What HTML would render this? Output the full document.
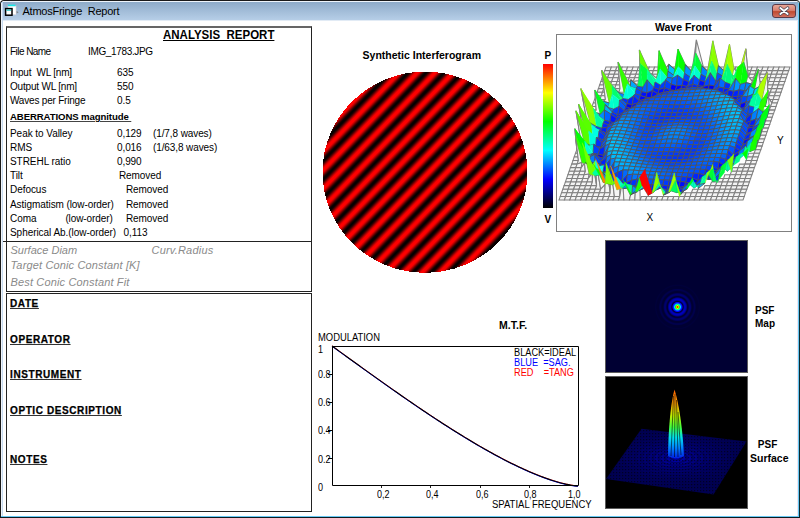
<!DOCTYPE html>
<html><head><meta charset="utf-8"><title>AtmosFringe Report</title><style>
*{margin:0;padding:0;box-sizing:border-box}
html,body{width:800px;height:518px;overflow:hidden;background:#fff}
body{position:relative;font-family:"Liberation Sans",sans-serif;color:#000}
.t{position:absolute;white-space:pre}
.abs{position:absolute}
</style></head>
<body>

<div class="abs" style="left:0;top:0;width:800px;height:518px;border:1px solid #1a1a1a;border-bottom-color:#0a1a20;border-right-color:#0a2a30;border-radius:4px 4px 0 0"></div>
<div class="abs" style="left:3px;top:1px;width:794px;height:1px;background:#eef4fb"></div>
<div class="abs" style="left:1px;top:2px;width:797px;height:18px;background:linear-gradient(#8eabc9,#b6cee7)"></div>
<div class="abs" style="left:1px;top:20px;width:797px;height:1px;background:#e2ebf5"></div>
<div class="abs" style="left:1px;top:3px;width:1px;height:513px;background:#eef4fb"></div>
<div class="abs" style="left:2px;top:2px;width:1px;height:514px;background:#c6daf0"></div>
<div class="abs" style="left:797px;top:20px;width:1px;height:497px;background:#ece6f4"></div>
<div class="abs" style="left:798px;top:3px;width:1px;height:514px;background:#68c8f2"></div>
<div class="abs" style="left:1px;top:516px;width:798px;height:1px;background:#68c8f2"></div>
<div class="abs" style="left:772px;top:4px;width:24px;height:14px;border:1px solid #5a3a48;border-radius:3px;background:linear-gradient(#e8a898 0%,#d98070 45%,#c04a30 55%,#d07060 100%)"></div>
<svg class="abs" style="left:772px;top:4px" width="24" height="14"><path d="M8.3 4 L15.7 10 M15.7 4 L8.3 10" stroke="#404050" stroke-width="3.3" stroke-linecap="round"/><path d="M8.3 4 L15.7 10 M15.7 4 L8.3 10" stroke="#fff" stroke-width="1.9" stroke-linecap="round"/></svg>
<svg class="abs" style="left:3px;top:3px" width="17" height="14"><rect x="5" y="3" width="8" height="8.5" fill="#fff" stroke="#e0d8d8" stroke-width="0.6"/><rect x="5" y="1.6" width="7.5" height="1.6" fill="#18e8e8"/><rect x="2.6" y="5.6" width="6.4" height="6.6" fill="#fff" stroke="#000" stroke-width="1.5"/><rect x="3.4" y="6.4" width="4.8" height="1.3" fill="#10b8b8"/><polygon points="13.6,8 15.6,9.3 13.6,10.6" fill="#808080"/></svg>
<div class="t" style="left:22.5px;top:4.5px;font-size:11px;line-height:13px;letter-spacing:-0.25px;color:#000">AtmosFringe&nbsp; Report</div>


<div class="abs" style="left:6px;top:26px;width:306px;height:266px;border:1px solid #222;border-top:2px solid #666"></div>
<div class="abs" style="left:3px;top:241px;width:308px;height:1px;background:#222"></div>
<div class="abs" style="left:6px;top:293px;width:306px;height:219px;border:1px solid #222"></div>
<div class="abs" style="left:556px;top:34px;width:236px;height:198px;border:1px solid #808080"></div>
<div class="abs" style="left:543px;top:64px;width:10px;height:144px;background:linear-gradient(#ff0000 0%,#ffff00 20%,#00ff00 40%,#00ffff 60%,#0000ff 80%,#000000 100%)"></div>
<div class="abs" style="left:605px;top:240px;width:143px;height:133px;background:#00002c"></div>
<svg class="abs" style="left:605px;top:240px" width="143" height="133"><defs><radialGradient id="psfm" gradientUnits="userSpaceOnUse" cx="72.5" cy="67" r="100"><stop offset="0.0000" stop-color="#ff0000"/><stop offset="0.0050" stop-color="#ff2600"/><stop offset="0.0100" stop-color="#ff9200"/><stop offset="0.0150" stop-color="#cfff00"/><stop offset="0.0200" stop-color="#1bff00"/><stop offset="0.0250" stop-color="#00ff92"/><stop offset="0.0300" stop-color="#00d9ff"/><stop offset="0.0350" stop-color="#006eff"/><stop offset="0.0400" stop-color="#002aff"/><stop offset="0.0450" stop-color="#0009ff"/><stop offset="0.0500" stop-color="#0000a1"/><stop offset="0.0550" stop-color="#000033"/><stop offset="0.0600" stop-color="#000057"/><stop offset="0.0650" stop-color="#000094"/><stop offset="0.0700" stop-color="#0000b4"/><stop offset="0.0750" stop-color="#0000bf"/><stop offset="0.0800" stop-color="#0000b9"/><stop offset="0.0850" stop-color="#0000a5"/><stop offset="0.0900" stop-color="#000085"/><stop offset="0.0950" stop-color="#00005d"/><stop offset="0.1000" stop-color="#000033"/><stop offset="0.1050" stop-color="#000033"/><stop offset="0.1100" stop-color="#000045"/><stop offset="0.1150" stop-color="#00005f"/><stop offset="0.1200" stop-color="#00006c"/><stop offset="0.1250" stop-color="#00006e"/><stop offset="0.1300" stop-color="#000068"/><stop offset="0.1350" stop-color="#000059"/><stop offset="0.1400" stop-color="#000043"/><stop offset="0.1450" stop-color="#000033"/><stop offset="0.1500" stop-color="#000033"/><stop offset="0.1550" stop-color="#000033"/><stop offset="0.1600" stop-color="#00003c"/><stop offset="0.1650" stop-color="#000048"/><stop offset="0.1700" stop-color="#00004d"/><stop offset="0.1750" stop-color="#00004b"/><stop offset="0.1800" stop-color="#000042"/><stop offset="0.1850" stop-color="#000035"/><stop offset="0.1900" stop-color="#000033"/><stop offset="0.1950" stop-color="#000033"/><stop offset="0.2000" stop-color="#000033"/><stop offset="0.2050" stop-color="#000033"/><stop offset="0.2100" stop-color="#000035"/><stop offset="0.2150" stop-color="#00003a"/><stop offset="0.2200" stop-color="#00003a"/><stop offset="0.2250" stop-color="#000035"/><stop offset="0.2300" stop-color="#000033"/><stop offset="0.2350" stop-color="#000033"/><stop offset="0.2400" stop-color="#000033"/><stop offset="0.2450" stop-color="#000033"/><stop offset="0.2500" stop-color="#000033"/><stop offset="0.2550" stop-color="#000033"/><stop offset="0.2600" stop-color="#000033"/><stop offset="0.2650" stop-color="#000033"/><stop offset="0.2700" stop-color="#000033"/><stop offset="0.2750" stop-color="#000033"/><stop offset="0.2800" stop-color="#000033"/><stop offset="0.2850" stop-color="#000033"/><stop offset="0.2900" stop-color="#000033"/><stop offset="0.2950" stop-color="#000033"/><stop offset="0.3000" stop-color="#000033"/><stop offset="0.3050" stop-color="#000033"/><stop offset="0.3100" stop-color="#000033"/><stop offset="0.3150" stop-color="#000033"/><stop offset="0.3200" stop-color="#000033"/><stop offset="0.3250" stop-color="#000033"/><stop offset="0.3300" stop-color="#000033"/><stop offset="0.3350" stop-color="#000033"/><stop offset="0.3400" stop-color="#000033"/><stop offset="0.3450" stop-color="#000033"/><stop offset="0.3500" stop-color="#000033"/><stop offset="0.3550" stop-color="#000033"/><stop offset="0.3600" stop-color="#000033"/><stop offset="0.3650" stop-color="#000033"/><stop offset="0.3700" stop-color="#000033"/><stop offset="0.3750" stop-color="#000033"/><stop offset="0.3800" stop-color="#000033"/><stop offset="0.3850" stop-color="#000033"/><stop offset="0.3900" stop-color="#000033"/><stop offset="0.3950" stop-color="#000033"/><stop offset="0.4000" stop-color="#000033"/><stop offset="0.4050" stop-color="#000033"/><stop offset="0.4100" stop-color="#000033"/><stop offset="0.4150" stop-color="#000033"/><stop offset="0.4200" stop-color="#000033"/><stop offset="0.4250" stop-color="#000033"/><stop offset="0.4300" stop-color="#000033"/><stop offset="0.4350" stop-color="#000033"/><stop offset="0.4400" stop-color="#000033"/><stop offset="0.4450" stop-color="#000033"/><stop offset="0.4500" stop-color="#000033"/><stop offset="0.4550" stop-color="#000033"/><stop offset="0.4600" stop-color="#000033"/><stop offset="0.4650" stop-color="#000033"/><stop offset="0.4700" stop-color="#000033"/><stop offset="0.4750" stop-color="#000033"/><stop offset="0.4800" stop-color="#000033"/><stop offset="0.4850" stop-color="#000033"/><stop offset="0.4900" stop-color="#000033"/><stop offset="0.4950" stop-color="#000033"/><stop offset="0.5000" stop-color="#000033"/><stop offset="0.5050" stop-color="#000033"/><stop offset="0.5100" stop-color="#000033"/><stop offset="0.5150" stop-color="#000033"/><stop offset="0.5200" stop-color="#000033"/><stop offset="0.5250" stop-color="#000033"/><stop offset="0.5300" stop-color="#000033"/><stop offset="0.5350" stop-color="#000033"/><stop offset="0.5400" stop-color="#000033"/><stop offset="0.5450" stop-color="#000033"/><stop offset="0.5500" stop-color="#000033"/><stop offset="0.5550" stop-color="#000033"/><stop offset="0.5600" stop-color="#000033"/><stop offset="0.5650" stop-color="#000033"/><stop offset="0.5700" stop-color="#000033"/><stop offset="0.5750" stop-color="#000033"/><stop offset="0.5800" stop-color="#000033"/><stop offset="0.5850" stop-color="#000033"/><stop offset="0.5900" stop-color="#000033"/><stop offset="0.5950" stop-color="#000033"/><stop offset="0.6000" stop-color="#000033"/><stop offset="0.6050" stop-color="#000033"/><stop offset="0.6100" stop-color="#000033"/><stop offset="0.6150" stop-color="#000033"/><stop offset="0.6200" stop-color="#000033"/><stop offset="0.6250" stop-color="#000033"/><stop offset="0.6300" stop-color="#000033"/><stop offset="0.6350" stop-color="#000033"/><stop offset="0.6400" stop-color="#000033"/><stop offset="0.6450" stop-color="#000033"/><stop offset="0.6500" stop-color="#000033"/><stop offset="0.6550" stop-color="#000033"/><stop offset="0.6600" stop-color="#000033"/><stop offset="0.6650" stop-color="#000033"/><stop offset="0.6700" stop-color="#000033"/><stop offset="0.6750" stop-color="#000033"/><stop offset="0.6800" stop-color="#000033"/><stop offset="0.6850" stop-color="#000033"/><stop offset="0.6900" stop-color="#000033"/><stop offset="0.6950" stop-color="#000033"/><stop offset="0.7000" stop-color="#000033"/><stop offset="0.7050" stop-color="#000033"/><stop offset="0.7100" stop-color="#000033"/><stop offset="0.7150" stop-color="#000033"/><stop offset="0.7200" stop-color="#000033"/><stop offset="0.7250" stop-color="#000033"/><stop offset="0.7300" stop-color="#000033"/><stop offset="0.7350" stop-color="#000033"/><stop offset="0.7400" stop-color="#000033"/><stop offset="0.7450" stop-color="#000033"/><stop offset="0.7500" stop-color="#000033"/><stop offset="0.7550" stop-color="#000033"/><stop offset="0.7600" stop-color="#000033"/><stop offset="0.7650" stop-color="#000033"/><stop offset="0.7700" stop-color="#000033"/><stop offset="0.7750" stop-color="#000033"/><stop offset="0.7800" stop-color="#000033"/><stop offset="0.7850" stop-color="#000033"/><stop offset="0.7900" stop-color="#000033"/><stop offset="0.7950" stop-color="#000033"/><stop offset="0.8000" stop-color="#000033"/><stop offset="0.8050" stop-color="#000033"/><stop offset="0.8100" stop-color="#000033"/><stop offset="0.8150" stop-color="#000033"/><stop offset="0.8200" stop-color="#000033"/><stop offset="0.8250" stop-color="#000033"/><stop offset="0.8300" stop-color="#000033"/><stop offset="0.8350" stop-color="#000033"/><stop offset="0.8400" stop-color="#000033"/><stop offset="0.8450" stop-color="#000033"/><stop offset="0.8500" stop-color="#000033"/><stop offset="0.8550" stop-color="#000033"/><stop offset="0.8600" stop-color="#000033"/><stop offset="0.8650" stop-color="#000033"/><stop offset="0.8700" stop-color="#000033"/><stop offset="0.8750" stop-color="#000033"/><stop offset="0.8800" stop-color="#000033"/><stop offset="0.8850" stop-color="#000033"/><stop offset="0.8900" stop-color="#000033"/><stop offset="0.8950" stop-color="#000033"/><stop offset="0.9000" stop-color="#000033"/><stop offset="0.9050" stop-color="#000033"/><stop offset="0.9100" stop-color="#000033"/><stop offset="0.9150" stop-color="#000033"/><stop offset="0.9200" stop-color="#000033"/><stop offset="0.9250" stop-color="#000033"/><stop offset="0.9300" stop-color="#000033"/><stop offset="0.9350" stop-color="#000033"/><stop offset="0.9400" stop-color="#000033"/><stop offset="0.9450" stop-color="#000033"/><stop offset="0.9500" stop-color="#000033"/><stop offset="0.9550" stop-color="#000033"/><stop offset="0.9600" stop-color="#000033"/><stop offset="0.9650" stop-color="#000033"/><stop offset="0.9700" stop-color="#000033"/><stop offset="0.9750" stop-color="#000033"/><stop offset="0.9800" stop-color="#000033"/><stop offset="0.9850" stop-color="#000033"/><stop offset="0.9900" stop-color="#000033"/><stop offset="0.9950" stop-color="#000033"/><stop offset="1.0000" stop-color="#000033"/></radialGradient></defs><rect width="143" height="133" fill="url(#psfm)"/><rect x="0.5" y="0.5" width="142" height="132" fill="none" stroke="#5c5c5c" stroke-width="1"/></svg>
<div class="abs" style="left:605px;top:376px;width:143px;height:133px;background:#000;border:1px solid #5c5c5c"></div>

<svg width="800" height="518" style="position:absolute;left:0;top:0">
<defs><linearGradient id="ifg" gradientUnits="userSpaceOnUse" x1="361.50" y1="121.00" x2="370.81" y2="129.99" spreadMethod="repeat"><stop offset="0.000" stop-color="#000000"/><stop offset="0.083" stop-color="#120000"/><stop offset="0.167" stop-color="#430000"/><stop offset="0.250" stop-color="#860000"/><stop offset="0.333" stop-color="#c90000"/><stop offset="0.417" stop-color="#fa0000"/><stop offset="0.500" stop-color="#ff0000"/><stop offset="0.583" stop-color="#fa0000"/><stop offset="0.667" stop-color="#c90000"/><stop offset="0.750" stop-color="#860000"/><stop offset="0.833" stop-color="#430000"/><stop offset="0.917" stop-color="#120000"/><stop offset="1.000" stop-color="#000000"/></linearGradient></defs>
<ellipse cx="425.0" cy="172.2" rx="102.5" ry="100.6" fill="url(#ifg)" shape-rendering="crispEdges"/>
</svg>
<svg width="800" height="518" style="position:absolute;left:0;top:0"><polygon points="606.0,67.0 611.4,67.0 610.1,70.6 604.7,70.6" fill="#f4f4f4" stroke="#808080" stroke-width="1.05"/><polygon points="611.4,67.0 616.8,67.0 615.6,70.6 610.1,70.6" fill="#f4f4f4" stroke="#808080" stroke-width="1.05"/><polygon points="616.8,67.0 622.2,67.0 621.0,70.6 615.6,70.6" fill="#f4f4f4" stroke="#808080" stroke-width="1.05"/><polygon points="622.2,67.0 627.6,67.0 626.4,70.6 621.0,70.6" fill="#f4f4f4" stroke="#808080" stroke-width="1.05"/><polygon points="627.6,67.0 633.1,67.0 631.8,70.6 626.4,70.6" fill="#f4f4f4" stroke="#808080" stroke-width="1.05"/><polygon points="633.1,67.0 638.5,67.0 637.2,70.6 631.8,70.6" fill="#f4f4f4" stroke="#808080" stroke-width="1.05"/><polygon points="638.5,67.0 643.9,67.0 642.6,70.6 637.2,70.6" fill="#f4f4f4" stroke="#808080" stroke-width="1.05"/><polygon points="643.9,67.0 649.3,67.0 648.0,70.6 642.6,70.6" fill="#f4f4f4" stroke="#808080" stroke-width="1.05"/><polygon points="649.3,67.0 654.7,67.0 653.4,70.6 648.0,70.6" fill="#f4f4f4" stroke="#808080" stroke-width="1.05"/><polygon points="654.7,67.0 660.1,67.0 658.8,70.6 653.4,70.6" fill="#f4f4f4" stroke="#808080" stroke-width="1.05"/><polygon points="660.1,67.0 665.5,67.0 664.3,70.6 658.8,70.6" fill="#f4f4f4" stroke="#808080" stroke-width="1.05"/><polygon points="665.5,67.0 670.9,67.0 668.8,64.4 664.3,70.6" fill="#f4f4f4" stroke="#808080" stroke-width="1.05"/><polygon points="670.9,67.0 676.4,67.0 674.9,69.4 668.8,64.4" fill="#f4f4f4" stroke="#808080" stroke-width="1.05"/><polygon points="676.4,67.0 681.8,67.0 678.0,49.1 674.9,69.4" fill="#f4f4f4" stroke="#808080" stroke-width="1.05"/><polygon points="681.8,67.0 687.2,67.0 685.3,64.7 678.0,49.1" fill="#f4f4f4" stroke="#808080" stroke-width="1.05"/><polygon points="687.2,67.0 692.6,67.0 691.3,70.6 685.3,64.7" fill="#f4f4f4" stroke="#808080" stroke-width="1.05"/><polygon points="692.6,67.0 696.4,39.9 695.7,53.0 691.3,70.6" fill="#f4f4f4" stroke="#808080" stroke-width="1.05"/><polygon points="696.4,39.9 703.4,67.0 701.9,65.9 695.7,53.0" fill="#f4f4f4" stroke="#808080" stroke-width="1.05"/><polygon points="703.4,67.0 708.8,67.0 707.6,70.6 701.9,65.9" fill="#f4f4f4" stroke="#808080" stroke-width="1.05"/><polygon points="708.8,67.0 714.2,67.0 712.8,40.9 707.6,70.6" fill="#f4f4f4" stroke="#808080" stroke-width="1.05"/><polygon points="714.2,67.0 719.6,67.0 718.4,65.7 712.8,40.9" fill="#f4f4f4" stroke="#808080" stroke-width="1.05"/><polygon points="719.6,67.0 725.1,67.0 723.8,70.6 718.4,65.7" fill="#f4f4f4" stroke="#808080" stroke-width="1.05"/><polygon points="725.1,67.0 730.5,67.0 729.2,70.6 723.8,70.6" fill="#f4f4f4" stroke="#808080" stroke-width="1.05"/><polygon points="730.5,67.0 735.9,67.0 734.6,70.6 729.2,70.6" fill="#f4f4f4" stroke="#808080" stroke-width="1.05"/><polygon points="735.9,67.0 741.3,67.0 740.0,70.6 734.6,70.6" fill="#f4f4f4" stroke="#808080" stroke-width="1.05"/><polygon points="741.3,67.0 746.7,67.0 745.4,70.6 740.0,70.6" fill="#f4f4f4" stroke="#808080" stroke-width="1.05"/><polygon points="746.7,67.0 752.1,67.0 750.8,70.6 745.4,70.6" fill="#f4f4f4" stroke="#808080" stroke-width="1.05"/><polygon points="752.1,67.0 757.5,67.0 756.3,70.6 750.8,70.6" fill="#f4f4f4" stroke="#808080" stroke-width="1.05"/><polygon points="757.5,67.0 762.9,67.0 761.7,70.6 756.3,70.6" fill="#f4f4f4" stroke="#808080" stroke-width="1.05"/><polygon points="762.9,67.0 768.4,67.0 767.1,70.6 761.7,70.6" fill="#f4f4f4" stroke="#808080" stroke-width="1.05"/><polygon points="768.4,67.0 773.8,67.0 772.5,70.6 767.1,70.6" fill="#f4f4f4" stroke="#808080" stroke-width="1.05"/><polygon points="773.8,67.0 779.2,67.0 777.9,70.6 772.5,70.6" fill="#f4f4f4" stroke="#808080" stroke-width="1.05"/><polygon points="779.2,67.0 784.6,67.0 783.3,70.6 777.9,70.6" fill="#f4f4f4" stroke="#808080" stroke-width="1.05"/><polygon points="784.6,67.0 790.0,67.0 788.7,70.6 783.3,70.6" fill="#f4f4f4" stroke="#808080" stroke-width="1.05"/><polygon points="604.7,70.6 610.1,70.6 608.9,74.2 603.5,74.2" fill="#f4f4f4" stroke="#808080" stroke-width="1.05"/><polygon points="610.1,70.6 615.6,70.6 614.3,74.2 608.9,74.2" fill="#f4f4f4" stroke="#808080" stroke-width="1.05"/><polygon points="615.6,70.6 621.0,70.6 619.7,74.2 614.3,74.2" fill="#f4f4f4" stroke="#808080" stroke-width="1.05"/><polygon points="621.0,70.6 626.4,70.6 625.1,74.2 619.7,74.2" fill="#f4f4f4" stroke="#808080" stroke-width="1.05"/><polygon points="626.4,70.6 631.8,70.6 630.5,74.2 625.1,74.2" fill="#f4f4f4" stroke="#808080" stroke-width="1.05"/><polygon points="631.8,70.6 637.2,70.6 635.9,74.2 630.5,74.2" fill="#f4f4f4" stroke="#808080" stroke-width="1.05"/><polygon points="637.2,70.6 642.6,70.6 641.3,74.2 635.9,74.2" fill="#f4f4f4" stroke="#808080" stroke-width="1.05"/><polygon points="642.6,70.6 648.0,70.6 646.8,74.2 641.3,74.2" fill="#f4f4f4" stroke="#808080" stroke-width="1.05"/><polygon points="648.0,70.6 653.4,70.6 652.2,74.2 646.8,74.2" fill="#f4f4f4" stroke="#808080" stroke-width="1.05"/><polygon points="653.4,70.6 658.8,70.6 657.6,74.2 652.2,74.2" fill="#f4f4f4" stroke="#808080" stroke-width="1.05"/><polygon points="658.8,70.6 664.3,70.6 659.0,50.7 657.6,74.2" fill="#f4f4f4" stroke="#808080" stroke-width="1.05"/><polygon points="664.3,70.6 668.8,64.4 667.9,71.2 659.0,50.7" fill="#f4f4f4" stroke="#808080" stroke-width="1.05"/><polygon points="723.8,70.6 729.2,70.6 729.5,44.0 722.5,74.2" fill="#f4f4f4" stroke="#808080" stroke-width="1.05"/><polygon points="729.2,70.6 734.6,70.6 733.7,68.1 729.5,44.0" fill="#f4f4f4" stroke="#808080" stroke-width="1.05"/><polygon points="734.6,70.6 740.0,70.6 738.8,74.2 733.7,68.1" fill="#f4f4f4" stroke="#808080" stroke-width="1.05"/><polygon points="740.0,70.6 745.4,70.6 744.2,74.2 738.8,74.2" fill="#f4f4f4" stroke="#808080" stroke-width="1.05"/><polygon points="745.4,70.6 750.8,70.6 749.6,74.2 744.2,74.2" fill="#f4f4f4" stroke="#808080" stroke-width="1.05"/><polygon points="750.8,70.6 756.3,70.6 755.0,74.2 749.6,74.2" fill="#f4f4f4" stroke="#808080" stroke-width="1.05"/><polygon points="756.3,70.6 761.7,70.6 760.4,74.2 755.0,74.2" fill="#f4f4f4" stroke="#808080" stroke-width="1.05"/><polygon points="761.7,70.6 767.1,70.6 765.8,74.2 760.4,74.2" fill="#f4f4f4" stroke="#808080" stroke-width="1.05"/><polygon points="767.1,70.6 772.5,70.6 771.2,74.2 765.8,74.2" fill="#f4f4f4" stroke="#808080" stroke-width="1.05"/><polygon points="772.5,70.6 777.9,70.6 776.6,74.2 771.2,74.2" fill="#f4f4f4" stroke="#808080" stroke-width="1.05"/><polygon points="777.9,70.6 783.3,70.6 782.0,74.2 776.6,74.2" fill="#f4f4f4" stroke="#808080" stroke-width="1.05"/><polygon points="783.3,70.6 788.7,70.6 787.5,74.2 782.0,74.2" fill="#f4f4f4" stroke="#808080" stroke-width="1.05"/><polygon points="603.5,74.2 608.9,74.2 607.6,77.8 602.2,77.8" fill="#f4f4f4" stroke="#808080" stroke-width="1.05"/><polygon points="608.9,74.2 614.3,74.2 613.0,77.8 607.6,77.8" fill="#f4f4f4" stroke="#808080" stroke-width="1.05"/><polygon points="614.3,74.2 619.7,74.2 618.4,77.8 613.0,77.8" fill="#f4f4f4" stroke="#808080" stroke-width="1.05"/><polygon points="619.7,74.2 625.1,74.2 623.8,77.8 618.4,77.8" fill="#f4f4f4" stroke="#808080" stroke-width="1.05"/><polygon points="625.1,74.2 630.5,74.2 629.2,77.8 623.8,77.8" fill="#f4f4f4" stroke="#808080" stroke-width="1.05"/><polygon points="630.5,74.2 635.9,74.2 634.7,77.8 629.2,77.8" fill="#f4f4f4" stroke="#808080" stroke-width="1.05"/><polygon points="635.9,74.2 641.3,74.2 640.1,77.8 634.7,77.8" fill="#f4f4f4" stroke="#808080" stroke-width="1.05"/><polygon points="641.3,74.2 646.8,74.2 639.4,50.0 640.1,77.8" fill="#f4f4f4" stroke="#808080" stroke-width="1.05"/><polygon points="646.8,74.2 652.2,74.2 650.0,73.3 639.4,50.0" fill="#f4f4f4" stroke="#808080" stroke-width="1.05"/><polygon points="652.2,74.2 657.6,74.2 656.3,77.8 650.0,73.3" fill="#f4f4f4" stroke="#808080" stroke-width="1.05"/><polygon points="733.7,68.1 738.8,74.2 737.5,77.8 732.3,75.1" fill="#f4f4f4" stroke="#808080" stroke-width="1.05"/><polygon points="738.8,74.2 744.2,74.2 745.8,48.8 737.5,77.8" fill="#f4f4f4" stroke="#808080" stroke-width="1.05"/><polygon points="744.2,74.2 749.6,74.2 748.3,77.8 745.8,48.8" fill="#f4f4f4" stroke="#808080" stroke-width="1.05"/><polygon points="749.6,74.2 755.0,74.2 753.7,77.8 748.3,77.8" fill="#f4f4f4" stroke="#808080" stroke-width="1.05"/><polygon points="755.0,74.2 760.4,74.2 759.1,77.8 753.7,77.8" fill="#f4f4f4" stroke="#808080" stroke-width="1.05"/><polygon points="760.4,74.2 765.8,74.2 764.5,77.8 759.1,77.8" fill="#f4f4f4" stroke="#808080" stroke-width="1.05"/><polygon points="765.8,74.2 771.2,74.2 770.0,77.8 764.5,77.8" fill="#f4f4f4" stroke="#808080" stroke-width="1.05"/><polygon points="771.2,74.2 776.6,74.2 775.4,77.8 770.0,77.8" fill="#f4f4f4" stroke="#808080" stroke-width="1.05"/><polygon points="776.6,74.2 782.0,74.2 780.8,77.8 775.4,77.8" fill="#f4f4f4" stroke="#808080" stroke-width="1.05"/><polygon points="782.0,74.2 787.5,74.2 786.2,77.8 780.8,77.8" fill="#f4f4f4" stroke="#808080" stroke-width="1.05"/><polygon points="602.2,77.8 607.6,77.8 606.3,81.4 600.9,81.4" fill="#f4f4f4" stroke="#808080" stroke-width="1.05"/><polygon points="607.6,77.8 613.0,77.8 611.7,81.4 606.3,81.4" fill="#f4f4f4" stroke="#808080" stroke-width="1.05"/><polygon points="613.0,77.8 618.4,77.8 617.2,81.4 611.7,81.4" fill="#f4f4f4" stroke="#808080" stroke-width="1.05"/><polygon points="618.4,77.8 623.8,77.8 622.6,81.4 617.2,81.4" fill="#f4f4f4" stroke="#808080" stroke-width="1.05"/><polygon points="623.8,77.8 629.2,77.8 628.0,81.4 622.6,81.4" fill="#f4f4f4" stroke="#808080" stroke-width="1.05"/><polygon points="629.2,77.8 634.7,77.8 633.4,81.4 628.0,81.4" fill="#f4f4f4" stroke="#808080" stroke-width="1.05"/><polygon points="634.7,77.8 640.1,77.8 638.7,80.8 633.4,81.4" fill="#f4f4f4" stroke="#808080" stroke-width="1.05"/><polygon points="640.1,77.8 639.4,50.0 640.2,63.6 638.7,80.8" fill="#f4f4f4" stroke="#808080" stroke-width="1.05"/><polygon points="745.8,48.8 748.3,77.8 747.7,75.9 743.7,62.0" fill="#f4f4f4" stroke="#808080" stroke-width="1.05"/><polygon points="748.3,77.8 753.7,77.8 752.4,81.4 747.7,75.9" fill="#f4f4f4" stroke="#808080" stroke-width="1.05"/><polygon points="753.7,77.8 759.1,77.8 757.9,81.4 752.4,81.4" fill="#f4f4f4" stroke="#808080" stroke-width="1.05"/><polygon points="759.1,77.8 764.5,77.8 763.3,81.4 757.9,81.4" fill="#f4f4f4" stroke="#808080" stroke-width="1.05"/><polygon points="764.5,77.8 770.0,77.8 768.7,81.4 763.3,81.4" fill="#f4f4f4" stroke="#808080" stroke-width="1.05"/><polygon points="770.0,77.8 775.4,77.8 774.1,81.4 768.7,81.4" fill="#f4f4f4" stroke="#808080" stroke-width="1.05"/><polygon points="775.4,77.8 780.8,77.8 779.5,81.4 774.1,81.4" fill="#f4f4f4" stroke="#808080" stroke-width="1.05"/><polygon points="780.8,77.8 786.2,77.8 784.9,81.4 779.5,81.4" fill="#f4f4f4" stroke="#808080" stroke-width="1.05"/><polygon points="600.9,81.4 606.3,81.4 605.1,85.0 599.6,85.0" fill="#f4f4f4" stroke="#808080" stroke-width="1.05"/><polygon points="606.3,81.4 611.7,81.4 610.5,85.0 605.1,85.0" fill="#f4f4f4" stroke="#808080" stroke-width="1.05"/><polygon points="611.7,81.4 617.2,81.4 615.9,85.0 610.5,85.0" fill="#f4f4f4" stroke="#808080" stroke-width="1.05"/><polygon points="617.2,81.4 622.6,81.4 621.3,85.0 615.9,85.0" fill="#f4f4f4" stroke="#808080" stroke-width="1.05"/><polygon points="622.6,81.4 628.0,81.4 626.7,85.0 621.3,85.0" fill="#f4f4f4" stroke="#808080" stroke-width="1.05"/><polygon points="628.0,81.4 633.4,81.4 630.8,80.0 626.7,85.0" fill="#f4f4f4" stroke="#808080" stroke-width="1.05"/><polygon points="633.4,81.4 638.7,80.8 637.5,85.0 630.8,80.0" fill="#f4f4f4" stroke="#808080" stroke-width="1.05"/><polygon points="747.7,75.9 752.4,81.4 751.3,84.0 746.1,82.6" fill="#f4f4f4" stroke="#808080" stroke-width="1.05"/><polygon points="752.4,81.4 757.9,81.4 756.6,85.0 751.3,84.0" fill="#f4f4f4" stroke="#808080" stroke-width="1.05"/><polygon points="757.9,81.4 763.3,81.4 762.0,85.0 756.6,85.0" fill="#f4f4f4" stroke="#808080" stroke-width="1.05"/><polygon points="763.3,81.4 768.7,81.4 767.4,85.0 762.0,85.0" fill="#f4f4f4" stroke="#808080" stroke-width="1.05"/><polygon points="768.7,81.4 774.1,81.4 772.8,85.0 767.4,85.0" fill="#f4f4f4" stroke="#808080" stroke-width="1.05"/><polygon points="774.1,81.4 779.5,81.4 778.2,85.0 772.8,85.0" fill="#f4f4f4" stroke="#808080" stroke-width="1.05"/><polygon points="779.5,81.4 784.9,81.4 783.6,85.0 778.2,85.0" fill="#f4f4f4" stroke="#808080" stroke-width="1.05"/><polygon points="599.6,85.0 605.1,85.0 603.8,88.6 598.4,88.6" fill="#f4f4f4" stroke="#808080" stroke-width="1.05"/><polygon points="605.1,85.0 610.5,85.0 609.2,88.6 603.8,88.6" fill="#f4f4f4" stroke="#808080" stroke-width="1.05"/><polygon points="610.5,85.0 615.9,85.0 614.6,88.6 609.2,88.6" fill="#f4f4f4" stroke="#808080" stroke-width="1.05"/><polygon points="615.9,85.0 621.3,85.0 620.0,88.6 614.6,88.6" fill="#f4f4f4" stroke="#808080" stroke-width="1.05"/><polygon points="621.3,85.0 626.7,85.0 618.1,62.1 620.0,88.6" fill="#f4f4f4" stroke="#808080" stroke-width="1.05"/><polygon points="626.7,85.0 630.8,80.0 630.3,86.6 618.1,62.1" fill="#f4f4f4" stroke="#808080" stroke-width="1.05"/><polygon points="751.3,84.0 756.6,85.0 758.4,69.2 749.9,88.6" fill="#f4f4f4" stroke="#808080" stroke-width="1.05"/><polygon points="756.6,85.0 762.0,85.0 760.7,88.6 758.4,69.2" fill="#f4f4f4" stroke="#808080" stroke-width="1.05"/><polygon points="762.0,85.0 767.4,85.0 766.1,88.6 760.7,88.6" fill="#f4f4f4" stroke="#808080" stroke-width="1.05"/><polygon points="767.4,85.0 772.8,85.0 771.6,88.6 766.1,88.6" fill="#f4f4f4" stroke="#808080" stroke-width="1.05"/><polygon points="772.8,85.0 778.2,85.0 777.0,88.6 771.6,88.6" fill="#f4f4f4" stroke="#808080" stroke-width="1.05"/><polygon points="778.2,85.0 783.6,85.0 782.4,88.6 777.0,88.6" fill="#f4f4f4" stroke="#808080" stroke-width="1.05"/><polygon points="598.4,88.6 603.8,88.6 602.5,92.2 597.1,92.2" fill="#f4f4f4" stroke="#808080" stroke-width="1.05"/><polygon points="603.8,88.6 609.2,88.6 607.9,92.2 602.5,92.2" fill="#f4f4f4" stroke="#808080" stroke-width="1.05"/><polygon points="609.2,88.6 614.6,88.6 613.3,92.2 607.9,92.2" fill="#f4f4f4" stroke="#808080" stroke-width="1.05"/><polygon points="614.6,88.6 620.0,88.6 618.8,92.2 613.3,92.2" fill="#f4f4f4" stroke="#808080" stroke-width="1.05"/><polygon points="620.0,88.6 618.1,62.1 624.2,92.2 618.8,92.2" fill="#f4f4f4" stroke="#808080" stroke-width="1.05"/><polygon points="758.4,69.2 760.7,88.6 760.5,86.0 754.6,89.1" fill="#f4f4f4" stroke="#808080" stroke-width="1.05"/><polygon points="760.7,88.6 766.1,88.6 764.9,92.2 760.5,86.0" fill="#f4f4f4" stroke="#808080" stroke-width="1.05"/><polygon points="766.1,88.6 771.6,88.6 770.3,92.2 764.9,92.2" fill="#f4f4f4" stroke="#808080" stroke-width="1.05"/><polygon points="771.6,88.6 777.0,88.6 775.7,92.2 770.3,92.2" fill="#f4f4f4" stroke="#808080" stroke-width="1.05"/><polygon points="777.0,88.6 782.4,88.6 781.1,92.2 775.7,92.2" fill="#f4f4f4" stroke="#808080" stroke-width="1.05"/><polygon points="597.1,92.2 602.5,92.2 601.2,95.8 595.8,95.8" fill="#f4f4f4" stroke="#808080" stroke-width="1.05"/><polygon points="602.5,92.2 607.9,92.2 606.7,95.8 601.2,95.8" fill="#f4f4f4" stroke="#808080" stroke-width="1.05"/><polygon points="607.9,92.2 613.3,92.2 612.1,95.8 606.7,95.8" fill="#f4f4f4" stroke="#808080" stroke-width="1.05"/><polygon points="613.3,92.2 618.8,92.2 615.6,89.6 612.1,95.8" fill="#f4f4f4" stroke="#808080" stroke-width="1.05"/><polygon points="760.5,86.0 764.9,92.2 763.6,95.8 758.4,94.8" fill="#f4f4f4" stroke="#808080" stroke-width="1.05"/><polygon points="764.9,92.2 770.3,92.2 769.0,95.8 763.6,95.8" fill="#f4f4f4" stroke="#808080" stroke-width="1.05"/><polygon points="770.3,92.2 775.7,92.2 774.4,95.8 769.0,95.8" fill="#f4f4f4" stroke="#808080" stroke-width="1.05"/><polygon points="775.7,92.2 781.1,92.2 779.8,95.8 774.4,95.8" fill="#f4f4f4" stroke="#808080" stroke-width="1.05"/><polygon points="595.8,95.8 601.2,95.8 600.0,99.4 594.6,99.4" fill="#f4f4f4" stroke="#808080" stroke-width="1.05"/><polygon points="601.2,95.8 606.7,95.8 605.4,99.4 600.0,99.4" fill="#f4f4f4" stroke="#808080" stroke-width="1.05"/><polygon points="606.7,95.8 612.1,95.8 601.7,70.4 605.4,99.4" fill="#f4f4f4" stroke="#808080" stroke-width="1.05"/><polygon points="612.1,95.8 615.6,89.6 611.9,85.3 601.7,70.4" fill="#f4f4f4" stroke="#808080" stroke-width="1.05"/><polygon points="758.4,94.8 763.6,95.8 767.5,72.7 759.6,84.9" fill="#f4f4f4" stroke="#808080" stroke-width="1.05"/><polygon points="763.6,95.8 769.0,95.8 767.7,99.4 767.5,72.7" fill="#f4f4f4" stroke="#808080" stroke-width="1.05"/><polygon points="769.0,95.8 774.4,95.8 773.2,99.4 767.7,99.4" fill="#f4f4f4" stroke="#808080" stroke-width="1.05"/><polygon points="774.4,95.8 779.8,95.8 778.6,99.4 773.2,99.4" fill="#f4f4f4" stroke="#808080" stroke-width="1.05"/><polygon points="594.6,99.4 600.0,99.4 598.7,102.9 593.3,102.9" fill="#f4f4f4" stroke="#808080" stroke-width="1.05"/><polygon points="600.0,99.4 605.4,99.4 603.6,101.3 598.7,102.9" fill="#f4f4f4" stroke="#808080" stroke-width="1.05"/><polygon points="605.4,99.4 601.7,70.4 609.5,102.9 603.6,101.3" fill="#f4f4f4" stroke="#808080" stroke-width="1.05"/><polygon points="767.5,72.7 767.7,99.4 767.7,96.8 761.7,99.8" fill="#f4f4f4" stroke="#808080" stroke-width="1.05"/><polygon points="767.7,99.4 773.2,99.4 771.9,102.9 767.7,96.8" fill="#f4f4f4" stroke="#808080" stroke-width="1.05"/><polygon points="773.2,99.4 778.6,99.4 777.3,102.9 771.9,102.9" fill="#f4f4f4" stroke="#808080" stroke-width="1.05"/><polygon points="593.3,102.9 598.7,102.9 597.4,106.5 592.0,106.5" fill="#f4f4f4" stroke="#808080" stroke-width="1.05"/><polygon points="598.7,102.9 603.6,101.3 601.1,101.2 597.4,106.5" fill="#f4f4f4" stroke="#808080" stroke-width="1.05"/><polygon points="767.7,96.8 771.9,102.9 770.6,106.5 765.2,106.5" fill="#f4f4f4" stroke="#808080" stroke-width="1.05"/><polygon points="771.9,102.9 777.3,102.9 776.0,106.5 770.6,106.5" fill="#f4f4f4" stroke="#808080" stroke-width="1.05"/><polygon points="592.0,106.5 597.4,106.5 596.2,110.1 590.8,110.1" fill="#f4f4f4" stroke="#808080" stroke-width="1.05"/><polygon points="597.4,106.5 601.1,101.2 594.8,90.0 596.2,110.1" fill="#f4f4f4" stroke="#808080" stroke-width="1.05"/><polygon points="765.2,106.5 770.6,106.5 769.3,110.1 768.2,90.4" fill="#f4f4f4" stroke="#808080" stroke-width="1.05"/><polygon points="770.6,106.5 776.0,106.5 774.8,110.1 769.3,110.1" fill="#f4f4f4" stroke="#808080" stroke-width="1.05"/><polygon points="590.8,110.1 596.2,110.1 594.3,112.1 589.5,113.7" fill="#f4f4f4" stroke="#808080" stroke-width="1.05"/><polygon points="596.2,110.1 594.8,90.0 600.3,113.7 594.3,112.1" fill="#f4f4f4" stroke="#808080" stroke-width="1.05"/><polygon points="763.9,110.1 769.3,110.1 768.1,113.7 762.7,113.7" fill="#f4f4f4" stroke="#808080" stroke-width="1.05"/><polygon points="769.3,110.1 774.8,110.1 773.5,113.7 768.1,113.7" fill="#f4f4f4" stroke="#808080" stroke-width="1.05"/><polygon points="589.5,113.7 594.3,112.1 591.6,111.5 588.2,117.3" fill="#f4f4f4" stroke="#808080" stroke-width="1.05"/><polygon points="768.1,113.7 773.5,113.7 772.2,117.3 766.8,117.3" fill="#f4f4f4" stroke="#808080" stroke-width="1.05"/><polygon points="588.2,117.3 591.6,111.5 580.9,88.6 586.9,120.9" fill="#f4f4f4" stroke="#808080" stroke-width="1.05"/><polygon points="766.8,117.3 772.2,117.3 770.9,120.9 765.5,120.9" fill="#f4f4f4" stroke="#808080" stroke-width="1.05"/><polygon points="586.9,120.9 580.9,88.6 590.6,123.3 585.7,124.5" fill="#f4f4f4" stroke="#808080" stroke-width="1.05"/><polygon points="765.5,120.9 770.9,120.9 769.7,124.5 764.3,124.5" fill="#f4f4f4" stroke="#808080" stroke-width="1.05"/><polygon points="585.7,124.5 590.6,123.3 587.7,122.3 584.4,128.1" fill="#f4f4f4" stroke="#808080" stroke-width="1.05"/><polygon points="764.3,124.5 769.7,124.5 768.4,128.1 763.0,128.1" fill="#f4f4f4" stroke="#808080" stroke-width="1.05"/><polygon points="584.4,128.1 587.7,122.3 578.6,104.2 583.1,131.7" fill="#f4f4f4" stroke="#808080" stroke-width="1.05"/><polygon points="763.0,128.1 768.4,128.1 767.1,131.7 761.7,131.7" fill="#f4f4f4" stroke="#808080" stroke-width="1.05"/><polygon points="583.1,131.7 578.6,104.2 585.0,129.0 581.9,135.3" fill="#f4f4f4" stroke="#808080" stroke-width="1.05"/><polygon points="761.7,131.7 767.1,131.7 765.9,135.3 760.5,135.3" fill="#f4f4f4" stroke="#808080" stroke-width="1.05"/><polygon points="581.9,135.3 585.0,129.0 575.9,110.8 580.6,138.9" fill="#f4f4f4" stroke="#808080" stroke-width="1.05"/><polygon points="760.5,135.3 765.9,135.3 764.6,138.9 759.2,138.9" fill="#f4f4f4" stroke="#808080" stroke-width="1.05"/><polygon points="580.6,138.9 575.9,110.8 584.7,142.5 579.3,142.5" fill="#f4f4f4" stroke="#808080" stroke-width="1.05"/><polygon points="759.2,138.9 764.6,138.9 763.3,142.5 757.9,142.5" fill="#f4f4f4" stroke="#808080" stroke-width="1.05"/><polygon points="579.3,142.5 584.7,142.5 581.8,141.4 578.1,146.1" fill="#f4f4f4" stroke="#808080" stroke-width="1.05"/><polygon points="757.9,142.5 763.3,142.5 762.1,146.1 756.6,146.1" fill="#f4f4f4" stroke="#808080" stroke-width="1.05"/><polygon points="578.1,146.1 581.8,141.4 574.8,128.7 576.8,149.7" fill="#f4f4f4" stroke="#808080" stroke-width="1.05"/><polygon points="756.6,146.1 762.1,146.1 760.8,149.7 755.4,149.7" fill="#f4f4f4" stroke="#808080" stroke-width="1.05"/><polygon points="576.8,149.7 574.8,128.7 580.9,153.3 575.5,153.3" fill="#f4f4f4" stroke="#808080" stroke-width="1.05"/><polygon points="755.4,149.7 760.8,149.7 759.5,153.3 754.1,153.3" fill="#f4f4f4" stroke="#808080" stroke-width="1.05"/><polygon points="575.5,153.3 580.9,153.3 579.7,156.9 574.2,156.9" fill="#f4f4f4" stroke="#808080" stroke-width="1.05"/><polygon points="580.9,153.3 586.3,153.3 583.4,151.8 579.7,156.9" fill="#f4f4f4" stroke="#808080" stroke-width="1.05"/><polygon points="748.7,153.3 754.1,153.3 752.8,156.9 747.4,156.9" fill="#f4f4f4" stroke="#808080" stroke-width="1.05"/><polygon points="754.1,153.3 759.5,153.3 758.2,156.9 752.8,156.9" fill="#f4f4f4" stroke="#808080" stroke-width="1.05"/><polygon points="574.2,156.9 579.7,156.9 578.4,160.5 573.0,160.5" fill="#f4f4f4" stroke="#808080" stroke-width="1.05"/><polygon points="579.7,156.9 583.4,151.8 575.5,135.5 578.4,160.5" fill="#f4f4f4" stroke="#808080" stroke-width="1.05"/><polygon points="747.4,156.9 752.8,156.9 751.6,160.5 746.1,160.5" fill="#f4f4f4" stroke="#808080" stroke-width="1.05"/><polygon points="752.8,156.9 758.2,156.9 757.0,160.5 751.6,160.5" fill="#f4f4f4" stroke="#808080" stroke-width="1.05"/><polygon points="573.0,160.5 578.4,160.5 577.1,164.1 571.7,164.1" fill="#f4f4f4" stroke="#808080" stroke-width="1.05"/><polygon points="578.4,160.5 575.5,135.5 582.0,162.5 577.1,164.1" fill="#f4f4f4" stroke="#808080" stroke-width="1.05"/><polygon points="746.1,160.5 751.6,160.5 750.3,164.1 744.9,164.1" fill="#f4f4f4" stroke="#808080" stroke-width="1.05"/><polygon points="751.6,160.5 757.0,160.5 755.7,164.1 750.3,164.1" fill="#f4f4f4" stroke="#808080" stroke-width="1.05"/><polygon points="571.7,164.1 577.1,164.1 575.8,167.6 570.4,167.6" fill="#f4f4f4" stroke="#808080" stroke-width="1.05"/><polygon points="577.1,164.1 582.0,162.5 581.3,167.6 575.8,167.6" fill="#f4f4f4" stroke="#808080" stroke-width="1.05"/><polygon points="582.0,162.5 587.9,164.1 585.1,162.5 581.3,167.6" fill="#f4f4f4" stroke="#808080" stroke-width="1.05"/><polygon points="739.5,164.1 744.9,164.1 743.6,167.6 738.2,167.6" fill="#f4f4f4" stroke="#808080" stroke-width="1.05"/><polygon points="744.9,164.1 750.3,164.1 749.0,167.6 743.6,167.6" fill="#f4f4f4" stroke="#808080" stroke-width="1.05"/><polygon points="750.3,164.1 755.7,164.1 754.4,167.6 749.0,167.6" fill="#f4f4f4" stroke="#808080" stroke-width="1.05"/><polygon points="570.4,167.6 575.8,167.6 574.6,171.2 569.2,171.2" fill="#f4f4f4" stroke="#808080" stroke-width="1.05"/><polygon points="575.8,167.6 581.3,167.6 580.0,171.2 574.6,171.2" fill="#f4f4f4" stroke="#808080" stroke-width="1.05"/><polygon points="581.3,167.6 585.1,162.5 585.4,171.2 580.0,171.2" fill="#f4f4f4" stroke="#808080" stroke-width="1.05"/><polygon points="585.1,162.5 591.7,166.3 582.2,142.7 585.4,171.2" fill="#f4f4f4" stroke="#808080" stroke-width="1.05"/><polygon points="732.8,167.6 738.2,167.6 736.9,171.2 731.5,171.2" fill="#f4f4f4" stroke="#808080" stroke-width="1.05"/><polygon points="738.2,167.6 743.6,167.6 742.3,171.2 736.9,171.2" fill="#f4f4f4" stroke="#808080" stroke-width="1.05"/><polygon points="743.6,167.6 749.0,167.6 747.8,171.2 742.3,171.2" fill="#f4f4f4" stroke="#808080" stroke-width="1.05"/><polygon points="749.0,167.6 754.4,167.6 753.2,171.2 747.8,171.2" fill="#f4f4f4" stroke="#808080" stroke-width="1.05"/><polygon points="569.2,171.2 574.6,171.2 573.3,174.8 567.9,174.8" fill="#f4f4f4" stroke="#808080" stroke-width="1.05"/><polygon points="574.6,171.2 580.0,171.2 578.7,174.8 573.3,174.8" fill="#f4f4f4" stroke="#808080" stroke-width="1.05"/><polygon points="580.0,171.2 585.4,171.2 584.1,174.8 578.7,174.8" fill="#f4f4f4" stroke="#808080" stroke-width="1.05"/><polygon points="585.4,171.2 582.2,142.7 589.3,174.1 584.1,174.8" fill="#f4f4f4" stroke="#808080" stroke-width="1.05"/><polygon points="731.5,171.2 736.9,171.2 735.7,174.8 730.2,174.8" fill="#f4f4f4" stroke="#808080" stroke-width="1.05"/><polygon points="736.9,171.2 742.3,171.2 741.1,174.8 735.7,174.8" fill="#f4f4f4" stroke="#808080" stroke-width="1.05"/><polygon points="742.3,171.2 747.8,171.2 746.5,174.8 741.1,174.8" fill="#f4f4f4" stroke="#808080" stroke-width="1.05"/><polygon points="747.8,171.2 753.2,171.2 751.9,174.8 746.5,174.8" fill="#f4f4f4" stroke="#808080" stroke-width="1.05"/><polygon points="567.9,174.8 573.3,174.8 572.0,178.4 566.6,178.4" fill="#f4f4f4" stroke="#808080" stroke-width="1.05"/><polygon points="573.3,174.8 578.7,174.8 577.4,178.4 572.0,178.4" fill="#f4f4f4" stroke="#808080" stroke-width="1.05"/><polygon points="578.7,174.8 584.1,174.8 582.9,178.4 577.4,178.4" fill="#f4f4f4" stroke="#808080" stroke-width="1.05"/><polygon points="584.1,174.8 589.3,174.1 588.3,178.4 582.9,178.4" fill="#f4f4f4" stroke="#808080" stroke-width="1.05"/><polygon points="589.3,174.1 595.0,174.8 592.3,173.3 588.3,178.4" fill="#f4f4f4" stroke="#808080" stroke-width="1.05"/><polygon points="724.8,174.8 730.2,174.8 729.0,178.4 723.6,178.4" fill="#f4f4f4" stroke="#808080" stroke-width="1.05"/><polygon points="730.2,174.8 735.7,174.8 734.4,178.4 729.0,178.4" fill="#f4f4f4" stroke="#808080" stroke-width="1.05"/><polygon points="735.7,174.8 741.1,174.8 739.8,178.4 734.4,178.4" fill="#f4f4f4" stroke="#808080" stroke-width="1.05"/><polygon points="741.1,174.8 746.5,174.8 745.2,178.4 739.8,178.4" fill="#f4f4f4" stroke="#808080" stroke-width="1.05"/><polygon points="746.5,174.8 751.9,174.8 750.6,178.4 745.2,178.4" fill="#f4f4f4" stroke="#808080" stroke-width="1.05"/><polygon points="566.6,178.4 572.0,178.4 570.8,182.0 565.4,182.0" fill="#f4f4f4" stroke="#808080" stroke-width="1.05"/><polygon points="572.0,178.4 577.4,178.4 576.2,182.0 570.8,182.0" fill="#f4f4f4" stroke="#808080" stroke-width="1.05"/><polygon points="577.4,178.4 582.9,178.4 581.6,182.0 576.2,182.0" fill="#f4f4f4" stroke="#808080" stroke-width="1.05"/><polygon points="582.9,178.4 588.3,178.4 587.0,182.0 581.6,182.0" fill="#f4f4f4" stroke="#808080" stroke-width="1.05"/><polygon points="588.3,178.4 592.3,173.3 592.4,182.0 587.0,182.0" fill="#f4f4f4" stroke="#808080" stroke-width="1.05"/><polygon points="592.3,173.3 596.4,168.2 593.1,163.8 592.4,182.0" fill="#f4f4f4" stroke="#808080" stroke-width="1.05"/><polygon points="718.2,178.4 723.6,178.4 722.3,182.0 716.9,182.0" fill="#f4f4f4" stroke="#808080" stroke-width="1.05"/><polygon points="723.6,178.4 729.0,178.4 727.7,182.0 722.3,182.0" fill="#f4f4f4" stroke="#808080" stroke-width="1.05"/><polygon points="729.0,178.4 734.4,178.4 733.1,182.0 727.7,182.0" fill="#f4f4f4" stroke="#808080" stroke-width="1.05"/><polygon points="734.4,178.4 739.8,178.4 738.5,182.0 733.1,182.0" fill="#f4f4f4" stroke="#808080" stroke-width="1.05"/><polygon points="739.8,178.4 745.2,178.4 743.9,182.0 738.5,182.0" fill="#f4f4f4" stroke="#808080" stroke-width="1.05"/><polygon points="745.2,178.4 750.6,178.4 749.4,182.0 743.9,182.0" fill="#f4f4f4" stroke="#808080" stroke-width="1.05"/><polygon points="565.4,182.0 570.8,182.0 569.5,185.6 564.1,185.6" fill="#f4f4f4" stroke="#808080" stroke-width="1.05"/><polygon points="570.8,182.0 576.2,182.0 574.9,185.6 569.5,185.6" fill="#f4f4f4" stroke="#808080" stroke-width="1.05"/><polygon points="576.2,182.0 581.6,182.0 580.3,185.6 574.9,185.6" fill="#f4f4f4" stroke="#808080" stroke-width="1.05"/><polygon points="581.6,182.0 587.0,182.0 585.7,185.6 580.3,185.6" fill="#f4f4f4" stroke="#808080" stroke-width="1.05"/><polygon points="587.0,182.0 592.4,182.0 591.1,185.6 585.7,185.6" fill="#f4f4f4" stroke="#808080" stroke-width="1.05"/><polygon points="592.4,182.0 593.1,163.8 596.6,185.6 591.1,185.6" fill="#f4f4f4" stroke="#808080" stroke-width="1.05"/><polygon points="593.1,163.8 603.2,182.0 595.5,158.6 596.6,185.6" fill="#f4f4f4" stroke="#808080" stroke-width="1.05"/><polygon points="711.5,182.0 716.9,182.0 715.6,185.6 710.2,185.6" fill="#f4f4f4" stroke="#808080" stroke-width="1.05"/><polygon points="716.9,182.0 722.3,182.0 721.0,185.6 715.6,185.6" fill="#f4f4f4" stroke="#808080" stroke-width="1.05"/><polygon points="722.3,182.0 727.7,182.0 726.4,185.6 721.0,185.6" fill="#f4f4f4" stroke="#808080" stroke-width="1.05"/><polygon points="727.7,182.0 733.1,182.0 731.8,185.6 726.4,185.6" fill="#f4f4f4" stroke="#808080" stroke-width="1.05"/><polygon points="733.1,182.0 738.5,182.0 737.3,185.6 731.8,185.6" fill="#f4f4f4" stroke="#808080" stroke-width="1.05"/><polygon points="738.5,182.0 743.9,182.0 742.7,185.6 737.3,185.6" fill="#f4f4f4" stroke="#808080" stroke-width="1.05"/><polygon points="743.9,182.0 749.4,182.0 748.1,185.6 742.7,185.6" fill="#f4f4f4" stroke="#808080" stroke-width="1.05"/><polygon points="564.1,185.6 569.5,185.6 568.2,189.2 562.8,189.2" fill="#f4f4f4" stroke="#808080" stroke-width="1.05"/><polygon points="569.5,185.6 574.9,185.6 573.6,189.2 568.2,189.2" fill="#f4f4f4" stroke="#808080" stroke-width="1.05"/><polygon points="574.9,185.6 580.3,185.6 579.0,189.2 573.6,189.2" fill="#f4f4f4" stroke="#808080" stroke-width="1.05"/><polygon points="580.3,185.6 585.7,185.6 584.5,189.2 579.0,189.2" fill="#f4f4f4" stroke="#808080" stroke-width="1.05"/><polygon points="585.7,185.6 591.1,185.6 589.9,189.2 584.5,189.2" fill="#f4f4f4" stroke="#808080" stroke-width="1.05"/><polygon points="591.1,185.6 596.6,185.6 595.3,189.2 589.9,189.2" fill="#f4f4f4" stroke="#808080" stroke-width="1.05"/><polygon points="596.6,185.6 595.5,158.6 600.7,189.2 595.3,189.2" fill="#f4f4f4" stroke="#808080" stroke-width="1.05"/><polygon points="595.5,158.6 606.9,183.5 605.1,184.7 600.7,189.2" fill="#f4f4f4" stroke="#808080" stroke-width="1.05"/><polygon points="704.8,185.6 710.2,185.6 708.9,189.2 703.5,189.2" fill="#f4f4f4" stroke="#808080" stroke-width="1.05"/><polygon points="710.2,185.6 715.6,185.6 714.3,189.2 708.9,189.2" fill="#f4f4f4" stroke="#808080" stroke-width="1.05"/><polygon points="715.6,185.6 721.0,185.6 719.8,189.2 714.3,189.2" fill="#f4f4f4" stroke="#808080" stroke-width="1.05"/><polygon points="721.0,185.6 726.4,185.6 725.2,189.2 719.8,189.2" fill="#f4f4f4" stroke="#808080" stroke-width="1.05"/><polygon points="726.4,185.6 731.8,185.6 730.6,189.2 725.2,189.2" fill="#f4f4f4" stroke="#808080" stroke-width="1.05"/><polygon points="731.8,185.6 737.3,185.6 736.0,189.2 730.6,189.2" fill="#f4f4f4" stroke="#808080" stroke-width="1.05"/><polygon points="737.3,185.6 742.7,185.6 741.4,189.2 736.0,189.2" fill="#f4f4f4" stroke="#808080" stroke-width="1.05"/><polygon points="742.7,185.6 748.1,185.6 746.8,189.2 741.4,189.2" fill="#f4f4f4" stroke="#808080" stroke-width="1.05"/><polygon points="562.8,189.2 568.2,189.2 567.0,192.8 561.5,192.8" fill="#f4f4f4" stroke="#808080" stroke-width="1.05"/><polygon points="568.2,189.2 573.6,189.2 572.4,192.8 567.0,192.8" fill="#f4f4f4" stroke="#808080" stroke-width="1.05"/><polygon points="573.6,189.2 579.0,189.2 577.8,192.8 572.4,192.8" fill="#f4f4f4" stroke="#808080" stroke-width="1.05"/><polygon points="579.0,189.2 584.5,189.2 583.2,192.8 577.8,192.8" fill="#f4f4f4" stroke="#808080" stroke-width="1.05"/><polygon points="584.5,189.2 589.9,189.2 588.6,192.8 583.2,192.8" fill="#f4f4f4" stroke="#808080" stroke-width="1.05"/><polygon points="589.9,189.2 595.3,189.2 594.0,192.8 588.6,192.8" fill="#f4f4f4" stroke="#808080" stroke-width="1.05"/><polygon points="595.3,189.2 600.7,189.2 599.4,192.8 594.0,192.8" fill="#f4f4f4" stroke="#808080" stroke-width="1.05"/><polygon points="600.7,189.2 605.1,184.7 604.8,192.8 599.4,192.8" fill="#f4f4f4" stroke="#808080" stroke-width="1.05"/><polygon points="605.1,184.7 606.2,163.5 610.2,192.8 604.8,192.8" fill="#f4f4f4" stroke="#808080" stroke-width="1.05"/><polygon points="606.2,163.5 616.9,189.2 610.6,165.8 610.2,192.8" fill="#f4f4f4" stroke="#808080" stroke-width="1.05"/><polygon points="692.7,189.2 698.1,189.2 696.8,192.8 691.4,192.8" fill="#f4f4f4" stroke="#808080" stroke-width="1.05"/><polygon points="698.1,189.2 703.5,189.2 702.2,192.8 696.8,192.8" fill="#f4f4f4" stroke="#808080" stroke-width="1.05"/><polygon points="703.5,189.2 708.9,189.2 707.7,192.8 702.2,192.8" fill="#f4f4f4" stroke="#808080" stroke-width="1.05"/><polygon points="708.9,189.2 714.3,189.2 713.1,192.8 707.7,192.8" fill="#f4f4f4" stroke="#808080" stroke-width="1.05"/><polygon points="714.3,189.2 719.8,189.2 718.5,192.8 713.1,192.8" fill="#f4f4f4" stroke="#808080" stroke-width="1.05"/><polygon points="719.8,189.2 725.2,189.2 723.9,192.8 718.5,192.8" fill="#f4f4f4" stroke="#808080" stroke-width="1.05"/><polygon points="725.2,189.2 730.6,189.2 729.3,192.8 723.9,192.8" fill="#f4f4f4" stroke="#808080" stroke-width="1.05"/><polygon points="730.6,189.2 736.0,189.2 734.7,192.8 729.3,192.8" fill="#f4f4f4" stroke="#808080" stroke-width="1.05"/><polygon points="736.0,189.2 741.4,189.2 740.1,192.8 734.7,192.8" fill="#f4f4f4" stroke="#808080" stroke-width="1.05"/><polygon points="741.4,189.2 746.8,189.2 745.5,192.8 740.1,192.8" fill="#f4f4f4" stroke="#808080" stroke-width="1.05"/><polygon points="561.5,192.8 567.0,192.8 565.7,196.4 560.3,196.4" fill="#f4f4f4" stroke="#808080" stroke-width="1.05"/><polygon points="567.0,192.8 572.4,192.8 571.1,196.4 565.7,196.4" fill="#f4f4f4" stroke="#808080" stroke-width="1.05"/><polygon points="572.4,192.8 577.8,192.8 576.5,196.4 571.1,196.4" fill="#f4f4f4" stroke="#808080" stroke-width="1.05"/><polygon points="577.8,192.8 583.2,192.8 581.9,196.4 576.5,196.4" fill="#f4f4f4" stroke="#808080" stroke-width="1.05"/><polygon points="583.2,192.8 588.6,192.8 587.3,196.4 581.9,196.4" fill="#f4f4f4" stroke="#808080" stroke-width="1.05"/><polygon points="588.6,192.8 594.0,192.8 592.7,196.4 587.3,196.4" fill="#f4f4f4" stroke="#808080" stroke-width="1.05"/><polygon points="594.0,192.8 599.4,192.8 598.2,196.4 592.7,196.4" fill="#f4f4f4" stroke="#808080" stroke-width="1.05"/><polygon points="599.4,192.8 604.8,192.8 603.6,196.4 598.2,196.4" fill="#f4f4f4" stroke="#808080" stroke-width="1.05"/><polygon points="604.8,192.8 610.2,192.8 609.0,196.4 603.6,196.4" fill="#f4f4f4" stroke="#808080" stroke-width="1.05"/><polygon points="610.2,192.8 610.6,165.8 614.4,196.4 609.0,196.4" fill="#f4f4f4" stroke="#808080" stroke-width="1.05"/><polygon points="610.6,165.8 620.1,187.0 619.8,196.4 614.4,196.4" fill="#f4f4f4" stroke="#808080" stroke-width="1.05"/><polygon points="620.1,187.0 624.9,182.4 622.6,179.2 619.8,196.4" fill="#f4f4f4" stroke="#808080" stroke-width="1.05"/><polygon points="680.6,192.8 686.0,192.8 684.7,196.4 679.3,196.4" fill="#f4f4f4" stroke="#808080" stroke-width="1.05"/><polygon points="686.0,192.8 691.4,192.8 690.2,196.4 684.7,196.4" fill="#f4f4f4" stroke="#808080" stroke-width="1.05"/><polygon points="691.4,192.8 696.8,192.8 695.6,196.4 690.2,196.4" fill="#f4f4f4" stroke="#808080" stroke-width="1.05"/><polygon points="696.8,192.8 702.2,192.8 701.0,196.4 695.6,196.4" fill="#f4f4f4" stroke="#808080" stroke-width="1.05"/><polygon points="702.2,192.8 707.7,192.8 706.4,196.4 701.0,196.4" fill="#f4f4f4" stroke="#808080" stroke-width="1.05"/><polygon points="707.7,192.8 713.1,192.8 711.8,196.4 706.4,196.4" fill="#f4f4f4" stroke="#808080" stroke-width="1.05"/><polygon points="713.1,192.8 718.5,192.8 717.2,196.4 711.8,196.4" fill="#f4f4f4" stroke="#808080" stroke-width="1.05"/><polygon points="718.5,192.8 723.9,192.8 722.6,196.4 717.2,196.4" fill="#f4f4f4" stroke="#808080" stroke-width="1.05"/><polygon points="723.9,192.8 729.3,192.8 728.0,196.4 722.6,196.4" fill="#f4f4f4" stroke="#808080" stroke-width="1.05"/><polygon points="729.3,192.8 734.7,192.8 733.4,196.4 728.0,196.4" fill="#f4f4f4" stroke="#808080" stroke-width="1.05"/><polygon points="734.7,192.8 740.1,192.8 738.9,196.4 733.4,196.4" fill="#f4f4f4" stroke="#808080" stroke-width="1.05"/><polygon points="740.1,192.8 745.5,192.8 744.3,196.4 738.9,196.4" fill="#f4f4f4" stroke="#808080" stroke-width="1.05"/><polygon points="560.3,196.4 565.7,196.4 564.4,200.0 559.0,200.0" fill="#f4f4f4" stroke="#808080" stroke-width="1.05"/><polygon points="565.7,196.4 571.1,196.4 569.8,200.0 564.4,200.0" fill="#f4f4f4" stroke="#808080" stroke-width="1.05"/><polygon points="571.1,196.4 576.5,196.4 575.2,200.0 569.8,200.0" fill="#f4f4f4" stroke="#808080" stroke-width="1.05"/><polygon points="576.5,196.4 581.9,196.4 580.6,200.0 575.2,200.0" fill="#f4f4f4" stroke="#808080" stroke-width="1.05"/><polygon points="581.9,196.4 587.3,196.4 586.1,200.0 580.6,200.0" fill="#f4f4f4" stroke="#808080" stroke-width="1.05"/><polygon points="587.3,196.4 592.7,196.4 591.5,200.0 586.1,200.0" fill="#f4f4f4" stroke="#808080" stroke-width="1.05"/><polygon points="592.7,196.4 598.2,196.4 596.9,200.0 591.5,200.0" fill="#f4f4f4" stroke="#808080" stroke-width="1.05"/><polygon points="598.2,196.4 603.6,196.4 602.3,200.0 596.9,200.0" fill="#f4f4f4" stroke="#808080" stroke-width="1.05"/><polygon points="603.6,196.4 609.0,196.4 607.7,200.0 602.3,200.0" fill="#f4f4f4" stroke="#808080" stroke-width="1.05"/><polygon points="609.0,196.4 614.4,196.4 613.1,200.0 607.7,200.0" fill="#f4f4f4" stroke="#808080" stroke-width="1.05"/><polygon points="614.4,196.4 619.8,196.4 618.5,200.0 613.1,200.0" fill="#f4f4f4" stroke="#808080" stroke-width="1.05"/><polygon points="619.8,196.4 622.6,179.2 623.9,200.0 618.5,200.0" fill="#f4f4f4" stroke="#808080" stroke-width="1.05"/><polygon points="622.6,179.2 630.5,195.2 629.4,200.0 623.9,200.0" fill="#f4f4f4" stroke="#808080" stroke-width="1.05"/><polygon points="630.5,195.2 635.4,191.0 634.8,200.0 629.4,200.0" fill="#f4f4f4" stroke="#808080" stroke-width="1.05"/><polygon points="635.4,191.0 639.6,177.3 640.2,200.0 634.8,200.0" fill="#f4f4f4" stroke="#808080" stroke-width="1.05"/><polygon points="641.4,196.4 646.9,196.4 645.6,200.0 640.2,200.0" fill="#f4f4f4" stroke="#808080" stroke-width="1.05"/><polygon points="646.9,196.4 652.3,196.4 651.0,200.0 645.6,200.0" fill="#f4f4f4" stroke="#808080" stroke-width="1.05"/><polygon points="652.3,196.4 657.7,196.4 656.4,200.0 651.0,200.0" fill="#f4f4f4" stroke="#808080" stroke-width="1.05"/><polygon points="657.7,196.4 663.1,196.4 661.8,200.0 656.4,200.0" fill="#f4f4f4" stroke="#808080" stroke-width="1.05"/><polygon points="663.1,196.4 668.5,196.4 667.2,200.0 661.8,200.0" fill="#f4f4f4" stroke="#808080" stroke-width="1.05"/><polygon points="668.5,196.4 673.9,196.4 672.6,200.0 667.2,200.0" fill="#f4f4f4" stroke="#808080" stroke-width="1.05"/><polygon points="673.9,196.4 679.3,196.4 678.1,200.0 672.6,200.0" fill="#f4f4f4" stroke="#808080" stroke-width="1.05"/><polygon points="679.3,196.4 684.7,196.4 683.5,200.0 678.1,200.0" fill="#f4f4f4" stroke="#808080" stroke-width="1.05"/><polygon points="684.7,196.4 690.2,196.4 688.9,200.0 683.5,200.0" fill="#f4f4f4" stroke="#808080" stroke-width="1.05"/><polygon points="690.2,196.4 695.6,196.4 694.3,200.0 688.9,200.0" fill="#f4f4f4" stroke="#808080" stroke-width="1.05"/><polygon points="695.6,196.4 701.0,196.4 699.7,200.0 694.3,200.0" fill="#f4f4f4" stroke="#808080" stroke-width="1.05"/><polygon points="701.0,196.4 706.4,196.4 705.1,200.0 699.7,200.0" fill="#f4f4f4" stroke="#808080" stroke-width="1.05"/><polygon points="706.4,196.4 711.8,196.4 710.5,200.0 705.1,200.0" fill="#f4f4f4" stroke="#808080" stroke-width="1.05"/><polygon points="711.8,196.4 717.2,196.4 715.9,200.0 710.5,200.0" fill="#f4f4f4" stroke="#808080" stroke-width="1.05"/><polygon points="717.2,196.4 722.6,196.4 721.4,200.0 715.9,200.0" fill="#f4f4f4" stroke="#808080" stroke-width="1.05"/><polygon points="722.6,196.4 728.0,196.4 726.8,200.0 721.4,200.0" fill="#f4f4f4" stroke="#808080" stroke-width="1.05"/><polygon points="728.0,196.4 733.4,196.4 732.2,200.0 726.8,200.0" fill="#f4f4f4" stroke="#808080" stroke-width="1.05"/><polygon points="733.4,196.4 738.9,196.4 737.6,200.0 732.2,200.0" fill="#f4f4f4" stroke="#808080" stroke-width="1.05"/><polygon points="738.9,196.4 744.3,196.4 743.0,200.0 737.6,200.0" fill="#f4f4f4" stroke="#808080" stroke-width="1.05"/><polygon points="668.8,64.4 674.9,69.4 673.8,75.4 667.9,71.2" fill="#00c0ff" stroke="#505050" stroke-width="0.8"/><polygon points="674.9,69.4 678.0,49.1 678.3,66.5 673.8,75.4" fill="#00ff08" stroke="#00ff08" stroke-width="0.3"/><polygon points="678.0,49.1 685.3,64.7 684.5,73.3 678.3,66.5" fill="#04ff00" stroke="#04ff00" stroke-width="0.3"/><polygon points="685.3,64.7 691.3,71.1 690.0,77.1 684.5,73.3" fill="#0097ff" stroke="#505050" stroke-width="0.8"/><polygon points="691.3,71.1 695.7,53.0 695.0,65.8 690.0,77.1" fill="#00ff41" stroke="#00ff41" stroke-width="0.3"/><polygon points="695.7,53.0 701.9,65.9 700.9,74.3 695.0,65.8" fill="#00ff33" stroke="#00ff33" stroke-width="0.3"/><polygon points="701.9,65.9 707.6,71.5 706.3,77.2 700.9,74.3" fill="#0085ff" stroke="#505050" stroke-width="0.8"/><polygon points="707.6,71.5 712.8,40.9 711.7,61.1 706.3,77.2" fill="#7cff00" stroke="#7cff00" stroke-width="0.3"/><polygon points="712.8,40.9 718.4,65.7 717.1,72.9 711.7,61.1" fill="#8eff00" stroke="#8eff00" stroke-width="0.3"/><polygon points="718.4,65.7 723.8,70.9 722.5,76.0 717.1,72.9" fill="#009cff" stroke="#505050" stroke-width="0.8"/><polygon points="657.6,74.5 659.0,50.7 660.2,69.1 656.3,79.7" fill="#0bff00" stroke="#0bff00" stroke-width="0.3"/><polygon points="659.0,50.7 667.9,71.2 667.1,77.4 660.2,69.1" fill="#15ff00" stroke="#15ff00" stroke-width="0.3"/><polygon points="667.9,71.2 673.8,75.4 672.5,78.2 667.1,77.4" fill="#008cff" stroke="#505050" stroke-width="0.8"/><polygon points="673.8,75.4 678.3,66.5 677.6,75.1 672.5,78.2" fill="#00ffd5" stroke="#00ffd5" stroke-width="0.3"/><polygon points="678.3,66.5 684.5,73.3 683.4,79.4 677.6,75.1" fill="#00ffd3" stroke="#00ffd3" stroke-width="0.3"/><polygon points="684.5,73.3 690.0,77.1 688.8,81.9 683.4,79.4" fill="#0048ff" stroke="#505050" stroke-width="0.8"/><polygon points="690.0,77.1 695.0,65.8 694.0,75.4 688.8,81.9" fill="#00ffd4" stroke="#00ffd4" stroke-width="0.3"/><polygon points="695.0,65.8 700.9,74.3 699.6,80.1 694.0,75.4" fill="#00ffcc" stroke="#00ffcc" stroke-width="0.3"/><polygon points="700.9,74.3 706.3,77.2 705.0,81.9 699.6,80.1" fill="#003cff" stroke="#505050" stroke-width="0.8"/><polygon points="706.3,77.2 711.7,61.1 710.4,72.8 705.0,81.9" fill="#00ff89" stroke="#00ff89" stroke-width="0.3"/><polygon points="711.7,61.1 717.1,72.9 715.8,81.1 710.4,72.8" fill="#00ff80" stroke="#00ff80" stroke-width="0.3"/><polygon points="717.1,72.9 722.5,76.0 721.2,80.7 715.8,81.1" fill="#004fff" stroke="#505050" stroke-width="0.8"/><polygon points="722.5,76.0 729.5,44.0 727.4,64.2 721.2,80.7" fill="#90ff00" stroke="#90ff00" stroke-width="0.3"/><polygon points="729.5,44.0 733.7,68.1 732.3,75.1 727.4,64.2" fill="#a8ff00" stroke="#a8ff00" stroke-width="0.3"/><polygon points="639.4,50.0 650.0,73.3 647.0,69.3 640.2,63.6" fill="#69ff00" stroke="#69ff00" stroke-width="0.3"/><polygon points="650.0,73.3 656.3,79.7 655.0,81.9 647.0,69.3" fill="#00ff98" stroke="#00ff98" stroke-width="0.3"/><polygon points="656.3,79.7 660.2,69.1 660.4,85.0 655.0,81.9" fill="#00ffd4" stroke="#00ffd4" stroke-width="0.3"/><polygon points="660.2,69.1 667.1,77.4 665.6,80.0 660.4,85.0" fill="#00ffcc" stroke="#00ffcc" stroke-width="0.3"/><polygon points="667.1,77.4 672.5,78.2 671.3,84.2 665.6,80.0" fill="#0075ff" stroke="#505050" stroke-width="0.8"/><polygon points="672.5,78.2 677.6,75.1 676.7,85.8 671.3,84.2" fill="#005cff" stroke="#505050" stroke-width="0.8"/><polygon points="677.6,75.1 683.4,79.4 682.1,85.4 676.7,85.8" fill="#004bff" stroke="#505050" stroke-width="0.8"/><polygon points="683.4,79.4 688.8,81.9 687.5,86.5 682.1,85.4" fill="#0016ff" stroke="#505050" stroke-width="0.8"/><polygon points="688.8,81.9 694.0,75.4 692.9,84.0 687.5,86.5" fill="#003dff" stroke="#505050" stroke-width="0.8"/><polygon points="694.0,75.4 699.6,80.1 698.3,85.8 692.9,84.0" fill="#004eff" stroke="#505050" stroke-width="0.8"/><polygon points="699.6,80.1 705.0,81.9 703.7,86.4 698.3,85.8" fill="#000fff" stroke="#505050" stroke-width="0.8"/><polygon points="705.0,81.9 710.4,72.8 709.2,85.1 703.7,86.4" fill="#0047ff" stroke="#505050" stroke-width="0.8"/><polygon points="710.4,72.8 715.8,81.1 714.6,85.8 709.2,85.1" fill="#0051ff" stroke="#505050" stroke-width="0.8"/><polygon points="715.8,81.1 721.2,80.7 720.1,78.1 714.6,85.8" fill="#004aff" stroke="#505050" stroke-width="0.8"/><polygon points="721.2,80.7 727.4,64.2 725.4,82.3 720.1,78.1" fill="#00ff7a" stroke="#00ff7a" stroke-width="0.3"/><polygon points="727.4,64.2 732.3,75.1 730.8,84.3 725.4,82.3" fill="#00ff7b" stroke="#00ff7b" stroke-width="0.3"/><polygon points="732.3,75.1 737.5,77.9 737.5,67.3 730.8,84.3" fill="#00ff6f" stroke="#00ff6f" stroke-width="0.3"/><polygon points="737.5,77.9 745.8,48.8 743.7,62.0 737.5,67.3" fill="#b1ff00" stroke="#b1ff00" stroke-width="0.3"/><polygon points="638.7,80.8 640.2,63.6 642.9,87.1 637.5,86.2" fill="#00ff54" stroke="#00ff54" stroke-width="0.3"/><polygon points="640.2,63.6 647.0,69.3 647.2,79.8 642.9,87.1" fill="#00ff38" stroke="#00ff38" stroke-width="0.3"/><polygon points="647.0,69.3 655.0,81.9 653.8,87.4 647.2,79.8" fill="#00ff98" stroke="#00ff98" stroke-width="0.3"/><polygon points="655.0,81.9 660.4,85.0 659.2,89.6 653.8,87.4" fill="#0030ff" stroke="#505050" stroke-width="0.8"/><polygon points="660.4,85.0 665.6,80.0 664.6,87.7 659.2,89.6" fill="#003cff" stroke="#505050" stroke-width="0.8"/><polygon points="665.6,80.0 671.3,84.2 670.0,89.9 664.6,87.7" fill="#003fff" stroke="#505050" stroke-width="0.8"/><polygon points="671.3,84.2 676.7,85.8 675.4,90.6 670.0,89.9" fill="#0000ff" stroke="#505050" stroke-width="0.8"/><polygon points="676.7,85.8 682.1,85.4 680.8,88.6 675.4,90.6" fill="#0002ff" stroke="#505050" stroke-width="0.8"/><polygon points="682.1,85.4 687.5,86.5 686.2,88.2 680.8,88.6" fill="#000fff" stroke="#505050" stroke-width="0.8"/><polygon points="687.5,86.5 692.9,84.0 691.6,87.8 686.2,88.2" fill="#001eff" stroke="#505050" stroke-width="0.8"/><polygon points="692.9,84.0 698.3,85.8 697.1,87.7 691.6,87.8" fill="#0027ff" stroke="#505050" stroke-width="0.8"/><polygon points="698.3,85.8 703.7,86.4 702.5,87.7 697.1,87.7" fill="#0016ff" stroke="#505050" stroke-width="0.8"/><polygon points="703.7,86.4 709.2,85.1 707.9,90.5 702.5,87.7" fill="#0006ff" stroke="#505050" stroke-width="0.8"/><polygon points="709.2,85.1 714.6,85.8 713.3,90.4 707.9,90.5" fill="#0000f6" stroke="#505050" stroke-width="0.8"/><polygon points="714.6,85.8 720.1,78.1 718.7,86.9 713.3,90.4" fill="#0043ff" stroke="#505050" stroke-width="0.8"/><polygon points="720.1,78.1 725.4,82.3 724.1,88.2 718.7,86.9" fill="#006bff" stroke="#505050" stroke-width="0.8"/><polygon points="725.4,82.3 730.8,84.3 729.5,89.0 724.1,88.2" fill="#0031ff" stroke="#505050" stroke-width="0.8"/><polygon points="730.8,84.3 737.5,67.3 735.6,78.4 729.5,89.0" fill="#00ff6e" stroke="#00ff6e" stroke-width="0.3"/><polygon points="737.5,67.3 743.7,62.0 740.4,84.3 735.6,78.4" fill="#0aff00" stroke="#0aff00" stroke-width="0.3"/><polygon points="743.7,62.0 747.7,75.9 746.1,82.6 740.4,84.3" fill="#00ff09" stroke="#00ff09" stroke-width="0.3"/><polygon points="630.8,80.0 637.5,86.2 636.2,88.4 630.3,86.6" fill="#00a9ff" stroke="#505050" stroke-width="0.8"/><polygon points="637.5,86.2 642.9,87.1 641.7,91.8 636.2,88.4" fill="#0052ff" stroke="#505050" stroke-width="0.8"/><polygon points="642.9,87.1 647.2,79.8 647.1,92.7 641.7,91.8" fill="#0061ff" stroke="#505050" stroke-width="0.8"/><polygon points="647.2,79.8 653.8,87.4 652.5,90.6 647.1,92.7" fill="#0067ff" stroke="#505050" stroke-width="0.8"/><polygon points="653.8,87.4 659.2,89.6 657.9,93.8 652.5,90.6" fill="#001aff" stroke="#505050" stroke-width="0.8"/><polygon points="659.2,89.6 664.6,87.7 663.3,92.4 657.9,93.8" fill="#000bff" stroke="#505050" stroke-width="0.8"/><polygon points="664.6,87.7 670.0,89.9 668.7,91.5 663.3,92.4" fill="#0019ff" stroke="#505050" stroke-width="0.8"/><polygon points="670.0,89.9 675.4,90.6 674.1,90.7 668.7,91.5" fill="#0010ff" stroke="#505050" stroke-width="0.8"/><polygon points="675.4,90.6 680.8,88.6 679.6,90.3 674.1,90.7" fill="#0022ff" stroke="#505050" stroke-width="0.8"/><polygon points="680.8,88.6 686.2,88.2 685.0,90.0 679.6,90.3" fill="#0038ff" stroke="#505050" stroke-width="0.8"/><polygon points="686.2,88.2 691.6,87.8 690.4,89.7 685.0,90.0" fill="#0043ff" stroke="#505050" stroke-width="0.8"/><polygon points="691.6,87.8 697.1,87.7 695.8,89.4 690.4,89.7" fill="#004aff" stroke="#505050" stroke-width="0.8"/><polygon points="697.1,87.7 702.5,87.7 701.2,89.1 695.8,89.4" fill="#004fff" stroke="#505050" stroke-width="0.8"/><polygon points="702.5,87.7 707.9,90.5 706.6,88.9 701.2,89.1" fill="#003fff" stroke="#505050" stroke-width="0.8"/><polygon points="707.9,90.5 713.3,90.4 712.0,89.4 706.6,88.9" fill="#002aff" stroke="#505050" stroke-width="0.8"/><polygon points="713.3,90.4 718.7,86.9 717.4,90.3 712.0,89.4" fill="#0039ff" stroke="#505050" stroke-width="0.8"/><polygon points="718.7,86.9 724.1,88.2 722.8,94.1 717.4,90.3" fill="#0028ff" stroke="#505050" stroke-width="0.8"/><polygon points="724.1,88.2 729.5,89.0 728.3,90.1 722.8,94.1" fill="#001bff" stroke="#505050" stroke-width="0.8"/><polygon points="729.5,89.0 735.6,78.4 733.7,91.4 728.3,90.1" fill="#0073ff" stroke="#505050" stroke-width="0.8"/><polygon points="735.6,78.4 740.4,84.3 739.1,89.8 733.7,91.4" fill="#0096ff" stroke="#505050" stroke-width="0.8"/><polygon points="740.4,84.3 746.1,82.6 744.5,90.7 739.1,89.8" fill="#007eff" stroke="#505050" stroke-width="0.8"/><polygon points="746.1,82.6 751.3,84.0 749.9,89.5 744.5,90.7" fill="#0081ff" stroke="#505050" stroke-width="0.8"/><polygon points="618.1,62.1 630.3,86.6 627.3,83.9 624.2,94.1" fill="#32ff00" stroke="#32ff00" stroke-width="0.3"/><polygon points="630.3,86.6 636.2,88.4 635.0,93.8 627.3,83.9" fill="#00ffce" stroke="#00ffce" stroke-width="0.3"/><polygon points="636.2,88.4 641.7,91.8 640.4,95.4 635.0,93.8" fill="#0047ff" stroke="#505050" stroke-width="0.8"/><polygon points="641.7,91.8 647.1,92.7 645.8,97.3 640.4,95.4" fill="#0010ff" stroke="#505050" stroke-width="0.8"/><polygon points="647.1,92.7 652.5,90.6 651.2,97.7 645.8,97.3" fill="#0009ff" stroke="#505050" stroke-width="0.8"/><polygon points="652.5,90.6 657.9,93.8 656.6,95.1 651.2,97.7" fill="#0010ff" stroke="#505050" stroke-width="0.8"/><polygon points="657.9,93.8 663.3,92.4 662.0,94.3 656.6,95.1" fill="#001bff" stroke="#505050" stroke-width="0.8"/><polygon points="663.3,92.4 668.7,91.5 667.5,94.0 662.0,94.3" fill="#0033ff" stroke="#505050" stroke-width="0.8"/><polygon points="668.7,91.5 674.1,90.7 672.9,93.7 667.5,94.0" fill="#0044ff" stroke="#505050" stroke-width="0.8"/><polygon points="674.1,90.7 679.6,90.3 678.3,93.4 672.9,93.7" fill="#0050ff" stroke="#505050" stroke-width="0.8"/><polygon points="679.6,90.3 685.0,90.0 683.7,93.2 678.3,93.4" fill="#0059ff" stroke="#505050" stroke-width="0.8"/><polygon points="685.0,90.0 690.4,89.7 689.1,92.9 683.7,93.2" fill="#0061ff" stroke="#505050" stroke-width="0.8"/><polygon points="690.4,89.7 695.8,89.4 694.5,92.6 689.1,92.9" fill="#0069ff" stroke="#505050" stroke-width="0.8"/><polygon points="695.8,89.4 701.2,89.1 699.9,92.3 694.5,92.6" fill="#0072ff" stroke="#505050" stroke-width="0.8"/><polygon points="701.2,89.1 706.6,88.9 705.3,92.0 699.9,92.3" fill="#007aff" stroke="#505050" stroke-width="0.8"/><polygon points="706.6,88.9 712.0,89.4 710.8,91.7 705.3,92.0" fill="#007cff" stroke="#505050" stroke-width="0.8"/><polygon points="712.0,89.4 717.4,90.3 716.2,91.5 710.8,91.7" fill="#0075ff" stroke="#505050" stroke-width="0.8"/><polygon points="717.4,90.3 722.8,94.1 721.6,92.2 716.2,91.5" fill="#0051ff" stroke="#505050" stroke-width="0.8"/><polygon points="722.8,94.1 728.3,90.1 727.0,97.7 721.6,92.2" fill="#0027ff" stroke="#505050" stroke-width="0.8"/><polygon points="728.3,90.1 733.7,91.4 732.4,96.7 727.0,97.7" fill="#001aff" stroke="#505050" stroke-width="0.8"/><polygon points="733.7,91.4 739.1,89.8 737.8,96.4 732.4,96.7" fill="#0025ff" stroke="#505050" stroke-width="0.8"/><polygon points="739.1,89.8 744.5,90.7 743.2,95.3 737.8,96.4" fill="#0034ff" stroke="#505050" stroke-width="0.8"/><polygon points="744.5,90.7 749.9,89.5 749.6,85.7 743.2,95.3" fill="#0081ff" stroke="#505050" stroke-width="0.8"/><polygon points="749.9,89.5 758.4,69.2 754.6,89.1 749.6,85.7" fill="#02ff00" stroke="#02ff00" stroke-width="0.3"/><polygon points="618.8,92.8 624.2,94.1 622.9,98.5 615.6,89.6" fill="#0086ff" stroke="#505050" stroke-width="0.8"/><polygon points="624.2,94.1 627.3,83.9 628.3,99.4 622.9,98.5" fill="#00ffdd" stroke="#00ffdd" stroke-width="0.3"/><polygon points="627.3,83.9 635.0,93.8 633.7,95.6 628.3,99.4" fill="#00ffd8" stroke="#00ffd8" stroke-width="0.3"/><polygon points="635.0,93.8 640.4,95.4 639.1,100.5 633.7,95.6" fill="#003dff" stroke="#505050" stroke-width="0.8"/><polygon points="640.4,95.4 645.8,97.3 644.5,99.4 639.1,100.5" fill="#0009ff" stroke="#505050" stroke-width="0.8"/><polygon points="645.8,97.3 651.2,97.7 650.0,98.0 644.5,99.4" fill="#000aff" stroke="#505050" stroke-width="0.8"/><polygon points="651.2,97.7 656.6,95.1 655.4,97.6 650.0,98.0" fill="#0026ff" stroke="#505050" stroke-width="0.8"/><polygon points="656.6,95.1 662.0,94.3 660.8,97.3 655.4,97.6" fill="#0043ff" stroke="#505050" stroke-width="0.8"/><polygon points="662.0,94.3 667.5,94.0 666.2,97.2 660.8,97.3" fill="#004eff" stroke="#505050" stroke-width="0.8"/><polygon points="667.5,94.0 672.9,93.7 671.6,97.0 666.2,97.2" fill="#0055ff" stroke="#505050" stroke-width="0.8"/><polygon points="672.9,93.7 678.3,93.4 677.0,96.9 671.6,97.0" fill="#005bff" stroke="#505050" stroke-width="0.8"/><polygon points="678.3,93.4 683.7,93.2 682.4,96.7 677.0,96.9" fill="#0060ff" stroke="#505050" stroke-width="0.8"/><polygon points="683.7,93.2 689.1,92.9 687.8,96.5 682.4,96.7" fill="#0067ff" stroke="#505050" stroke-width="0.8"/><polygon points="689.1,92.9 694.5,92.6 693.2,96.2 687.8,96.5" fill="#006eff" stroke="#505050" stroke-width="0.8"/><polygon points="694.5,92.6 699.9,92.3 698.7,95.9 693.2,96.2" fill="#0077ff" stroke="#505050" stroke-width="0.8"/><polygon points="699.9,92.3 705.3,92.0 704.1,95.5 698.7,95.9" fill="#0081ff" stroke="#505050" stroke-width="0.8"/><polygon points="705.3,92.0 710.8,91.7 709.5,95.1 704.1,95.5" fill="#008bff" stroke="#505050" stroke-width="0.8"/><polygon points="710.8,91.7 716.2,91.5 715.0,94.8 709.5,95.1" fill="#0093ff" stroke="#505050" stroke-width="0.8"/><polygon points="716.2,91.5 721.6,92.2 720.4,94.5 715.0,94.8" fill="#0094ff" stroke="#505050" stroke-width="0.8"/><polygon points="721.6,92.2 727.0,97.7 725.9,94.4 720.4,94.5" fill="#006bff" stroke="#505050" stroke-width="0.8"/><polygon points="727.0,97.7 732.4,96.7 731.1,96.6 725.9,94.4" fill="#003cff" stroke="#505050" stroke-width="0.8"/><polygon points="732.4,96.7 737.8,96.4 736.5,100.9 731.1,96.6" fill="#0017ff" stroke="#505050" stroke-width="0.8"/><polygon points="737.8,96.4 743.2,95.3 742.0,96.2 736.5,100.9" fill="#0024ff" stroke="#505050" stroke-width="0.8"/><polygon points="743.2,95.3 749.6,85.7 747.4,96.6 742.0,96.2" fill="#008eff" stroke="#505050" stroke-width="0.8"/><polygon points="749.6,85.7 754.6,89.1 753.0,94.4 747.4,96.6" fill="#00c6ff" stroke="#505050" stroke-width="0.8"/><polygon points="754.6,89.1 760.5,86.0 758.4,94.8 753.0,94.4" fill="#00d1ff" stroke="#505050" stroke-width="0.8"/><polygon points="615.6,89.6 622.9,98.5 621.6,99.7 611.9,85.3" fill="#00ff7c" stroke="#00ff7c" stroke-width="0.3"/><polygon points="622.9,98.5 628.3,99.4 627.0,103.7 621.6,99.7" fill="#0031ff" stroke="#505050" stroke-width="0.8"/><polygon points="628.3,99.4 633.7,95.6 632.4,104.6 627.0,103.7" fill="#0022ff" stroke="#505050" stroke-width="0.8"/><polygon points="633.7,95.6 639.1,100.5 637.9,102.8 632.4,104.6" fill="#0021ff" stroke="#505050" stroke-width="0.8"/><polygon points="639.1,100.5 644.5,99.4 643.3,101.2 637.9,102.8" fill="#001eff" stroke="#505050" stroke-width="0.8"/><polygon points="644.5,99.4 650.0,98.0 648.7,100.9 643.3,101.2" fill="#003dff" stroke="#505050" stroke-width="0.8"/><polygon points="650.0,98.0 655.4,97.6 654.1,100.7 648.7,100.9" fill="#004eff" stroke="#505050" stroke-width="0.8"/><polygon points="655.4,97.6 660.8,97.3 659.5,100.7 654.1,100.7" fill="#0054ff" stroke="#505050" stroke-width="0.8"/><polygon points="660.8,97.3 666.2,97.2 664.9,100.7 659.5,100.7" fill="#0057ff" stroke="#505050" stroke-width="0.8"/><polygon points="666.2,97.2 671.6,97.0 670.3,100.8 664.9,100.7" fill="#0059ff" stroke="#505050" stroke-width="0.8"/><polygon points="671.6,97.0 677.0,96.9 675.7,100.7 670.3,100.8" fill="#005aff" stroke="#505050" stroke-width="0.8"/><polygon points="677.0,96.9 682.4,96.7 681.2,100.7 675.7,100.7" fill="#005dff" stroke="#505050" stroke-width="0.8"/><polygon points="682.4,96.7 687.8,96.5 686.6,100.5 681.2,100.7" fill="#0062ff" stroke="#505050" stroke-width="0.8"/><polygon points="687.8,96.5 693.2,96.2 692.0,100.2 686.6,100.5" fill="#0069ff" stroke="#505050" stroke-width="0.8"/><polygon points="693.2,96.2 698.7,95.9 697.4,99.8 692.0,100.2" fill="#0072ff" stroke="#505050" stroke-width="0.8"/><polygon points="698.7,95.9 704.1,95.5 702.8,99.3 697.4,99.8" fill="#007dff" stroke="#505050" stroke-width="0.8"/><polygon points="704.1,95.5 709.5,95.1 708.2,98.8 702.8,99.3" fill="#008aff" stroke="#505050" stroke-width="0.8"/><polygon points="709.5,95.1 715.0,94.8 713.7,98.4 708.2,98.8" fill="#0096ff" stroke="#505050" stroke-width="0.8"/><polygon points="715.0,94.8 720.4,94.5 719.2,97.9 713.7,98.4" fill="#00a1ff" stroke="#505050" stroke-width="0.8"/><polygon points="720.4,94.5 725.9,94.4 724.7,97.6 719.2,97.9" fill="#00a8ff" stroke="#505050" stroke-width="0.8"/><polygon points="725.9,94.4 731.1,96.6 730.1,97.5 724.7,97.6" fill="#009dff" stroke="#505050" stroke-width="0.8"/><polygon points="731.1,96.6 736.5,100.9 735.3,99.9 730.1,97.5" fill="#005eff" stroke="#505050" stroke-width="0.8"/><polygon points="736.5,100.9 742.0,96.2 740.7,103.8 735.3,99.9" fill="#0035ff" stroke="#505050" stroke-width="0.8"/><polygon points="742.0,96.2 747.4,96.6 746.1,101.8 740.7,103.8" fill="#0046ff" stroke="#505050" stroke-width="0.8"/><polygon points="747.4,96.6 753.0,94.4 751.5,102.1 746.1,101.8" fill="#005eff" stroke="#505050" stroke-width="0.8"/><polygon points="753.0,94.4 758.4,94.8 759.6,84.9 751.5,102.1" fill="#00ff5b" stroke="#00ff5b" stroke-width="0.3"/><polygon points="601.7,70.4 611.9,85.3 612.2,94.2 609.5,103.2" fill="#67ff00" stroke="#67ff00" stroke-width="0.3"/><polygon points="611.9,85.3 621.6,99.7 619.5,100.1 612.2,94.2" fill="#00ff6f" stroke="#00ff6f" stroke-width="0.3"/><polygon points="621.6,99.7 627.0,103.7 625.8,106.8 619.5,100.1" fill="#0057ff" stroke="#505050" stroke-width="0.8"/><polygon points="627.0,103.7 632.4,104.6 631.2,108.7 625.8,106.8" fill="#0000f6" stroke="#505050" stroke-width="0.8"/><polygon points="632.4,104.6 637.9,102.8 636.6,104.6 631.2,108.7" fill="#000dff" stroke="#505050" stroke-width="0.8"/><polygon points="637.9,102.8 643.3,101.2 642.0,104.2 636.6,104.6" fill="#0045ff" stroke="#505050" stroke-width="0.8"/><polygon points="643.3,101.2 648.7,100.9 647.4,104.1 642.0,104.2" fill="#0056ff" stroke="#505050" stroke-width="0.8"/><polygon points="648.7,100.9 654.1,100.7 652.8,104.2 647.4,104.1" fill="#005aff" stroke="#505050" stroke-width="0.8"/><polygon points="654.1,100.7 659.5,100.7 658.2,104.3 652.8,104.2" fill="#005aff" stroke="#505050" stroke-width="0.8"/><polygon points="659.5,100.7 664.9,100.7 663.7,104.5 658.2,104.3" fill="#0057ff" stroke="#505050" stroke-width="0.8"/><polygon points="664.9,100.7 670.3,100.8 669.1,104.7 663.7,104.5" fill="#0054ff" stroke="#505050" stroke-width="0.8"/><polygon points="670.3,100.8 675.7,100.7 674.5,104.8 669.1,104.7" fill="#0052ff" stroke="#505050" stroke-width="0.8"/><polygon points="675.7,100.7 681.2,100.7 679.9,104.8 674.5,104.8" fill="#0052ff" stroke="#505050" stroke-width="0.8"/><polygon points="681.2,100.7 686.6,100.5 685.3,104.6 679.9,104.8" fill="#0056ff" stroke="#505050" stroke-width="0.8"/><polygon points="686.6,100.5 692.0,100.2 690.7,104.3 685.3,104.6" fill="#005cff" stroke="#505050" stroke-width="0.8"/><polygon points="692.0,100.2 697.4,99.8 696.1,104.0 690.7,104.3" fill="#0065ff" stroke="#505050" stroke-width="0.8"/><polygon points="697.4,99.8 702.8,99.3 701.5,103.5 696.1,104.0" fill="#0072ff" stroke="#505050" stroke-width="0.8"/><polygon points="702.8,99.3 708.2,98.8 707.0,102.9 701.5,103.5" fill="#0080ff" stroke="#505050" stroke-width="0.8"/><polygon points="708.2,98.8 713.7,98.4 712.4,102.2 707.0,102.9" fill="#0090ff" stroke="#505050" stroke-width="0.8"/><polygon points="713.7,98.4 719.2,97.9 717.9,101.6 712.4,102.2" fill="#009fff" stroke="#505050" stroke-width="0.8"/><polygon points="719.2,97.9 724.7,97.6 723.4,101.2 717.9,101.6" fill="#00acff" stroke="#505050" stroke-width="0.8"/><polygon points="724.7,97.6 730.1,97.5 728.9,100.9 723.4,101.2" fill="#00b4ff" stroke="#505050" stroke-width="0.8"/><polygon points="730.1,97.5 735.3,99.9 734.4,100.8 728.9,100.9" fill="#00a6ff" stroke="#505050" stroke-width="0.8"/><polygon points="735.3,99.9 740.7,103.8 739.4,108.6 734.4,100.8" fill="#0043ff" stroke="#505050" stroke-width="0.8"/><polygon points="740.7,103.8 746.1,101.8 744.8,107.7 739.4,108.6" fill="#0005ff" stroke="#505050" stroke-width="0.8"/><polygon points="746.1,101.8 751.5,102.1 751.0,99.2 744.8,107.7" fill="#0054ff" stroke="#505050" stroke-width="0.8"/><polygon points="751.5,102.1 759.6,84.9 757.6,92.9 751.0,99.2" fill="#00ff48" stroke="#00ff48" stroke-width="0.3"/><polygon points="759.6,84.9 767.5,72.7 761.7,99.8 757.6,92.9" fill="#aeff00" stroke="#aeff00" stroke-width="0.3"/><polygon points="603.6,101.3 609.5,103.2 608.3,107.5 601.1,101.2" fill="#00a8ff" stroke="#505050" stroke-width="0.8"/><polygon points="609.5,103.2 612.2,94.2 613.7,109.1 608.3,107.5" fill="#00ffcf" stroke="#00ffcf" stroke-width="0.3"/><polygon points="612.2,94.2 619.5,100.1 619.0,106.4 613.7,109.1" fill="#00ffc7" stroke="#00ffc7" stroke-width="0.3"/><polygon points="619.5,100.1 625.8,106.8 624.5,110.8 619.0,106.4" fill="#005bff" stroke="#505050" stroke-width="0.8"/><polygon points="625.8,106.8 631.2,108.7 629.9,108.4 624.5,110.8" fill="#0010ff" stroke="#505050" stroke-width="0.8"/><polygon points="631.2,108.7 636.6,104.6 635.3,107.5 629.9,108.4" fill="#0037ff" stroke="#505050" stroke-width="0.8"/><polygon points="636.6,104.6 642.0,104.2 640.7,107.4 635.3,107.5" fill="#005eff" stroke="#505050" stroke-width="0.8"/><polygon points="642.0,104.2 647.4,104.1 646.1,107.5 640.7,107.4" fill="#0061ff" stroke="#505050" stroke-width="0.8"/><polygon points="647.4,104.1 652.8,104.2 651.6,107.8 646.1,107.5" fill="#005fff" stroke="#505050" stroke-width="0.8"/><polygon points="652.8,104.2 658.2,104.3 657.0,108.2 651.6,107.8" fill="#0059ff" stroke="#505050" stroke-width="0.8"/><polygon points="658.2,104.3 663.7,104.5 662.4,108.5 657.0,108.2" fill="#0051ff" stroke="#505050" stroke-width="0.8"/><polygon points="663.7,104.5 669.1,104.7 667.8,108.8 662.4,108.5" fill="#004aff" stroke="#505050" stroke-width="0.8"/><polygon points="669.1,104.7 674.5,104.8 673.2,108.9 667.8,108.8" fill="#0046ff" stroke="#505050" stroke-width="0.8"/><polygon points="674.5,104.8 679.9,104.8 678.6,108.9 673.2,108.9" fill="#0044ff" stroke="#505050" stroke-width="0.8"/><polygon points="679.9,104.8 685.3,104.6 684.0,108.7 678.6,108.9" fill="#0047ff" stroke="#505050" stroke-width="0.8"/><polygon points="685.3,104.6 690.7,104.3 689.4,108.5 684.0,108.7" fill="#004cff" stroke="#505050" stroke-width="0.8"/><polygon points="690.7,104.3 696.1,104.0 694.9,108.1 689.4,108.5" fill="#0055ff" stroke="#505050" stroke-width="0.8"/><polygon points="696.1,104.0 701.5,103.5 700.3,107.7 694.9,108.1" fill="#0061ff" stroke="#505050" stroke-width="0.8"/><polygon points="701.5,103.5 707.0,102.9 705.7,107.0 700.3,107.7" fill="#0071ff" stroke="#505050" stroke-width="0.8"/><polygon points="707.0,102.9 712.4,102.2 711.1,106.3 705.7,107.0" fill="#0083ff" stroke="#505050" stroke-width="0.8"/><polygon points="712.4,102.2 717.9,101.6 716.6,105.6 711.1,106.3" fill="#0096ff" stroke="#505050" stroke-width="0.8"/><polygon points="717.9,101.6 723.4,101.2 722.2,104.9 716.6,105.6" fill="#00a7ff" stroke="#505050" stroke-width="0.8"/><polygon points="723.4,101.2 728.9,100.9 727.7,104.4 722.2,104.9" fill="#00b5ff" stroke="#505050" stroke-width="0.8"/><polygon points="728.9,100.9 734.4,100.8 733.2,104.2 727.7,104.4" fill="#00bdff" stroke="#505050" stroke-width="0.8"/><polygon points="734.4,100.8 739.4,108.6 738.4,105.2 733.2,104.2" fill="#0080ff" stroke="#505050" stroke-width="0.8"/><polygon points="739.4,108.6 744.8,107.7 743.6,110.6 738.4,105.2" fill="#0022ff" stroke="#505050" stroke-width="0.8"/><polygon points="744.8,107.7 751.0,99.2 749.1,105.8 743.6,110.6" fill="#0061ff" stroke="#505050" stroke-width="0.8"/><polygon points="751.0,99.2 757.6,92.9 754.4,107.2 749.1,105.8" fill="#00ffa1" stroke="#00ffa1" stroke-width="0.3"/><polygon points="757.6,92.9 761.7,99.8 760.2,104.7 754.4,107.2" fill="#00ffa0" stroke="#00ffa0" stroke-width="0.3"/><polygon points="761.7,99.8 767.7,96.8 765.2,106.6 760.2,104.7" fill="#00ceff" stroke="#505050" stroke-width="0.8"/><polygon points="601.1,101.2 608.3,107.5 605.2,104.7 594.8,90.0" fill="#00ff1c" stroke="#00ff1c" stroke-width="0.3"/><polygon points="608.3,107.5 613.7,109.1 612.4,112.2 605.2,104.7" fill="#007eff" stroke="#505050" stroke-width="0.8"/><polygon points="613.7,109.1 619.0,106.4 617.8,114.9 612.4,112.2" fill="#003eff" stroke="#505050" stroke-width="0.8"/><polygon points="619.0,106.4 624.5,110.8 623.2,112.7 617.8,114.9" fill="#002fff" stroke="#505050" stroke-width="0.8"/><polygon points="624.5,110.8 629.9,108.4 628.6,110.8 623.2,112.7" fill="#003dff" stroke="#505050" stroke-width="0.8"/><polygon points="629.9,108.4 635.3,107.5 634.1,110.7 628.6,110.8" fill="#0063ff" stroke="#505050" stroke-width="0.8"/><polygon points="635.3,107.5 640.7,107.4 639.5,110.8 634.1,110.7" fill="#006aff" stroke="#505050" stroke-width="0.8"/><polygon points="640.7,107.4 646.1,107.5 644.9,111.1 639.5,110.8" fill="#0067ff" stroke="#505050" stroke-width="0.8"/><polygon points="646.1,107.5 651.6,107.8 650.3,111.6 644.9,111.1" fill="#005eff" stroke="#505050" stroke-width="0.8"/><polygon points="651.6,107.8 657.0,108.2 655.7,112.1 650.3,111.6" fill="#0053ff" stroke="#505050" stroke-width="0.8"/><polygon points="657.0,108.2 662.4,108.5 661.1,112.5 655.7,112.1" fill="#0047ff" stroke="#505050" stroke-width="0.8"/><polygon points="662.4,108.5 667.8,108.8 666.5,112.7 661.1,112.5" fill="#003fff" stroke="#505050" stroke-width="0.8"/><polygon points="667.8,108.8 673.2,108.9 671.9,112.8 666.5,112.7" fill="#003aff" stroke="#505050" stroke-width="0.8"/><polygon points="673.2,108.9 678.6,108.9 677.3,112.8 671.9,112.8" fill="#0039ff" stroke="#505050" stroke-width="0.8"/><polygon points="678.6,108.9 684.0,108.7 682.8,112.7 677.3,112.8" fill="#003bff" stroke="#505050" stroke-width="0.8"/><polygon points="684.0,108.7 689.4,108.5 688.2,112.5 682.8,112.7" fill="#0040ff" stroke="#505050" stroke-width="0.8"/><polygon points="689.4,108.5 694.9,108.1 693.6,112.2 688.2,112.5" fill="#0047ff" stroke="#505050" stroke-width="0.8"/><polygon points="694.9,108.1 700.3,107.7 699.0,111.8 693.6,112.2" fill="#0052ff" stroke="#505050" stroke-width="0.8"/><polygon points="700.3,107.7 705.7,107.0 704.4,111.2 699.0,111.8" fill="#0061ff" stroke="#505050" stroke-width="0.8"/><polygon points="705.7,107.0 711.1,106.3 709.8,110.5 704.4,111.2" fill="#0073ff" stroke="#505050" stroke-width="0.8"/><polygon points="711.1,106.3 716.6,105.6 715.3,109.7 709.8,110.5" fill="#0088ff" stroke="#505050" stroke-width="0.8"/><polygon points="716.6,105.6 722.2,104.9 720.9,108.9 715.3,109.7" fill="#009eff" stroke="#505050" stroke-width="0.8"/><polygon points="722.2,104.9 727.7,104.4 726.4,108.2 720.9,108.9" fill="#00b0ff" stroke="#505050" stroke-width="0.8"/><polygon points="727.7,104.4 733.2,104.2 731.9,107.8 726.4,108.2" fill="#00beff" stroke="#505050" stroke-width="0.8"/><polygon points="733.2,104.2 738.4,105.2 737.4,107.6 731.9,107.8" fill="#00bcff" stroke="#505050" stroke-width="0.8"/><polygon points="738.4,105.2 743.6,110.6 742.3,110.3 737.4,107.6" fill="#007dff" stroke="#505050" stroke-width="0.8"/><polygon points="743.6,110.6 749.1,105.8 747.7,114.3 742.3,110.3" fill="#004aff" stroke="#505050" stroke-width="0.8"/><polygon points="749.1,105.8 754.4,107.2 753.1,114.0 747.7,114.3" fill="#0047ff" stroke="#505050" stroke-width="0.8"/><polygon points="754.4,107.2 760.2,104.7 760.0,103.1 753.1,114.0" fill="#00ffe3" stroke="#00ffe3" stroke-width="0.3"/><polygon points="760.2,104.7 765.2,106.6 768.2,90.4 760.0,103.1" fill="#20ff00" stroke="#20ff00" stroke-width="0.3"/><polygon points="594.8,90.0 605.2,104.7 604.4,109.9 600.3,114.4" fill="#00ff1e" stroke="#00ff1e" stroke-width="0.3"/><polygon points="605.2,104.7 612.4,112.2 611.1,114.3 604.4,109.9" fill="#00afff" stroke="#505050" stroke-width="0.8"/><polygon points="612.4,112.2 617.8,114.9 616.5,118.1 611.1,114.3" fill="#002cff" stroke="#505050" stroke-width="0.8"/><polygon points="617.8,114.9 623.2,112.7 622.0,114.8 616.5,118.1" fill="#0025ff" stroke="#505050" stroke-width="0.8"/><polygon points="623.2,112.7 628.6,110.8 627.4,113.9 622.0,114.8" fill="#005fff" stroke="#505050" stroke-width="0.8"/><polygon points="628.6,110.8 634.1,110.7 632.8,113.9 627.4,113.9" fill="#0074ff" stroke="#505050" stroke-width="0.8"/><polygon points="634.1,110.7 639.5,110.8 638.2,114.3 632.8,113.9" fill="#0072ff" stroke="#505050" stroke-width="0.8"/><polygon points="639.5,110.8 644.9,111.1 643.6,114.8 638.2,114.3" fill="#0069ff" stroke="#505050" stroke-width="0.8"/><polygon points="644.9,111.1 650.3,111.6 649.0,115.4 643.6,114.8" fill="#005aff" stroke="#505050" stroke-width="0.8"/><polygon points="650.3,111.6 655.7,112.1 654.4,116.0 649.0,115.4" fill="#004bff" stroke="#505050" stroke-width="0.8"/><polygon points="655.7,112.1 661.1,112.5 659.8,116.3 654.4,116.0" fill="#003fff" stroke="#505050" stroke-width="0.8"/><polygon points="661.1,112.5 666.5,112.7 665.3,116.5 659.8,116.3" fill="#0037ff" stroke="#505050" stroke-width="0.8"/><polygon points="666.5,112.7 671.9,112.8 670.7,116.5 665.3,116.5" fill="#0033ff" stroke="#505050" stroke-width="0.8"/><polygon points="671.9,112.8 677.3,112.8 676.1,116.4 670.7,116.5" fill="#0034ff" stroke="#505050" stroke-width="0.8"/><polygon points="677.3,112.8 682.8,112.7 681.5,116.2 676.1,116.4" fill="#0036ff" stroke="#505050" stroke-width="0.8"/><polygon points="682.8,112.7 688.2,112.5 686.9,116.1 681.5,116.2" fill="#003bff" stroke="#505050" stroke-width="0.8"/><polygon points="688.2,112.5 693.6,112.2 692.3,115.9 686.9,116.1" fill="#0040ff" stroke="#505050" stroke-width="0.8"/><polygon points="693.6,112.2 699.0,111.8 697.7,115.7 692.3,115.9" fill="#0048ff" stroke="#505050" stroke-width="0.8"/><polygon points="699.0,111.8 704.4,111.2 703.1,115.2 697.7,115.7" fill="#0054ff" stroke="#505050" stroke-width="0.8"/><polygon points="704.4,111.2 709.8,110.5 708.5,114.6 703.1,115.2" fill="#0064ff" stroke="#505050" stroke-width="0.8"/><polygon points="709.8,110.5 715.3,109.7 714.0,113.8 708.5,114.6" fill="#0079ff" stroke="#505050" stroke-width="0.8"/><polygon points="715.3,109.7 720.9,108.9 719.5,112.9 714.0,113.8" fill="#0091ff" stroke="#505050" stroke-width="0.8"/><polygon points="720.9,108.9 726.4,108.2 725.1,112.1 719.5,112.9" fill="#00a8ff" stroke="#505050" stroke-width="0.8"/><polygon points="726.4,108.2 731.9,107.8 730.6,111.5 725.1,112.1" fill="#00b9ff" stroke="#505050" stroke-width="0.8"/><polygon points="731.9,107.8 737.4,107.6 736.1,111.2 730.6,111.5" fill="#00c4ff" stroke="#505050" stroke-width="0.8"/><polygon points="737.4,107.6 742.3,110.3 741.4,112.1 736.1,111.2" fill="#00aeff" stroke="#505050" stroke-width="0.8"/><polygon points="742.3,110.3 747.7,114.3 746.4,117.9 741.4,112.1" fill="#004fff" stroke="#505050" stroke-width="0.8"/><polygon points="747.7,114.3 753.1,114.0 751.9,113.6 746.4,117.9" fill="#002aff" stroke="#505050" stroke-width="0.8"/><polygon points="753.1,114.0 760.0,103.1 758.4,108.6 751.9,113.6" fill="#00ffdc" stroke="#00ffdc" stroke-width="0.3"/><polygon points="760.0,103.1 768.2,90.4 763.0,112.1 758.4,108.6" fill="#29ff00" stroke="#29ff00" stroke-width="0.3"/><polygon points="594.3,112.1 600.3,114.4 598.5,115.8 591.6,111.5" fill="#00bbff" stroke="#505050" stroke-width="0.8"/><polygon points="600.3,114.4 604.4,109.9 604.5,120.2 598.5,115.8" fill="#008dff" stroke="#505050" stroke-width="0.8"/><polygon points="604.4,109.9 611.1,114.3 609.9,121.7 604.5,120.2" fill="#0064ff" stroke="#505050" stroke-width="0.8"/><polygon points="611.1,114.3 616.5,118.1 615.3,123.1 609.9,121.7" fill="#0015ff" stroke="#505050" stroke-width="0.8"/><polygon points="616.5,118.1 622.0,114.8 620.7,117.3 615.3,123.1" fill="#0031ff" stroke="#505050" stroke-width="0.8"/><polygon points="622.0,114.8 627.4,113.9 626.0,117.1 620.7,117.3" fill="#0079ff" stroke="#505050" stroke-width="0.8"/><polygon points="627.4,113.9 632.8,113.9 631.5,117.3 626.0,117.1" fill="#007eff" stroke="#505050" stroke-width="0.8"/><polygon points="632.8,113.9 638.2,114.3 636.9,117.8 631.5,117.3" fill="#0077ff" stroke="#505050" stroke-width="0.8"/><polygon points="638.2,114.3 643.6,114.8 642.3,118.5 636.9,117.8" fill="#0068ff" stroke="#505050" stroke-width="0.8"/><polygon points="643.6,114.8 649.0,115.4 647.7,119.2 642.3,118.5" fill="#0056ff" stroke="#505050" stroke-width="0.8"/><polygon points="649.0,115.4 654.4,116.0 653.2,119.7 647.7,119.2" fill="#0045ff" stroke="#505050" stroke-width="0.8"/><polygon points="654.4,116.0 659.8,116.3 658.6,120.0 653.2,119.7" fill="#0039ff" stroke="#505050" stroke-width="0.8"/><polygon points="659.8,116.3 665.3,116.5 664.0,120.0 658.6,120.0" fill="#0034ff" stroke="#505050" stroke-width="0.8"/><polygon points="665.3,116.5 670.7,116.5 669.4,119.8 664.0,120.0" fill="#0034ff" stroke="#505050" stroke-width="0.8"/><polygon points="670.7,116.5 676.1,116.4 674.8,119.6 669.4,119.8" fill="#0038ff" stroke="#505050" stroke-width="0.8"/><polygon points="676.1,116.4 681.5,116.2 680.2,119.4 674.8,119.6" fill="#003cff" stroke="#505050" stroke-width="0.8"/><polygon points="681.5,116.2 686.9,116.1 685.6,119.4 680.2,119.4" fill="#003fff" stroke="#505050" stroke-width="0.8"/><polygon points="686.9,116.1 692.3,115.9 691.0,119.4 685.6,119.4" fill="#0042ff" stroke="#505050" stroke-width="0.8"/><polygon points="692.3,115.9 697.7,115.7 696.5,119.3 691.0,119.4" fill="#0045ff" stroke="#505050" stroke-width="0.8"/><polygon points="697.7,115.7 703.1,115.2 701.9,119.1 696.5,119.3" fill="#004cff" stroke="#505050" stroke-width="0.8"/><polygon points="703.1,115.2 708.5,114.6 707.3,118.6 701.9,119.1" fill="#0059ff" stroke="#505050" stroke-width="0.8"/><polygon points="708.5,114.6 714.0,113.8 712.7,117.9 707.3,118.6" fill="#006cff" stroke="#505050" stroke-width="0.8"/><polygon points="714.0,113.8 719.5,112.9 718.2,117.0 712.7,117.9" fill="#0083ff" stroke="#505050" stroke-width="0.8"/><polygon points="719.5,112.9 725.1,112.1 723.8,116.1 718.2,117.0" fill="#009cff" stroke="#505050" stroke-width="0.8"/><polygon points="725.1,112.1 730.6,111.5 729.3,115.3 723.8,116.1" fill="#00b2ff" stroke="#505050" stroke-width="0.8"/><polygon points="730.6,111.5 736.1,111.2 734.9,114.9 729.3,115.3" fill="#00c1ff" stroke="#505050" stroke-width="0.8"/><polygon points="736.1,111.2 741.4,112.1 740.3,114.8 734.9,114.9" fill="#00c0ff" stroke="#505050" stroke-width="0.8"/><polygon points="741.4,112.1 746.4,117.9 745.2,123.0 740.3,114.8" fill="#0056ff" stroke="#505050" stroke-width="0.8"/><polygon points="746.4,117.9 751.9,113.6 750.6,121.1 745.2,123.0" fill="#0020ff" stroke="#505050" stroke-width="0.8"/><polygon points="751.9,113.6 758.4,108.6 756.0,118.9 750.6,121.1" fill="#007fff" stroke="#505050" stroke-width="0.8"/><polygon points="758.4,108.6 763.0,112.1 761.4,119.8 756.0,118.9" fill="#0093ff" stroke="#505050" stroke-width="0.8"/><polygon points="763.0,112.1 769.2,108.9 766.8,117.8 761.4,119.8" fill="#0098ff" stroke="#505050" stroke-width="0.8"/><polygon points="591.6,111.5 598.5,115.8 593.2,108.1 580.9,88.6" fill="#9cff00" stroke="#9cff00" stroke-width="0.3"/><polygon points="598.5,115.8 604.5,120.2 603.2,122.7 593.2,108.1" fill="#00ff95" stroke="#00ff95" stroke-width="0.3"/><polygon points="604.5,120.2 609.9,121.7 608.6,125.1 603.2,122.7" fill="#0022ff" stroke="#505050" stroke-width="0.8"/><polygon points="609.9,121.7 615.3,123.1 614.0,122.3 608.6,125.1" fill="#0010ff" stroke="#505050" stroke-width="0.8"/><polygon points="615.3,123.1 620.7,117.3 619.2,120.4 614.0,122.3" fill="#0051ff" stroke="#505050" stroke-width="0.8"/><polygon points="620.7,117.3 626.0,117.1 624.6,120.4 619.2,120.4" fill="#0089ff" stroke="#505050" stroke-width="0.8"/><polygon points="626.0,117.1 631.5,117.3 630.2,120.8 624.6,120.4" fill="#0086ff" stroke="#505050" stroke-width="0.8"/><polygon points="631.5,117.3 636.9,117.8 635.7,121.4 630.2,120.8" fill="#007aff" stroke="#505050" stroke-width="0.8"/><polygon points="636.9,117.8 642.3,118.5 641.1,122.2 635.7,121.4" fill="#0066ff" stroke="#505050" stroke-width="0.8"/><polygon points="642.3,118.5 647.7,119.2 646.5,122.9 641.1,122.2" fill="#0052ff" stroke="#505050" stroke-width="0.8"/><polygon points="647.7,119.2 653.2,119.7 651.9,123.4 646.5,122.9" fill="#0042ff" stroke="#505050" stroke-width="0.8"/><polygon points="653.2,119.7 658.6,120.0 657.3,123.4 651.9,123.4" fill="#0038ff" stroke="#505050" stroke-width="0.8"/><polygon points="658.6,120.0 664.0,120.0 662.7,123.2 657.3,123.4" fill="#0037ff" stroke="#505050" stroke-width="0.8"/><polygon points="664.0,120.0 669.4,119.8 668.1,122.9 662.7,123.2" fill="#003dff" stroke="#505050" stroke-width="0.8"/><polygon points="669.4,119.8 674.8,119.6 673.5,122.6 668.1,122.9" fill="#0044ff" stroke="#505050" stroke-width="0.8"/><polygon points="674.8,119.6 680.2,119.4 678.9,122.4 673.5,122.6" fill="#004bff" stroke="#505050" stroke-width="0.8"/><polygon points="680.2,119.4 685.6,119.4 684.4,122.4 678.9,122.4" fill="#004dff" stroke="#505050" stroke-width="0.8"/><polygon points="685.6,119.4 691.0,119.4 689.8,122.6 684.4,122.4" fill="#004dff" stroke="#505050" stroke-width="0.8"/><polygon points="691.0,119.4 696.5,119.3 695.2,122.7 689.8,122.6" fill="#004aff" stroke="#505050" stroke-width="0.8"/><polygon points="696.5,119.3 701.9,119.1 700.6,122.8 695.2,122.7" fill="#004bff" stroke="#505050" stroke-width="0.8"/><polygon points="701.9,119.1 707.3,118.6 706.0,122.5 700.6,122.8" fill="#0052ff" stroke="#505050" stroke-width="0.8"/><polygon points="707.3,118.6 712.7,117.9 711.4,121.9 706.0,122.5" fill="#0060ff" stroke="#505050" stroke-width="0.8"/><polygon points="712.7,117.9 718.2,117.0 716.8,121.0 711.4,121.9" fill="#0076ff" stroke="#505050" stroke-width="0.8"/><polygon points="718.2,117.0 723.8,116.1 722.4,120.1 716.8,121.0" fill="#0090ff" stroke="#505050" stroke-width="0.8"/><polygon points="723.8,116.1 729.3,115.3 728.0,119.2 722.4,120.1" fill="#00a9ff" stroke="#505050" stroke-width="0.8"/><polygon points="729.3,115.3 734.9,114.9 733.6,118.7 728.0,119.2" fill="#00bbff" stroke="#505050" stroke-width="0.8"/><polygon points="734.9,114.9 740.3,114.8 739.0,118.5 733.6,118.7" fill="#00c3ff" stroke="#505050" stroke-width="0.8"/><polygon points="740.3,114.8 745.2,123.0 743.9,120.8 739.0,118.5" fill="#007bff" stroke="#505050" stroke-width="0.8"/><polygon points="745.2,123.0 750.6,121.1 749.3,126.0 743.9,120.8" fill="#0019ff" stroke="#505050" stroke-width="0.8"/><polygon points="750.6,121.1 756.0,118.9 754.7,124.9 749.3,126.0" fill="#001aff" stroke="#505050" stroke-width="0.8"/><polygon points="756.0,118.9 761.4,119.8 761.6,114.7 754.7,124.9" fill="#0073ff" stroke="#505050" stroke-width="0.8"/><polygon points="761.4,119.8 766.8,117.8 769.4,104.6 761.6,114.7" fill="#00ff21" stroke="#00ff21" stroke-width="0.3"/><polygon points="580.9,88.6 593.2,108.1 596.5,126.5 590.6,123.3" fill="#8eff00" stroke="#8eff00" stroke-width="0.3"/><polygon points="593.2,108.1 603.2,122.7 601.9,128.1 596.5,126.5" fill="#00ff9d" stroke="#00ff9d" stroke-width="0.3"/><polygon points="603.2,122.7 608.6,125.1 607.3,127.4 601.9,128.1" fill="#0027ff" stroke="#505050" stroke-width="0.8"/><polygon points="608.6,125.1 614.0,122.3 612.7,124.9 607.3,127.4" fill="#0041ff" stroke="#505050" stroke-width="0.8"/><polygon points="614.0,122.3 619.2,120.4 617.8,123.6 612.7,124.9" fill="#007dff" stroke="#505050" stroke-width="0.8"/><polygon points="619.2,120.4 624.6,120.4 623.3,123.7 617.8,123.6" fill="#0093ff" stroke="#505050" stroke-width="0.8"/><polygon points="624.6,120.4 630.2,120.8 628.9,124.2 623.3,123.7" fill="#008cff" stroke="#505050" stroke-width="0.8"/><polygon points="630.2,120.8 635.7,121.4 634.4,125.0 628.9,124.2" fill="#007cff" stroke="#505050" stroke-width="0.8"/><polygon points="635.7,121.4 641.1,122.2 639.8,125.8 634.4,125.0" fill="#0066ff" stroke="#505050" stroke-width="0.8"/><polygon points="641.1,122.2 646.5,122.9 645.2,126.5 639.8,125.8" fill="#0050ff" stroke="#505050" stroke-width="0.8"/><polygon points="646.5,122.9 651.9,123.4 650.6,126.9 645.2,126.5" fill="#0041ff" stroke="#505050" stroke-width="0.8"/><polygon points="651.9,123.4 657.3,123.4 656.0,126.8 650.6,126.9" fill="#003cff" stroke="#505050" stroke-width="0.8"/><polygon points="657.3,123.4 662.7,123.2 661.4,126.4 656.0,126.8" fill="#0040ff" stroke="#505050" stroke-width="0.8"/><polygon points="662.7,123.2 668.1,122.9 666.9,125.9 661.4,126.4" fill="#004aff" stroke="#505050" stroke-width="0.8"/><polygon points="668.1,122.9 673.5,122.6 672.3,125.4 666.9,125.9" fill="#0056ff" stroke="#505050" stroke-width="0.8"/><polygon points="673.5,122.6 678.9,122.4 677.7,125.2 672.3,125.4" fill="#005fff" stroke="#505050" stroke-width="0.8"/><polygon points="678.9,122.4 684.4,122.4 683.1,125.3 677.7,125.2" fill="#0061ff" stroke="#505050" stroke-width="0.8"/><polygon points="684.4,122.4 689.8,122.6 688.5,125.6 683.1,125.3" fill="#005cff" stroke="#505050" stroke-width="0.8"/><polygon points="689.8,122.6 695.2,122.7 693.9,126.0 688.5,125.6" fill="#0055ff" stroke="#505050" stroke-width="0.8"/><polygon points="695.2,122.7 700.6,122.8 699.3,126.3 693.9,126.0" fill="#004eff" stroke="#505050" stroke-width="0.8"/><polygon points="700.6,122.8 706.0,122.5 704.7,126.2 699.3,126.3" fill="#004fff" stroke="#505050" stroke-width="0.8"/><polygon points="706.0,122.5 711.4,121.9 710.1,125.8 704.7,126.2" fill="#0058ff" stroke="#505050" stroke-width="0.8"/><polygon points="711.4,121.9 716.8,121.0 715.6,125.0 710.1,125.8" fill="#006cff" stroke="#505050" stroke-width="0.8"/><polygon points="716.8,121.0 722.4,120.1 721.1,124.0 715.6,125.0" fill="#0085ff" stroke="#505050" stroke-width="0.8"/><polygon points="722.4,120.1 728.0,119.2 726.7,123.1 721.1,124.0" fill="#009fff" stroke="#505050" stroke-width="0.8"/><polygon points="728.0,119.2 733.6,118.7 732.3,122.5 726.7,123.1" fill="#00b4ff" stroke="#505050" stroke-width="0.8"/><polygon points="733.6,118.7 739.0,118.5 737.7,122.2 732.3,122.5" fill="#00bfff" stroke="#505050" stroke-width="0.8"/><polygon points="739.0,118.5 743.9,120.8 742.8,123.6 737.7,122.2" fill="#00a8ff" stroke="#505050" stroke-width="0.8"/><polygon points="743.9,120.8 749.3,126.0 748.0,128.2 742.8,123.6" fill="#0049ff" stroke="#505050" stroke-width="0.8"/><polygon points="749.3,126.0 754.7,124.9 753.4,127.0 748.0,128.2" fill="#0014ff" stroke="#505050" stroke-width="0.8"/><polygon points="754.7,124.9 761.6,114.7 758.9,124.5 753.4,127.0" fill="#007fff" stroke="#505050" stroke-width="0.8"/><polygon points="761.6,114.7 769.4,104.6 765.5,119.5 758.9,124.5" fill="#00ff13" stroke="#00ff13" stroke-width="0.3"/><polygon points="590.6,123.3 596.5,126.5 595.2,127.9 587.7,122.3" fill="#00a5ff" stroke="#505050" stroke-width="0.8"/><polygon points="596.5,126.5 601.9,128.1 600.6,130.6 595.2,127.9" fill="#0047ff" stroke="#505050" stroke-width="0.8"/><polygon points="601.9,128.1 607.3,127.4 606.1,133.0 600.6,130.6" fill="#001cff" stroke="#505050" stroke-width="0.8"/><polygon points="607.3,127.4 612.7,124.9 611.3,127.7 606.1,133.0" fill="#0048ff" stroke="#505050" stroke-width="0.8"/><polygon points="612.7,124.9 617.8,123.6 616.4,126.8 611.3,127.7" fill="#008fff" stroke="#505050" stroke-width="0.8"/><polygon points="617.8,123.6 623.3,123.7 621.9,127.1 616.4,126.8" fill="#009cff" stroke="#505050" stroke-width="0.8"/><polygon points="623.3,123.7 628.9,124.2 627.5,127.7 621.9,127.1" fill="#0092ff" stroke="#505050" stroke-width="0.8"/><polygon points="628.9,124.2 634.4,125.0 633.1,128.5 627.5,127.7" fill="#007eff" stroke="#505050" stroke-width="0.8"/><polygon points="634.4,125.0 639.8,125.8 638.5,129.4 633.1,128.5" fill="#0066ff" stroke="#505050" stroke-width="0.8"/><polygon points="639.8,125.8 645.2,126.5 643.9,130.1 638.5,129.4" fill="#0051ff" stroke="#505050" stroke-width="0.8"/><polygon points="645.2,126.5 650.6,126.9 649.3,130.3 643.9,130.1" fill="#0043ff" stroke="#505050" stroke-width="0.8"/><polygon points="650.6,126.9 656.0,126.8 654.8,130.1 649.3,130.3" fill="#0041ff" stroke="#505050" stroke-width="0.8"/><polygon points="656.0,126.8 661.4,126.4 660.2,129.5 654.8,130.1" fill="#004aff" stroke="#505050" stroke-width="0.8"/><polygon points="661.4,126.4 666.9,125.9 665.6,128.9 660.2,129.5" fill="#0059ff" stroke="#505050" stroke-width="0.8"/><polygon points="666.9,125.9 672.3,125.4 671.0,128.3 665.6,128.9" fill="#0069ff" stroke="#505050" stroke-width="0.8"/><polygon points="672.3,125.4 677.7,125.2 676.4,128.1 671.0,128.3" fill="#0073ff" stroke="#505050" stroke-width="0.8"/><polygon points="677.7,125.2 683.1,125.3 681.8,128.3 676.4,128.1" fill="#0074ff" stroke="#505050" stroke-width="0.8"/><polygon points="683.1,125.3 688.5,125.6 687.2,128.7 681.8,128.3" fill="#006dff" stroke="#505050" stroke-width="0.8"/><polygon points="688.5,125.6 693.9,126.0 692.6,129.3 687.2,128.7" fill="#0060ff" stroke="#505050" stroke-width="0.8"/><polygon points="693.9,126.0 699.3,126.3 698.1,129.8 692.6,129.3" fill="#0054ff" stroke="#505050" stroke-width="0.8"/><polygon points="699.3,126.3 704.7,126.2 703.5,129.9 698.1,129.8" fill="#004eff" stroke="#505050" stroke-width="0.8"/><polygon points="704.7,126.2 710.1,125.8 708.9,129.6 703.5,129.9" fill="#0053ff" stroke="#505050" stroke-width="0.8"/><polygon points="710.1,125.8 715.6,125.0 714.3,128.9 708.9,129.6" fill="#0063ff" stroke="#505050" stroke-width="0.8"/><polygon points="715.6,125.0 721.1,124.0 719.7,127.9 714.3,128.9" fill="#007bff" stroke="#505050" stroke-width="0.8"/><polygon points="721.1,124.0 726.7,123.1 725.4,127.0 719.7,127.9" fill="#0096ff" stroke="#505050" stroke-width="0.8"/><polygon points="726.7,123.1 732.3,122.5 730.9,126.3 725.4,127.0" fill="#00adff" stroke="#505050" stroke-width="0.8"/><polygon points="732.3,122.5 737.7,122.2 736.4,126.0 730.9,126.3" fill="#00b9ff" stroke="#505050" stroke-width="0.8"/><polygon points="737.7,122.2 742.8,123.6 741.6,126.9 736.4,126.0" fill="#00adff" stroke="#505050" stroke-width="0.8"/><polygon points="742.8,123.6 748.0,128.2 746.8,133.4 741.6,126.9" fill="#004fff" stroke="#505050" stroke-width="0.8"/><polygon points="748.0,128.2 753.4,127.0 752.2,132.1 746.8,133.4" fill="#0012ff" stroke="#505050" stroke-width="0.8"/><polygon points="753.4,127.0 758.9,124.5 757.6,130.6 752.2,132.1" fill="#0041ff" stroke="#505050" stroke-width="0.8"/><polygon points="758.9,124.5 765.5,119.5 763.2,127.4 757.6,130.6" fill="#0097ff" stroke="#505050" stroke-width="0.8"/><polygon points="587.7,122.3 595.2,127.9 591.5,124.8 578.6,104.2" fill="#58ff00" stroke="#58ff00" stroke-width="0.3"/><polygon points="595.2,127.9 600.6,130.6 599.0,130.7 591.5,124.8" fill="#00ffe3" stroke="#00ffe3" stroke-width="0.3"/><polygon points="600.6,130.6 606.1,133.0 604.8,135.8 599.0,130.7" fill="#0035ff" stroke="#505050" stroke-width="0.8"/><polygon points="606.1,133.0 611.3,127.7 609.8,130.7 604.8,135.8" fill="#004aff" stroke="#505050" stroke-width="0.8"/><polygon points="611.3,127.7 616.4,126.8 615.0,130.1 609.8,130.7" fill="#009eff" stroke="#505050" stroke-width="0.8"/><polygon points="616.4,126.8 621.9,127.1 620.5,130.4 615.0,130.1" fill="#00a4ff" stroke="#505050" stroke-width="0.8"/><polygon points="621.9,127.1 627.5,127.7 626.2,131.1 620.5,130.4" fill="#0098ff" stroke="#505050" stroke-width="0.8"/><polygon points="627.5,127.7 633.1,128.5 631.8,132.0 626.2,131.1" fill="#0082ff" stroke="#505050" stroke-width="0.8"/><polygon points="633.1,128.5 638.5,129.4 637.3,132.9 631.8,132.0" fill="#0069ff" stroke="#505050" stroke-width="0.8"/><polygon points="638.5,129.4 643.9,130.1 642.7,133.5 637.3,132.9" fill="#0053ff" stroke="#505050" stroke-width="0.8"/><polygon points="643.9,130.1 649.3,130.3 648.1,133.7 642.7,133.5" fill="#0047ff" stroke="#505050" stroke-width="0.8"/><polygon points="649.3,130.3 654.8,130.1 653.5,133.5 648.1,133.7" fill="#0047ff" stroke="#505050" stroke-width="0.8"/><polygon points="654.8,130.1 660.2,129.5 658.9,132.8 653.5,133.5" fill="#0053ff" stroke="#505050" stroke-width="0.8"/><polygon points="660.2,129.5 665.6,128.9 664.3,132.1 658.9,132.8" fill="#0065ff" stroke="#505050" stroke-width="0.8"/><polygon points="665.6,128.9 671.0,128.3 669.7,131.5 664.3,132.1" fill="#0077ff" stroke="#505050" stroke-width="0.8"/><polygon points="671.0,128.3 676.4,128.1 675.1,131.3 669.7,131.5" fill="#0082ff" stroke="#505050" stroke-width="0.8"/><polygon points="676.4,128.1 681.8,128.3 680.6,131.5 675.1,131.3" fill="#0083ff" stroke="#505050" stroke-width="0.8"/><polygon points="681.8,128.3 687.2,128.7 686.0,132.1 680.6,131.5" fill="#0079ff" stroke="#505050" stroke-width="0.8"/><polygon points="687.2,128.7 692.6,129.3 691.4,132.8 686.0,132.1" fill="#0068ff" stroke="#505050" stroke-width="0.8"/><polygon points="692.6,129.3 698.1,129.8 696.8,133.4 691.4,132.8" fill="#0058ff" stroke="#505050" stroke-width="0.8"/><polygon points="698.1,129.8 703.5,129.9 702.2,133.6 696.8,133.4" fill="#004dff" stroke="#505050" stroke-width="0.8"/><polygon points="703.5,129.9 708.9,129.6 707.6,133.4 702.2,133.6" fill="#004fff" stroke="#505050" stroke-width="0.8"/><polygon points="708.9,129.6 714.3,128.9 713.0,132.7 707.6,133.4" fill="#005cff" stroke="#505050" stroke-width="0.8"/><polygon points="714.3,128.9 719.7,127.9 718.4,131.8 713.0,132.7" fill="#0073ff" stroke="#505050" stroke-width="0.8"/><polygon points="719.7,127.9 725.4,127.0 724.0,130.9 718.4,131.8" fill="#008eff" stroke="#505050" stroke-width="0.8"/><polygon points="725.4,127.0 730.9,126.3 729.6,130.2 724.0,130.9" fill="#00a5ff" stroke="#505050" stroke-width="0.8"/><polygon points="730.9,126.3 736.4,126.0 735.1,129.9 729.6,130.2" fill="#00b3ff" stroke="#505050" stroke-width="0.8"/><polygon points="736.4,126.0 741.6,126.9 740.4,130.4 735.1,129.9" fill="#00adff" stroke="#505050" stroke-width="0.8"/><polygon points="741.6,126.9 746.8,133.4 745.5,136.2 740.4,130.4" fill="#004cff" stroke="#505050" stroke-width="0.8"/><polygon points="746.8,133.4 752.2,132.1 750.9,132.0 745.5,136.2" fill="#001cff" stroke="#505050" stroke-width="0.8"/><polygon points="752.2,132.1 757.6,130.6 757.3,127.4 750.9,132.0" fill="#006eff" stroke="#505050" stroke-width="0.8"/><polygon points="757.6,130.6 763.2,127.4 765.4,116.3 757.3,127.4" fill="#00ff2e" stroke="#00ff2e" stroke-width="0.3"/><polygon points="578.6,104.2 591.5,124.8 592.6,135.1 585.0,129.0" fill="#59ff00" stroke="#59ff00" stroke-width="0.3"/><polygon points="591.5,124.8 599.0,130.7 598.1,137.8 592.6,135.1" fill="#00ffe3" stroke="#00ffe3" stroke-width="0.3"/><polygon points="599.0,130.7 604.8,135.8 603.5,140.3 598.1,137.8" fill="#0034ff" stroke="#505050" stroke-width="0.8"/><polygon points="604.8,135.8 609.8,130.7 608.5,134.0 603.5,140.3" fill="#004fff" stroke="#505050" stroke-width="0.8"/><polygon points="609.8,130.7 615.0,130.1 613.7,133.5 608.5,134.0" fill="#00a8ff" stroke="#505050" stroke-width="0.8"/><polygon points="615.0,130.1 620.5,130.4 619.2,133.8 613.7,133.5" fill="#00acff" stroke="#505050" stroke-width="0.8"/><polygon points="620.5,130.4 626.2,131.1 624.9,134.4 619.2,133.8" fill="#009eff" stroke="#505050" stroke-width="0.8"/><polygon points="626.2,131.1 631.8,132.0 630.6,135.4 624.9,134.4" fill="#0087ff" stroke="#505050" stroke-width="0.8"/><polygon points="631.8,132.0 637.3,132.9 636.0,136.3 630.6,135.4" fill="#006dff" stroke="#505050" stroke-width="0.8"/><polygon points="637.3,132.9 642.7,133.5 641.4,137.0 636.0,136.3" fill="#0057ff" stroke="#505050" stroke-width="0.8"/><polygon points="642.7,133.5 648.1,133.7 646.8,137.2 641.4,137.0" fill="#004bff" stroke="#505050" stroke-width="0.8"/><polygon points="648.1,133.7 653.5,133.5 652.2,137.0 646.8,137.2" fill="#004bff" stroke="#505050" stroke-width="0.8"/><polygon points="653.5,133.5 658.9,132.8 657.6,136.4 652.2,137.0" fill="#0058ff" stroke="#505050" stroke-width="0.8"/><polygon points="658.9,132.8 664.3,132.1 663.0,135.7 657.6,136.4" fill="#006aff" stroke="#505050" stroke-width="0.8"/><polygon points="664.3,132.1 669.7,131.5 668.4,135.1 663.0,135.7" fill="#007dff" stroke="#505050" stroke-width="0.8"/><polygon points="669.7,131.5 675.1,131.3 673.8,134.9 668.4,135.1" fill="#0088ff" stroke="#505050" stroke-width="0.8"/><polygon points="675.1,131.3 680.6,131.5 679.3,135.1 673.8,134.9" fill="#0088ff" stroke="#505050" stroke-width="0.8"/><polygon points="680.6,131.5 686.0,132.1 684.7,135.7 679.3,135.1" fill="#007dff" stroke="#505050" stroke-width="0.8"/><polygon points="686.0,132.1 691.4,132.8 690.1,136.4 684.7,135.7" fill="#006aff" stroke="#505050" stroke-width="0.8"/><polygon points="691.4,132.8 696.8,133.4 695.5,137.1 690.1,136.4" fill="#0058ff" stroke="#505050" stroke-width="0.8"/><polygon points="696.8,133.4 702.2,133.6 700.9,137.3 695.5,137.1" fill="#004bff" stroke="#505050" stroke-width="0.8"/><polygon points="702.2,133.6 707.6,133.4 706.3,137.1 700.9,137.3" fill="#004bff" stroke="#505050" stroke-width="0.8"/><polygon points="707.6,133.4 713.0,132.7 711.7,136.5 706.3,137.1" fill="#0057ff" stroke="#505050" stroke-width="0.8"/><polygon points="713.0,132.7 718.4,131.8 717.2,135.6 711.7,136.5" fill="#006dff" stroke="#505050" stroke-width="0.8"/><polygon points="718.4,131.8 724.0,130.9 722.7,134.7 717.2,135.6" fill="#0087ff" stroke="#505050" stroke-width="0.8"/><polygon points="724.0,130.9 729.6,130.2 728.3,134.0 722.7,134.7" fill="#009eff" stroke="#505050" stroke-width="0.8"/><polygon points="729.6,130.2 735.1,129.9 733.8,133.7 728.3,134.0" fill="#00acff" stroke="#505050" stroke-width="0.8"/><polygon points="735.1,129.9 740.4,130.4 739.0,134.3 733.8,133.7" fill="#00a8ff" stroke="#505050" stroke-width="0.8"/><polygon points="740.4,130.4 745.5,136.2 744.2,140.4 739.0,134.3" fill="#004cff" stroke="#505050" stroke-width="0.8"/><polygon points="745.5,136.2 750.9,132.0 749.6,138.0 744.2,140.4" fill="#0027ff" stroke="#505050" stroke-width="0.8"/><polygon points="750.9,132.0 757.3,127.4 755.0,135.3 749.6,138.0" fill="#0088ff" stroke="#505050" stroke-width="0.8"/><polygon points="757.3,127.4 765.4,116.3 761.8,129.6 755.0,135.3" fill="#00ff21" stroke="#00ff21" stroke-width="0.3"/><polygon points="585.0,129.0 592.6,135.1 588.6,131.0 575.9,110.8" fill="#66ff00" stroke="#66ff00" stroke-width="0.3"/><polygon points="592.6,135.1 598.1,137.8 596.3,137.4 588.6,131.0" fill="#00ffd4" stroke="#00ffd4" stroke-width="0.3"/><polygon points="598.1,137.8 603.5,140.3 602.2,142.7 596.3,137.4" fill="#003aff" stroke="#505050" stroke-width="0.8"/><polygon points="603.5,140.3 608.5,134.0 607.2,137.6 602.2,142.7" fill="#0053ff" stroke="#505050" stroke-width="0.8"/><polygon points="608.5,134.0 613.7,133.5 612.3,136.8 607.2,137.6" fill="#00adff" stroke="#505050" stroke-width="0.8"/><polygon points="613.7,133.5 619.2,133.8 617.8,137.1 612.3,136.8" fill="#00b3ff" stroke="#505050" stroke-width="0.8"/><polygon points="619.2,133.8 624.9,134.4 623.5,137.8 617.8,137.1" fill="#00a5ff" stroke="#505050" stroke-width="0.8"/><polygon points="624.9,134.4 630.6,135.4 629.2,138.7 623.5,137.8" fill="#008eff" stroke="#505050" stroke-width="0.8"/><polygon points="630.6,135.4 636.0,136.3 634.7,139.7 629.2,138.7" fill="#0073ff" stroke="#505050" stroke-width="0.8"/><polygon points="636.0,136.3 641.4,137.0 640.1,140.4 634.7,139.7" fill="#005cff" stroke="#505050" stroke-width="0.8"/><polygon points="641.4,137.0 646.8,137.2 645.5,140.7 640.1,140.4" fill="#004fff" stroke="#505050" stroke-width="0.8"/><polygon points="646.8,137.2 652.2,137.0 650.9,140.6 645.5,140.7" fill="#004dff" stroke="#505050" stroke-width="0.8"/><polygon points="652.2,137.0 657.6,136.4 656.4,140.1 650.9,140.6" fill="#0058ff" stroke="#505050" stroke-width="0.8"/><polygon points="657.6,136.4 663.0,135.7 661.8,139.5 656.4,140.1" fill="#0068ff" stroke="#505050" stroke-width="0.8"/><polygon points="663.0,135.7 668.4,135.1 667.2,139.0 661.8,139.5" fill="#0079ff" stroke="#505050" stroke-width="0.8"/><polygon points="668.4,135.1 673.8,134.9 672.6,138.9 667.2,139.0" fill="#0083ff" stroke="#505050" stroke-width="0.8"/><polygon points="673.8,134.9 679.3,135.1 678.0,139.1 672.6,138.9" fill="#0082ff" stroke="#505050" stroke-width="0.8"/><polygon points="679.3,135.1 684.7,135.7 683.4,139.7 678.0,139.1" fill="#0077ff" stroke="#505050" stroke-width="0.8"/><polygon points="684.7,135.7 690.1,136.4 688.8,140.3 683.4,139.7" fill="#0065ff" stroke="#505050" stroke-width="0.8"/><polygon points="690.1,136.4 695.5,137.1 694.2,140.9 688.8,140.3" fill="#0053ff" stroke="#505050" stroke-width="0.8"/><polygon points="695.5,137.1 700.9,137.3 699.7,141.1 694.2,140.9" fill="#0047ff" stroke="#505050" stroke-width="0.8"/><polygon points="700.9,137.3 706.3,137.1 705.1,140.8 699.7,141.1" fill="#0047ff" stroke="#505050" stroke-width="0.8"/><polygon points="706.3,137.1 711.7,136.5 710.5,140.2 705.1,140.8" fill="#0053ff" stroke="#505050" stroke-width="0.8"/><polygon points="711.7,136.5 717.2,135.6 715.9,139.3 710.5,140.2" fill="#0069ff" stroke="#505050" stroke-width="0.8"/><polygon points="717.2,135.6 722.7,134.7 721.4,138.4 715.9,139.3" fill="#0082ff" stroke="#505050" stroke-width="0.8"/><polygon points="722.7,134.7 728.3,134.0 727.0,137.8 721.4,138.4" fill="#0098ff" stroke="#505050" stroke-width="0.8"/><polygon points="728.3,134.0 733.8,133.7 732.4,137.6 727.0,137.8" fill="#00a4ff" stroke="#505050" stroke-width="0.8"/><polygon points="733.8,133.7 739.0,134.3 737.6,138.4 732.4,137.6" fill="#009eff" stroke="#505050" stroke-width="0.8"/><polygon points="739.0,134.3 744.2,140.4 742.9,144.3 737.6,138.4" fill="#0040ff" stroke="#505050" stroke-width="0.8"/><polygon points="744.2,140.4 749.6,138.0 748.4,143.1 742.9,144.3" fill="#0005ff" stroke="#505050" stroke-width="0.8"/><polygon points="749.6,138.0 755.0,135.3 753.8,141.7 748.4,143.1" fill="#003aff" stroke="#505050" stroke-width="0.8"/><polygon points="755.0,135.3 761.8,129.6 759.2,138.9 753.8,141.7" fill="#0094ff" stroke="#505050" stroke-width="0.8"/><polygon points="575.9,110.8 588.6,131.0 590.1,145.4 584.7,143.0" fill="#55ff00" stroke="#55ff00" stroke-width="0.3"/><polygon points="588.6,131.0 596.3,137.4 595.6,146.7 590.1,145.4" fill="#00ffdd" stroke="#00ffdd" stroke-width="0.3"/><polygon points="596.3,137.4 602.2,142.7 601.0,147.2 595.6,146.7" fill="#0030ff" stroke="#505050" stroke-width="0.8"/><polygon points="602.2,142.7 607.2,137.6 606.1,141.6 601.0,147.2" fill="#0052ff" stroke="#505050" stroke-width="0.8"/><polygon points="607.2,137.6 612.3,136.8 611.0,140.2 606.1,141.6" fill="#00adff" stroke="#505050" stroke-width="0.8"/><polygon points="612.3,136.8 617.8,137.1 616.5,140.4 611.0,140.2" fill="#00b9ff" stroke="#505050" stroke-width="0.8"/><polygon points="617.8,137.1 623.5,137.8 622.1,141.1 616.5,140.4" fill="#00adff" stroke="#505050" stroke-width="0.8"/><polygon points="623.5,137.8 629.2,138.7 627.9,142.0 622.1,141.1" fill="#0096ff" stroke="#505050" stroke-width="0.8"/><polygon points="629.2,138.7 634.7,139.7 633.4,143.0 627.9,142.0" fill="#007bff" stroke="#505050" stroke-width="0.8"/><polygon points="634.7,139.7 640.1,140.4 638.9,143.8 633.4,143.0" fill="#0063ff" stroke="#505050" stroke-width="0.8"/><polygon points="640.1,140.4 645.5,140.7 644.3,144.2 638.9,143.8" fill="#0053ff" stroke="#505050" stroke-width="0.8"/><polygon points="645.5,140.7 650.9,140.6 649.7,144.3 644.3,144.2" fill="#004eff" stroke="#505050" stroke-width="0.8"/><polygon points="650.9,140.6 656.4,140.1 655.1,144.0 649.7,144.3" fill="#0054ff" stroke="#505050" stroke-width="0.8"/><polygon points="656.4,140.1 661.8,139.5 660.5,143.6 655.1,144.0" fill="#0060ff" stroke="#505050" stroke-width="0.8"/><polygon points="661.8,139.5 667.2,139.0 665.9,143.3 660.5,143.6" fill="#006dff" stroke="#505050" stroke-width="0.8"/><polygon points="667.2,139.0 672.6,138.9 671.3,143.2 665.9,143.3" fill="#0074ff" stroke="#505050" stroke-width="0.8"/><polygon points="672.6,138.9 678.0,139.1 676.7,143.4 671.3,143.2" fill="#0073ff" stroke="#505050" stroke-width="0.8"/><polygon points="678.0,139.1 683.4,139.7 682.1,143.8 676.7,143.4" fill="#0069ff" stroke="#505050" stroke-width="0.8"/><polygon points="683.4,139.7 688.8,140.3 687.6,144.4 682.1,143.8" fill="#0059ff" stroke="#505050" stroke-width="0.8"/><polygon points="688.8,140.3 694.2,140.9 693.0,144.8 687.6,144.4" fill="#004aff" stroke="#505050" stroke-width="0.8"/><polygon points="694.2,140.9 699.7,141.1 698.4,144.8 693.0,144.8" fill="#0041ff" stroke="#505050" stroke-width="0.8"/><polygon points="699.7,141.1 705.1,140.8 703.8,144.5 698.4,144.8" fill="#0043ff" stroke="#505050" stroke-width="0.8"/><polygon points="705.1,140.8 710.5,140.2 709.2,143.8 703.8,144.5" fill="#0051ff" stroke="#505050" stroke-width="0.8"/><polygon points="710.5,140.2 715.9,139.3 714.6,143.0 709.2,143.8" fill="#0066ff" stroke="#505050" stroke-width="0.8"/><polygon points="715.9,139.3 721.4,138.4 720.1,142.2 714.6,143.0" fill="#007eff" stroke="#505050" stroke-width="0.8"/><polygon points="721.4,138.4 727.0,137.8 725.6,141.7 720.1,142.2" fill="#0092ff" stroke="#505050" stroke-width="0.8"/><polygon points="727.0,137.8 732.4,137.6 731.1,141.6 725.6,141.7" fill="#009cff" stroke="#505050" stroke-width="0.8"/><polygon points="732.4,137.6 737.6,138.4 736.3,142.9 731.1,141.6" fill="#008fff" stroke="#505050" stroke-width="0.8"/><polygon points="737.6,138.4 742.9,144.3 741.7,147.1 736.3,142.9" fill="#0039ff" stroke="#505050" stroke-width="0.8"/><polygon points="742.9,144.3 748.4,143.1 747.4,141.2 741.7,147.1" fill="#0024ff" stroke="#505050" stroke-width="0.8"/><polygon points="748.4,143.1 753.8,141.7 754.0,136.0 747.4,141.2" fill="#0085ff" stroke="#505050" stroke-width="0.8"/><polygon points="753.8,141.7 759.2,138.9 762.1,124.6 754.0,136.0" fill="#0dff00" stroke="#0dff00" stroke-width="0.3"/><polygon points="584.7,143.0 590.1,145.4 588.8,145.8 581.8,141.4" fill="#008aff" stroke="#505050" stroke-width="0.8"/><polygon points="590.1,145.4 595.6,146.7 593.7,144.3 588.8,145.8" fill="#005cff" stroke="#505050" stroke-width="0.8"/><polygon points="595.6,146.7 601.0,147.2 599.7,148.8 593.7,144.3" fill="#0039ff" stroke="#505050" stroke-width="0.8"/><polygon points="601.0,147.2 606.1,141.6 605.1,145.9 599.7,148.8" fill="#0051ff" stroke="#505050" stroke-width="0.8"/><polygon points="606.1,141.6 611.0,140.2 609.7,143.7 605.1,145.9" fill="#00a8ff" stroke="#505050" stroke-width="0.8"/><polygon points="611.0,140.2 616.5,140.4 615.2,143.8 609.7,143.7" fill="#00bfff" stroke="#505050" stroke-width="0.8"/><polygon points="616.5,140.4 622.1,141.1 620.8,144.4 615.2,143.8" fill="#00b4ff" stroke="#505050" stroke-width="0.8"/><polygon points="622.1,141.1 627.9,142.0 626.5,145.2 620.8,144.4" fill="#009fff" stroke="#505050" stroke-width="0.8"/><polygon points="627.9,142.0 633.4,143.0 632.2,146.2 626.5,145.2" fill="#0085ff" stroke="#505050" stroke-width="0.8"/><polygon points="633.4,143.0 638.9,143.8 637.6,147.0 632.2,146.2" fill="#006cff" stroke="#505050" stroke-width="0.8"/><polygon points="638.9,143.8 644.3,144.2 643.0,147.7 637.6,147.0" fill="#0058ff" stroke="#505050" stroke-width="0.8"/><polygon points="644.3,144.2 649.7,144.3 648.4,147.9 643.0,147.7" fill="#004fff" stroke="#505050" stroke-width="0.8"/><polygon points="649.7,144.3 655.1,144.0 653.8,147.9 648.4,147.9" fill="#004eff" stroke="#505050" stroke-width="0.8"/><polygon points="655.1,144.0 660.5,143.6 659.2,147.7 653.8,147.9" fill="#0055ff" stroke="#505050" stroke-width="0.8"/><polygon points="660.5,143.6 665.9,143.3 664.6,147.5 659.2,147.7" fill="#005cff" stroke="#505050" stroke-width="0.8"/><polygon points="665.9,143.3 671.3,143.2 670.1,147.5 664.6,147.5" fill="#0061ff" stroke="#505050" stroke-width="0.8"/><polygon points="671.3,143.2 676.7,143.4 675.5,147.7 670.1,147.5" fill="#005fff" stroke="#505050" stroke-width="0.8"/><polygon points="676.7,143.4 682.1,143.8 680.9,148.1 675.5,147.7" fill="#0056ff" stroke="#505050" stroke-width="0.8"/><polygon points="682.1,143.8 687.6,144.4 686.3,148.4 680.9,148.1" fill="#004aff" stroke="#505050" stroke-width="0.8"/><polygon points="687.6,144.4 693.0,144.8 691.7,148.6 686.3,148.4" fill="#0040ff" stroke="#505050" stroke-width="0.8"/><polygon points="693.0,144.8 698.4,144.8 697.1,148.5 691.7,148.6" fill="#003cff" stroke="#505050" stroke-width="0.8"/><polygon points="698.4,144.8 703.8,144.5 702.5,148.1 697.1,148.5" fill="#0041ff" stroke="#505050" stroke-width="0.8"/><polygon points="703.8,144.5 709.2,143.8 707.9,147.4 702.5,148.1" fill="#0050ff" stroke="#505050" stroke-width="0.8"/><polygon points="709.2,143.8 714.6,143.0 713.3,146.6 707.9,147.4" fill="#0066ff" stroke="#505050" stroke-width="0.8"/><polygon points="714.6,143.0 720.1,142.2 718.8,145.9 713.3,146.6" fill="#007cff" stroke="#505050" stroke-width="0.8"/><polygon points="720.1,142.2 725.6,141.7 724.3,145.5 718.8,145.9" fill="#008cff" stroke="#505050" stroke-width="0.8"/><polygon points="725.6,141.7 731.1,141.6 729.7,145.6 724.3,145.5" fill="#0093ff" stroke="#505050" stroke-width="0.8"/><polygon points="731.1,141.6 736.3,142.9 735.0,147.5 729.7,145.6" fill="#007dff" stroke="#505050" stroke-width="0.8"/><polygon points="736.3,142.9 741.7,147.1 740.4,151.0 735.0,147.5" fill="#002fff" stroke="#505050" stroke-width="0.8"/><polygon points="741.7,147.1 747.4,141.2 745.8,149.7 740.4,151.0" fill="#002bff" stroke="#505050" stroke-width="0.8"/><polygon points="747.4,141.2 754.0,136.0 751.5,145.0 745.8,149.7" fill="#00a4ff" stroke="#505050" stroke-width="0.8"/><polygon points="754.0,136.0 762.1,124.6 758.0,140.1 751.5,145.0" fill="#1fff00" stroke="#1fff00" stroke-width="0.3"/><polygon points="581.8,141.4 588.8,145.8 584.6,141.1 574.8,128.7" fill="#05ff00" stroke="#05ff00" stroke-width="0.3"/><polygon points="588.8,145.8 593.7,144.3 593.0,153.2 584.6,141.1" fill="#00ffcb" stroke="#00ffcb" stroke-width="0.3"/><polygon points="593.7,144.3 599.7,148.8 598.4,154.4 593.0,153.2" fill="#003eff" stroke="#505050" stroke-width="0.8"/><polygon points="599.7,148.8 605.1,145.9 603.8,155.4 598.4,154.4" fill="#0023ff" stroke="#505050" stroke-width="0.8"/><polygon points="605.1,145.9 609.7,143.7 608.4,147.2 603.8,155.4" fill="#007aff" stroke="#505050" stroke-width="0.8"/><polygon points="609.7,143.7 615.2,143.8 613.8,147.2 608.4,147.2" fill="#00c3ff" stroke="#505050" stroke-width="0.8"/><polygon points="615.2,143.8 620.8,144.4 619.4,147.7 613.8,147.2" fill="#00bbff" stroke="#505050" stroke-width="0.8"/><polygon points="620.8,144.4 626.5,145.2 625.1,148.4 619.4,147.7" fill="#00a9ff" stroke="#505050" stroke-width="0.8"/><polygon points="626.5,145.2 632.2,146.2 630.8,149.3 625.1,148.4" fill="#0090ff" stroke="#505050" stroke-width="0.8"/><polygon points="632.2,146.2 637.6,147.0 636.3,150.2 630.8,149.3" fill="#0076ff" stroke="#505050" stroke-width="0.8"/><polygon points="637.6,147.0 643.0,147.7 641.7,151.0 636.3,150.2" fill="#0060ff" stroke="#505050" stroke-width="0.8"/><polygon points="643.0,147.7 648.4,147.9 647.1,151.4 641.7,151.0" fill="#0052ff" stroke="#505050" stroke-width="0.8"/><polygon points="648.4,147.9 653.8,147.9 652.5,151.7 647.1,151.4" fill="#004bff" stroke="#505050" stroke-width="0.8"/><polygon points="653.8,147.9 659.2,147.7 658.0,151.7 652.5,151.7" fill="#004aff" stroke="#505050" stroke-width="0.8"/><polygon points="659.2,147.7 664.6,147.5 663.4,151.7 658.0,151.7" fill="#004dff" stroke="#505050" stroke-width="0.8"/><polygon points="664.6,147.5 670.1,147.5 668.8,151.8 663.4,151.7" fill="#004dff" stroke="#505050" stroke-width="0.8"/><polygon points="670.1,147.5 675.5,147.7 674.2,152.0 668.8,151.8" fill="#004bff" stroke="#505050" stroke-width="0.8"/><polygon points="675.5,147.7 680.9,148.1 679.6,152.2 674.2,152.0" fill="#0044ff" stroke="#505050" stroke-width="0.8"/><polygon points="680.9,148.1 686.3,148.4 685.0,152.3 679.6,152.2" fill="#003dff" stroke="#505050" stroke-width="0.8"/><polygon points="686.3,148.4 691.7,148.6 690.4,152.3 685.0,152.3" fill="#0037ff" stroke="#505050" stroke-width="0.8"/><polygon points="691.7,148.6 697.1,148.5 695.8,152.1 690.4,152.3" fill="#0038ff" stroke="#505050" stroke-width="0.8"/><polygon points="697.1,148.5 702.5,148.1 701.3,151.6 695.8,152.1" fill="#0042ff" stroke="#505050" stroke-width="0.8"/><polygon points="702.5,148.1 707.9,147.4 706.7,150.9 701.3,151.6" fill="#0052ff" stroke="#505050" stroke-width="0.8"/><polygon points="707.9,147.4 713.3,146.6 712.1,150.2 706.7,150.9" fill="#0066ff" stroke="#505050" stroke-width="0.8"/><polygon points="713.3,146.6 718.8,145.9 717.5,149.7 712.1,150.2" fill="#007aff" stroke="#505050" stroke-width="0.8"/><polygon points="718.8,145.9 724.3,145.5 722.9,149.5 717.5,149.7" fill="#0086ff" stroke="#505050" stroke-width="0.8"/><polygon points="724.3,145.5 729.7,145.6 728.3,149.6 722.9,149.5" fill="#0089ff" stroke="#505050" stroke-width="0.8"/><polygon points="729.7,145.6 735.0,147.5 733.7,155.2 728.3,149.6" fill="#0053ff" stroke="#505050" stroke-width="0.8"/><polygon points="735.0,147.5 740.4,151.0 739.1,151.1 733.7,155.2" fill="#0021ff" stroke="#505050" stroke-width="0.8"/><polygon points="740.4,151.0 745.8,149.7 745.3,146.3 739.1,151.1" fill="#0051ff" stroke="#505050" stroke-width="0.8"/><polygon points="745.8,149.7 751.5,145.0 750.0,151.6 745.3,146.3" fill="#0078ff" stroke="#505050" stroke-width="0.8"/><polygon points="751.5,145.0 758.0,140.1 755.5,149.3 750.0,151.6" fill="#00a7ff" stroke="#505050" stroke-width="0.8"/><polygon points="574.8,128.7 584.6,141.1 586.3,155.0 580.9,153.3" fill="#00ff07" stroke="#00ff07" stroke-width="0.3"/><polygon points="584.6,141.1 593.0,153.2 591.7,154.0 586.3,155.0" fill="#00ffd3" stroke="#00ffd3" stroke-width="0.3"/><polygon points="593.0,153.2 598.4,154.4 597.2,156.3 591.7,154.0" fill="#002bff" stroke="#505050" stroke-width="0.8"/><polygon points="598.4,154.4 603.8,155.4 602.6,158.3 597.2,156.3" fill="#0000fb" stroke="#505050" stroke-width="0.8"/><polygon points="603.8,155.4 608.4,147.2 607.4,151.6 602.6,158.3" fill="#0050ff" stroke="#505050" stroke-width="0.8"/><polygon points="608.4,147.2 613.8,147.2 612.6,150.8 607.4,151.6" fill="#00c0ff" stroke="#505050" stroke-width="0.8"/><polygon points="613.8,147.2 619.4,147.7 618.1,151.0 612.6,150.8" fill="#00c1ff" stroke="#505050" stroke-width="0.8"/><polygon points="619.4,147.7 625.1,148.4 623.7,151.6 618.1,151.0" fill="#00b2ff" stroke="#505050" stroke-width="0.8"/><polygon points="625.1,148.4 630.8,149.3 629.4,152.5 623.7,151.6" fill="#009cff" stroke="#505050" stroke-width="0.8"/><polygon points="630.8,149.3 636.3,150.2 635.0,153.3 629.4,152.5" fill="#0083ff" stroke="#505050" stroke-width="0.8"/><polygon points="636.3,150.2 641.7,151.0 640.5,154.2 635.0,153.3" fill="#006cff" stroke="#505050" stroke-width="0.8"/><polygon points="641.7,151.0 647.1,151.4 645.9,154.8 640.5,154.2" fill="#0059ff" stroke="#505050" stroke-width="0.8"/><polygon points="647.1,151.4 652.5,151.7 651.3,155.2 645.9,154.8" fill="#004cff" stroke="#505050" stroke-width="0.8"/><polygon points="652.5,151.7 658.0,151.7 656.7,155.5 651.3,155.2" fill="#0045ff" stroke="#505050" stroke-width="0.8"/><polygon points="658.0,151.7 663.4,151.7 662.1,155.6 656.7,155.5" fill="#0042ff" stroke="#505050" stroke-width="0.8"/><polygon points="663.4,151.7 668.8,151.8 667.5,155.8 662.1,155.6" fill="#003fff" stroke="#505050" stroke-width="0.8"/><polygon points="668.8,151.8 674.2,152.0 672.9,155.9 667.5,155.8" fill="#003cff" stroke="#505050" stroke-width="0.8"/><polygon points="674.2,152.0 679.6,152.2 678.3,156.0 672.9,155.9" fill="#0038ff" stroke="#505050" stroke-width="0.8"/><polygon points="679.6,152.2 685.0,152.3 683.7,156.0 678.3,156.0" fill="#0034ff" stroke="#505050" stroke-width="0.8"/><polygon points="685.0,152.3 690.4,152.3 689.2,155.9 683.7,156.0" fill="#0034ff" stroke="#505050" stroke-width="0.8"/><polygon points="690.4,152.3 695.8,152.1 694.6,155.5 689.2,155.9" fill="#0039ff" stroke="#505050" stroke-width="0.8"/><polygon points="695.8,152.1 701.3,151.6 700.0,155.0 694.6,155.5" fill="#0045ff" stroke="#505050" stroke-width="0.8"/><polygon points="701.3,151.6 706.7,150.9 705.4,154.4 700.0,155.0" fill="#0056ff" stroke="#505050" stroke-width="0.8"/><polygon points="706.7,150.9 712.1,150.2 710.8,153.8 705.4,154.4" fill="#0068ff" stroke="#505050" stroke-width="0.8"/><polygon points="712.1,150.2 717.5,149.7 716.2,153.5 710.8,153.8" fill="#0077ff" stroke="#505050" stroke-width="0.8"/><polygon points="717.5,149.7 722.9,149.5 721.6,153.5 716.2,153.5" fill="#007eff" stroke="#505050" stroke-width="0.8"/><polygon points="722.9,149.5 728.3,149.6 727.0,154.3 721.6,153.5" fill="#0079ff" stroke="#505050" stroke-width="0.8"/><polygon points="728.3,149.6 733.7,155.2 732.5,158.3 727.0,154.3" fill="#002eff" stroke="#505050" stroke-width="0.8"/><polygon points="733.7,155.2 739.1,151.1 737.9,156.2 732.5,158.3" fill="#0016ff" stroke="#505050" stroke-width="0.8"/><polygon points="739.1,151.1 745.3,146.3 743.3,153.8 737.9,156.2" fill="#0075ff" stroke="#505050" stroke-width="0.8"/><polygon points="745.3,146.3 750.0,151.6 751.0,142.9 743.3,153.8" fill="#00ff93" stroke="#00ff93" stroke-width="0.3"/><polygon points="750.0,151.6 755.5,149.3 758.1,135.6 751.0,142.9" fill="#17ff00" stroke="#17ff00" stroke-width="0.3"/><polygon points="586.3,155.0 591.7,154.0 590.4,156.7 583.4,151.8" fill="#0093ff" stroke="#505050" stroke-width="0.8"/><polygon points="591.7,154.0 597.2,156.3 595.1,154.3 590.4,156.7" fill="#0078ff" stroke="#505050" stroke-width="0.8"/><polygon points="597.2,156.3 602.6,158.3 601.3,161.6 595.1,154.3" fill="#0036ff" stroke="#505050" stroke-width="0.8"/><polygon points="602.6,158.3 607.4,151.6 606.7,157.0 601.3,161.6" fill="#0044ff" stroke="#505050" stroke-width="0.8"/><polygon points="607.4,151.6 612.6,150.8 611.3,154.4 606.7,157.0" fill="#00aeff" stroke="#505050" stroke-width="0.8"/><polygon points="612.6,150.8 618.1,151.0 616.8,154.5 611.3,154.4" fill="#00c4ff" stroke="#505050" stroke-width="0.8"/><polygon points="618.1,151.0 623.7,151.6 622.4,154.9 616.8,154.5" fill="#00b9ff" stroke="#505050" stroke-width="0.8"/><polygon points="623.7,151.6 629.4,152.5 628.0,155.6 622.4,154.9" fill="#00a8ff" stroke="#505050" stroke-width="0.8"/><polygon points="629.4,152.5 635.0,153.3 633.6,156.4 628.0,155.6" fill="#0091ff" stroke="#505050" stroke-width="0.8"/><polygon points="635.0,153.3 640.5,154.2 639.2,157.2 633.6,156.4" fill="#0079ff" stroke="#505050" stroke-width="0.8"/><polygon points="640.5,154.2 645.9,154.8 644.6,157.9 639.2,157.2" fill="#0064ff" stroke="#505050" stroke-width="0.8"/><polygon points="645.9,154.8 651.3,155.2 650.0,158.5 644.6,157.9" fill="#0054ff" stroke="#505050" stroke-width="0.8"/><polygon points="651.3,155.2 656.7,155.5 655.4,158.9 650.0,158.5" fill="#0048ff" stroke="#505050" stroke-width="0.8"/><polygon points="656.7,155.5 662.1,155.6 660.8,159.2 655.4,158.9" fill="#0040ff" stroke="#505050" stroke-width="0.8"/><polygon points="662.1,155.6 667.5,155.8 666.2,159.4 660.8,159.2" fill="#003bff" stroke="#505050" stroke-width="0.8"/><polygon points="667.5,155.8 672.9,155.9 671.7,159.5 666.2,159.4" fill="#0036ff" stroke="#505050" stroke-width="0.8"/><polygon points="672.9,155.9 678.3,156.0 677.1,159.5 671.7,159.5" fill="#0034ff" stroke="#505050" stroke-width="0.8"/><polygon points="678.3,156.0 683.7,156.0 682.5,159.5 677.1,159.5" fill="#0033ff" stroke="#505050" stroke-width="0.8"/><polygon points="683.7,156.0 689.2,155.9 687.9,159.2 682.5,159.5" fill="#0037ff" stroke="#505050" stroke-width="0.8"/><polygon points="689.2,155.9 694.6,155.5 693.3,158.8 687.9,159.2" fill="#003fff" stroke="#505050" stroke-width="0.8"/><polygon points="694.6,155.5 700.0,155.0 698.7,158.3 693.3,158.8" fill="#004bff" stroke="#505050" stroke-width="0.8"/><polygon points="700.0,155.0 705.4,154.4 704.1,157.8 698.7,158.3" fill="#005aff" stroke="#505050" stroke-width="0.8"/><polygon points="705.4,154.4 710.8,153.8 709.5,157.5 704.1,157.8" fill="#0069ff" stroke="#505050" stroke-width="0.8"/><polygon points="710.8,153.8 716.2,153.5 714.9,157.4 709.5,157.5" fill="#0072ff" stroke="#505050" stroke-width="0.8"/><polygon points="716.2,153.5 721.6,153.5 720.4,157.6 714.9,157.4" fill="#0074ff" stroke="#505050" stroke-width="0.8"/><polygon points="721.6,153.5 727.0,154.3 725.8,159.4 720.4,157.6" fill="#005fff" stroke="#505050" stroke-width="0.8"/><polygon points="727.0,154.3 732.5,158.3 731.2,159.7 725.8,159.4" fill="#002eff" stroke="#505050" stroke-width="0.8"/><polygon points="732.5,158.3 737.9,156.2 736.6,160.4 731.2,159.7" fill="#001aff" stroke="#505050" stroke-width="0.8"/><polygon points="737.9,156.2 743.3,153.8 742.1,156.5 736.6,160.4" fill="#0050ff" stroke="#505050" stroke-width="0.8"/><polygon points="743.3,153.8 751.0,142.9 748.6,151.5 742.1,156.5" fill="#00ff8c" stroke="#00ff8c" stroke-width="0.3"/><polygon points="583.4,151.8 590.4,156.7 589.2,161.5 575.5,135.5" fill="#3aff00" stroke="#3aff00" stroke-width="0.3"/><polygon points="590.4,156.7 595.1,154.3 594.6,163.1 589.2,161.5" fill="#0079ff" stroke="#505050" stroke-width="0.8"/><polygon points="595.1,154.3 601.3,161.6 600.0,163.7 594.6,163.1" fill="#0046ff" stroke="#505050" stroke-width="0.8"/><polygon points="601.3,161.6 606.7,157.0 605.4,165.6 600.0,163.7" fill="#0021ff" stroke="#505050" stroke-width="0.8"/><polygon points="606.7,157.0 611.3,154.4 610.4,159.1 605.4,165.6" fill="#0075ff" stroke="#505050" stroke-width="0.8"/><polygon points="611.3,154.4 616.8,154.5 615.6,158.1 610.4,159.1" fill="#00bcff" stroke="#505050" stroke-width="0.8"/><polygon points="616.8,154.5 622.4,154.9 621.1,158.4 615.6,158.1" fill="#00beff" stroke="#505050" stroke-width="0.8"/><polygon points="622.4,154.9 628.0,155.6 626.6,158.8 621.1,158.4" fill="#00b0ff" stroke="#505050" stroke-width="0.8"/><polygon points="628.0,155.6 633.6,156.4 632.3,159.5 626.6,158.8" fill="#009eff" stroke="#505050" stroke-width="0.8"/><polygon points="633.6,156.4 639.2,157.2 637.9,160.2 632.3,159.5" fill="#0088ff" stroke="#505050" stroke-width="0.8"/><polygon points="639.2,157.2 644.6,157.9 643.3,161.0 637.9,160.2" fill="#0073ff" stroke="#505050" stroke-width="0.8"/><polygon points="644.6,157.9 650.0,158.5 648.7,161.6 643.3,161.0" fill="#0061ff" stroke="#505050" stroke-width="0.8"/><polygon points="650.0,158.5 655.4,158.9 654.1,162.1 648.7,161.6" fill="#0052ff" stroke="#505050" stroke-width="0.8"/><polygon points="655.4,158.9 660.8,159.2 659.6,162.4 654.1,162.1" fill="#0047ff" stroke="#505050" stroke-width="0.8"/><polygon points="660.8,159.2 666.2,159.4 665.0,162.7 659.6,162.4" fill="#0040ff" stroke="#505050" stroke-width="0.8"/><polygon points="666.2,159.4 671.7,159.5 670.4,162.8 665.0,162.7" fill="#003bff" stroke="#505050" stroke-width="0.8"/><polygon points="671.7,159.5 677.1,159.5 675.8,162.8 670.4,162.8" fill="#0039ff" stroke="#505050" stroke-width="0.8"/><polygon points="677.1,159.5 682.5,159.5 681.2,162.7 675.8,162.8" fill="#003aff" stroke="#505050" stroke-width="0.8"/><polygon points="682.5,159.5 687.9,159.2 686.6,162.4 681.2,162.7" fill="#003fff" stroke="#505050" stroke-width="0.8"/><polygon points="687.9,159.2 693.3,158.8 692.0,162.1 686.6,162.4" fill="#0047ff" stroke="#505050" stroke-width="0.8"/><polygon points="693.3,158.8 698.7,158.3 697.4,161.7 692.0,162.1" fill="#0053ff" stroke="#505050" stroke-width="0.8"/><polygon points="698.7,158.3 704.1,157.8 702.9,161.4 697.4,161.7" fill="#005eff" stroke="#505050" stroke-width="0.8"/><polygon points="704.1,157.8 709.5,157.5 708.3,161.3 702.9,161.4" fill="#0067ff" stroke="#505050" stroke-width="0.8"/><polygon points="709.5,157.5 714.9,157.4 713.7,161.4 708.3,161.3" fill="#006aff" stroke="#505050" stroke-width="0.8"/><polygon points="714.9,157.4 720.4,157.6 719.1,162.3 713.7,161.4" fill="#0063ff" stroke="#505050" stroke-width="0.8"/><polygon points="720.4,157.6 725.8,159.4 724.5,165.5 719.1,162.3" fill="#0037ff" stroke="#505050" stroke-width="0.8"/><polygon points="725.8,159.4 731.2,159.7 729.9,163.5 724.5,165.5" fill="#0020ff" stroke="#505050" stroke-width="0.8"/><polygon points="731.2,159.7 736.6,160.4 736.0,157.3 729.9,163.5" fill="#0053ff" stroke="#505050" stroke-width="0.8"/><polygon points="736.6,160.4 742.1,156.5 742.3,152.9 736.0,157.3" fill="#00ffd1" stroke="#00ffd1" stroke-width="0.3"/><polygon points="742.1,156.5 748.6,151.5 746.4,159.5 742.3,152.9" fill="#00ffc5" stroke="#00ffc5" stroke-width="0.3"/><polygon points="575.5,135.5 589.2,161.5 587.9,164.3 582.0,162.5" fill="#33ff00" stroke="#33ff00" stroke-width="0.3"/><polygon points="589.2,161.5 594.6,163.1 593.3,164.0 587.9,164.3" fill="#0064ff" stroke="#505050" stroke-width="0.8"/><polygon points="594.6,163.1 600.0,163.7 598.8,166.2 593.3,164.0" fill="#0047ff" stroke="#505050" stroke-width="0.8"/><polygon points="600.0,163.7 605.4,165.6 604.2,165.4 598.8,166.2" fill="#002bff" stroke="#505050" stroke-width="0.8"/><polygon points="605.4,165.6 610.4,159.1 609.6,169.8 604.2,165.4" fill="#0032ff" stroke="#505050" stroke-width="0.8"/><polygon points="610.4,159.1 615.6,158.1 614.4,161.9 609.6,169.8" fill="#0080ff" stroke="#505050" stroke-width="0.8"/><polygon points="615.6,158.1 621.1,158.4 619.8,162.0 614.4,161.9" fill="#00bdff" stroke="#505050" stroke-width="0.8"/><polygon points="621.1,158.4 626.6,158.8 625.4,162.3 619.8,162.0" fill="#00b5ff" stroke="#505050" stroke-width="0.8"/><polygon points="626.6,158.8 632.3,159.5 630.9,162.8 625.4,162.3" fill="#00a7ff" stroke="#505050" stroke-width="0.8"/><polygon points="632.3,159.5 637.9,160.2 636.5,163.3 630.9,162.8" fill="#0096ff" stroke="#505050" stroke-width="0.8"/><polygon points="637.9,160.2 643.3,161.0 642.0,164.0 636.5,163.3" fill="#0083ff" stroke="#505050" stroke-width="0.8"/><polygon points="643.3,161.0 648.7,161.6 647.5,164.6 642.0,164.0" fill="#0071ff" stroke="#505050" stroke-width="0.8"/><polygon points="648.7,161.6 654.1,162.1 652.9,165.1 647.5,164.6" fill="#0061ff" stroke="#505050" stroke-width="0.8"/><polygon points="654.1,162.1 659.6,162.4 658.3,165.5 652.9,165.1" fill="#0055ff" stroke="#505050" stroke-width="0.8"/><polygon points="659.6,162.4 665.0,162.7 663.7,165.7 658.3,165.5" fill="#004cff" stroke="#505050" stroke-width="0.8"/><polygon points="665.0,162.7 670.4,162.8 669.1,165.9 663.7,165.7" fill="#0047ff" stroke="#505050" stroke-width="0.8"/><polygon points="670.4,162.8 675.8,162.8 674.5,165.9 669.1,165.9" fill="#0044ff" stroke="#505050" stroke-width="0.8"/><polygon points="675.8,162.8 681.2,162.7 679.9,165.8 674.5,165.9" fill="#0046ff" stroke="#505050" stroke-width="0.8"/><polygon points="681.2,162.7 686.6,162.4 685.3,165.6 679.9,165.8" fill="#004aff" stroke="#505050" stroke-width="0.8"/><polygon points="686.6,162.4 692.0,162.1 690.8,165.4 685.3,165.6" fill="#0051ff" stroke="#505050" stroke-width="0.8"/><polygon points="692.0,162.1 697.4,161.7 696.2,165.3 690.8,165.4" fill="#0059ff" stroke="#505050" stroke-width="0.8"/><polygon points="697.4,161.7 702.9,161.4 701.6,165.2 696.2,165.3" fill="#005fff" stroke="#505050" stroke-width="0.8"/><polygon points="702.9,161.4 708.3,161.3 707.0,165.3 701.6,165.2" fill="#0061ff" stroke="#505050" stroke-width="0.8"/><polygon points="708.3,161.3 713.7,161.4 712.4,165.7 707.0,165.3" fill="#005eff" stroke="#505050" stroke-width="0.8"/><polygon points="713.7,161.4 719.1,162.3 717.8,169.5 712.4,165.7" fill="#0039ff" stroke="#505050" stroke-width="0.8"/><polygon points="719.1,162.3 724.5,165.5 723.2,169.1 717.8,169.5" fill="#0004ff" stroke="#505050" stroke-width="0.8"/><polygon points="724.5,165.5 729.9,163.5 728.6,165.8 723.2,169.1" fill="#0016ff" stroke="#505050" stroke-width="0.8"/><polygon points="729.9,163.5 736.0,157.3 734.2,163.4 728.6,165.8" fill="#0079ff" stroke="#505050" stroke-width="0.8"/><polygon points="736.0,157.3 742.3,152.9 741.5,154.2 734.2,163.4" fill="#00ff8a" stroke="#00ff8a" stroke-width="0.3"/><polygon points="742.3,152.9 746.4,159.5 748.0,148.8 741.5,154.2" fill="#00ff08" stroke="#00ff08" stroke-width="0.3"/><polygon points="587.9,164.3 593.3,164.0 591.7,166.3 585.1,162.5" fill="#00acff" stroke="#505050" stroke-width="0.8"/><polygon points="593.3,164.0 598.8,166.2 595.4,160.6 591.7,166.3" fill="#00ffe0" stroke="#00ffe0" stroke-width="0.3"/><polygon points="598.8,166.2 604.2,165.4 602.9,171.6 595.4,160.6" fill="#00ffec" stroke="#00ffec" stroke-width="0.3"/><polygon points="604.2,165.4 609.6,169.8 608.3,172.7 602.9,171.6" fill="#000dff" stroke="#505050" stroke-width="0.8"/><polygon points="609.6,169.8 614.4,161.9 613.7,168.2 608.3,172.7" fill="#003eff" stroke="#505050" stroke-width="0.8"/><polygon points="614.4,161.9 619.8,162.0 618.7,165.8 613.7,168.2" fill="#00a6ff" stroke="#505050" stroke-width="0.8"/><polygon points="619.8,162.0 625.4,162.3 624.1,165.9 618.7,165.8" fill="#00b4ff" stroke="#505050" stroke-width="0.8"/><polygon points="625.4,162.3 630.9,162.8 629.6,166.2 624.1,165.9" fill="#00acff" stroke="#505050" stroke-width="0.8"/><polygon points="630.9,162.8 636.5,163.3 635.2,166.6 629.6,166.2" fill="#009fff" stroke="#505050" stroke-width="0.8"/><polygon points="636.5,163.3 642.0,164.0 640.7,167.1 635.2,166.6" fill="#0090ff" stroke="#505050" stroke-width="0.8"/><polygon points="642.0,164.0 647.5,164.6 646.2,167.6 640.7,167.1" fill="#0080ff" stroke="#505050" stroke-width="0.8"/><polygon points="647.5,164.6 652.9,165.1 651.6,168.1 646.2,167.6" fill="#0072ff" stroke="#505050" stroke-width="0.8"/><polygon points="652.9,165.1 658.3,165.5 657.0,168.5 651.6,168.1" fill="#0065ff" stroke="#505050" stroke-width="0.8"/><polygon points="658.3,165.5 663.7,165.7 662.4,168.8 657.0,168.5" fill="#005cff" stroke="#505050" stroke-width="0.8"/><polygon points="663.7,165.7 669.1,165.9 667.8,169.0 662.4,168.8" fill="#0056ff" stroke="#505050" stroke-width="0.8"/><polygon points="669.1,165.9 674.5,165.9 673.3,169.0 667.8,169.0" fill="#0052ff" stroke="#505050" stroke-width="0.8"/><polygon points="674.5,165.9 679.9,165.8 678.7,169.0 673.3,169.0" fill="#0052ff" stroke="#505050" stroke-width="0.8"/><polygon points="679.9,165.8 685.3,165.6 684.1,169.0 678.7,169.0" fill="#0054ff" stroke="#505050" stroke-width="0.8"/><polygon points="685.3,165.6 690.8,165.4 689.5,169.0 684.1,169.0" fill="#0057ff" stroke="#505050" stroke-width="0.8"/><polygon points="690.8,165.4 696.2,165.3 694.9,169.0 689.5,169.0" fill="#005aff" stroke="#505050" stroke-width="0.8"/><polygon points="696.2,165.3 701.6,165.2 700.3,169.2 694.9,169.0" fill="#005aff" stroke="#505050" stroke-width="0.8"/><polygon points="701.6,165.2 707.0,165.3 705.7,169.5 700.3,169.2" fill="#0056ff" stroke="#505050" stroke-width="0.8"/><polygon points="707.0,165.3 712.4,165.7 711.1,171.1 705.7,169.5" fill="#0045ff" stroke="#505050" stroke-width="0.8"/><polygon points="712.4,165.7 717.8,169.5 716.6,170.4 711.1,171.1" fill="#0021ff" stroke="#505050" stroke-width="0.8"/><polygon points="717.8,169.5 723.2,169.1 722.2,166.1 716.6,170.4" fill="#002dff" stroke="#505050" stroke-width="0.8"/><polygon points="723.2,169.1 728.6,165.8 727.4,171.2 722.2,166.1" fill="#0042ff" stroke="#505050" stroke-width="0.8"/><polygon points="728.6,165.8 734.2,163.4 733.2,165.5 727.4,171.2" fill="#006eff" stroke="#505050" stroke-width="0.8"/><polygon points="734.2,163.4 741.5,154.2 739.4,161.4 733.2,165.5" fill="#00ff8e" stroke="#00ff8e" stroke-width="0.3"/><polygon points="591.7,166.3 595.4,160.6 596.2,173.2 582.2,142.7" fill="#84ff00" stroke="#84ff00" stroke-width="0.3"/><polygon points="595.4,160.6 602.9,171.6 601.6,174.4 596.2,173.2" fill="#00ffef" stroke="#00ffef" stroke-width="0.3"/><polygon points="602.9,171.6 608.3,172.7 607.0,174.4 601.6,174.4" fill="#0013ff" stroke="#505050" stroke-width="0.8"/><polygon points="608.3,172.7 613.7,168.2 612.5,174.9 607.0,174.4" fill="#0027ff" stroke="#505050" stroke-width="0.8"/><polygon points="613.7,168.2 618.7,165.8 617.9,172.1 612.5,174.9" fill="#0069ff" stroke="#505050" stroke-width="0.8"/><polygon points="618.7,165.8 624.1,165.9 623.0,169.9 617.9,172.1" fill="#009dff" stroke="#505050" stroke-width="0.8"/><polygon points="624.1,165.9 629.6,166.2 628.4,170.0 623.0,169.9" fill="#00a8ff" stroke="#505050" stroke-width="0.8"/><polygon points="629.6,166.2 635.2,166.6 633.9,170.2 628.4,170.0" fill="#00a1ff" stroke="#505050" stroke-width="0.8"/><polygon points="635.2,166.6 640.7,167.1 639.4,170.6 633.9,170.2" fill="#0096ff" stroke="#505050" stroke-width="0.8"/><polygon points="640.7,167.1 646.2,167.6 644.9,171.0 639.4,170.6" fill="#008aff" stroke="#505050" stroke-width="0.8"/><polygon points="646.2,167.6 651.6,168.1 650.3,171.4 644.9,171.0" fill="#007dff" stroke="#505050" stroke-width="0.8"/><polygon points="651.6,168.1 657.0,168.5 655.8,171.7 650.3,171.4" fill="#0072ff" stroke="#505050" stroke-width="0.8"/><polygon points="657.0,168.5 662.4,168.8 661.2,172.0 655.8,171.7" fill="#0069ff" stroke="#505050" stroke-width="0.8"/><polygon points="662.4,168.8 667.8,169.0 666.6,172.2 661.2,172.0" fill="#0062ff" stroke="#505050" stroke-width="0.8"/><polygon points="667.8,169.0 673.3,169.0 672.0,172.4 666.6,172.2" fill="#005dff" stroke="#505050" stroke-width="0.8"/><polygon points="673.3,169.0 678.7,169.0 677.4,172.5 672.0,172.4" fill="#005aff" stroke="#505050" stroke-width="0.8"/><polygon points="678.7,169.0 684.1,169.0 682.8,172.7 677.4,172.5" fill="#0059ff" stroke="#505050" stroke-width="0.8"/><polygon points="684.1,169.0 689.5,169.0 688.2,172.8 682.8,172.7" fill="#0057ff" stroke="#505050" stroke-width="0.8"/><polygon points="689.5,169.0 694.9,169.0 693.6,173.1 688.2,172.8" fill="#0054ff" stroke="#505050" stroke-width="0.8"/><polygon points="694.9,169.0 700.3,169.2 699.0,173.5 693.6,173.1" fill="#004eff" stroke="#505050" stroke-width="0.8"/><polygon points="700.3,169.2 705.7,169.5 704.5,174.9 699.0,173.5" fill="#003dff" stroke="#505050" stroke-width="0.8"/><polygon points="705.7,169.5 711.1,171.1 709.9,176.6 704.5,174.9" fill="#001aff" stroke="#505050" stroke-width="0.8"/><polygon points="711.1,171.1 716.6,170.4 715.3,174.1 709.9,176.6" fill="#0019ff" stroke="#505050" stroke-width="0.8"/><polygon points="716.6,170.4 722.2,166.1 721.5,166.2 715.3,174.1" fill="#0086ff" stroke="#505050" stroke-width="0.8"/><polygon points="722.2,166.1 727.4,171.2 727.8,161.3 721.5,166.2" fill="#00ff97" stroke="#00ff97" stroke-width="0.3"/><polygon points="727.4,171.2 733.2,165.5 731.5,172.1 727.8,161.3" fill="#00ffa0" stroke="#00ffa0" stroke-width="0.3"/><polygon points="582.2,142.7 596.2,173.2 595.0,175.8 589.3,174.1" fill="#74ff00" stroke="#74ff00" stroke-width="0.3"/><polygon points="596.2,173.2 601.6,174.4 600.3,174.5 595.0,175.8" fill="#0057ff" stroke="#505050" stroke-width="0.8"/><polygon points="601.6,174.4 607.0,174.4 605.1,172.4 600.3,174.5" fill="#0067ff" stroke="#505050" stroke-width="0.8"/><polygon points="607.0,174.4 612.5,174.9 611.2,175.5 605.1,172.4" fill="#005bff" stroke="#505050" stroke-width="0.8"/><polygon points="612.5,174.9 617.9,172.1 616.6,179.8 611.2,175.5" fill="#0037ff" stroke="#505050" stroke-width="0.8"/><polygon points="617.9,172.1 623.0,169.9 622.0,180.6 616.6,179.8" fill="#0037ff" stroke="#505050" stroke-width="0.8"/><polygon points="623.0,169.9 628.4,170.0 627.4,174.8 622.0,180.6" fill="#0069ff" stroke="#505050" stroke-width="0.8"/><polygon points="628.4,170.0 633.9,170.2 632.7,174.2 627.4,174.8" fill="#0094ff" stroke="#505050" stroke-width="0.8"/><polygon points="633.9,170.2 639.4,170.6 638.2,174.4 632.7,174.2" fill="#0093ff" stroke="#505050" stroke-width="0.8"/><polygon points="639.4,170.6 644.9,171.0 643.6,174.7 638.2,174.4" fill="#008bff" stroke="#505050" stroke-width="0.8"/><polygon points="644.9,171.0 650.3,171.4 649.1,175.0 643.6,174.7" fill="#0081ff" stroke="#505050" stroke-width="0.8"/><polygon points="650.3,171.4 655.8,171.7 654.5,175.3 649.1,175.0" fill="#0077ff" stroke="#505050" stroke-width="0.8"/><polygon points="655.8,171.7 661.2,172.0 659.9,175.6 654.5,175.3" fill="#006eff" stroke="#505050" stroke-width="0.8"/><polygon points="661.2,172.0 666.6,172.2 665.3,175.8 659.9,175.6" fill="#0067ff" stroke="#505050" stroke-width="0.8"/><polygon points="666.6,172.2 672.0,172.4 670.7,176.1 665.3,175.8" fill="#0060ff" stroke="#505050" stroke-width="0.8"/><polygon points="672.0,172.4 677.4,172.5 676.1,176.4 670.7,176.1" fill="#005bff" stroke="#505050" stroke-width="0.8"/><polygon points="677.4,172.5 682.8,172.7 681.5,176.6 676.1,176.4" fill="#0055ff" stroke="#505050" stroke-width="0.8"/><polygon points="682.8,172.7 688.2,172.8 687.0,177.0 681.5,176.6" fill="#004eff" stroke="#505050" stroke-width="0.8"/><polygon points="688.2,172.8 693.6,173.1 692.4,177.8 687.0,177.0" fill="#0043ff" stroke="#505050" stroke-width="0.8"/><polygon points="693.6,173.1 699.0,173.5 697.8,180.6 692.4,177.8" fill="#0025ff" stroke="#505050" stroke-width="0.8"/><polygon points="699.0,173.5 704.5,174.9 703.2,177.6 697.8,180.6" fill="#0019ff" stroke="#505050" stroke-width="0.8"/><polygon points="704.5,174.9 709.9,176.6 708.6,179.5 703.2,177.6" fill="#000bff" stroke="#505050" stroke-width="0.8"/><polygon points="709.9,176.6 715.3,174.1 714.0,178.7 708.6,179.5" fill="#0009ff" stroke="#505050" stroke-width="0.8"/><polygon points="715.3,174.1 721.5,166.2 719.5,174.0 714.0,178.7" fill="#0079ff" stroke="#505050" stroke-width="0.8"/><polygon points="721.5,166.2 727.8,161.3 727.1,160.9 719.5,174.0" fill="#00ff28" stroke="#00ff28" stroke-width="0.3"/><polygon points="727.8,161.3 731.5,172.1 733.9,153.9 727.1,160.9" fill="#81ff00" stroke="#81ff00" stroke-width="0.3"/><polygon points="595.0,175.8 600.3,174.5 596.4,168.2 592.3,173.3" fill="#00ffa1" stroke="#00ffa1" stroke-width="0.3"/><polygon points="600.3,174.5 605.1,172.4 603.0,172.6 596.4,168.2" fill="#00ff9a" stroke="#00ff9a" stroke-width="0.3"/><polygon points="605.1,172.4 611.2,175.5 609.9,181.2 603.0,172.6" fill="#00a1ff" stroke="#505050" stroke-width="0.8"/><polygon points="611.2,175.5 616.6,179.8 615.3,182.3 609.9,181.2" fill="#0028ff" stroke="#505050" stroke-width="0.8"/><polygon points="616.6,179.8 622.0,180.6 620.7,182.7 615.3,182.3" fill="#0000fa" stroke="#505050" stroke-width="0.8"/><polygon points="622.0,180.6 627.4,174.8 626.2,182.7 620.7,182.7" fill="#001bff" stroke="#505050" stroke-width="0.8"/><polygon points="627.4,174.8 632.7,174.2 631.6,180.2 626.2,182.7" fill="#005aff" stroke="#505050" stroke-width="0.8"/><polygon points="632.7,174.2 638.2,174.4 637.0,179.2 631.6,180.2" fill="#0075ff" stroke="#505050" stroke-width="0.8"/><polygon points="638.2,174.4 643.6,174.7 642.4,178.7 637.0,179.2" fill="#007cff" stroke="#505050" stroke-width="0.8"/><polygon points="643.6,174.7 649.1,175.0 647.8,179.0 642.4,178.7" fill="#007aff" stroke="#505050" stroke-width="0.8"/><polygon points="649.1,175.0 654.5,175.3 653.2,179.3 647.8,179.0" fill="#0072ff" stroke="#505050" stroke-width="0.8"/><polygon points="654.5,175.3 659.9,175.6 658.6,179.6 653.2,179.3" fill="#0069ff" stroke="#505050" stroke-width="0.8"/><polygon points="659.9,175.6 665.3,175.8 664.0,179.9 658.6,179.6" fill="#0061ff" stroke="#505050" stroke-width="0.8"/><polygon points="665.3,175.8 670.7,176.1 669.4,180.2 664.0,179.9" fill="#0059ff" stroke="#505050" stroke-width="0.8"/><polygon points="670.7,176.1 676.1,176.4 674.9,180.6 669.4,180.2" fill="#0050ff" stroke="#505050" stroke-width="0.8"/><polygon points="676.1,176.4 681.5,176.6 680.3,181.4 674.9,180.6" fill="#0044ff" stroke="#505050" stroke-width="0.8"/><polygon points="681.5,176.6 687.0,177.0 685.7,182.3 680.3,181.4" fill="#0033ff" stroke="#505050" stroke-width="0.8"/><polygon points="687.0,177.0 692.4,177.8 691.1,183.9 685.7,182.3" fill="#0019ff" stroke="#505050" stroke-width="0.8"/><polygon points="692.4,177.8 697.8,180.6 696.5,182.6 691.1,183.9" fill="#0000fd" stroke="#505050" stroke-width="0.8"/><polygon points="697.8,180.6 703.2,177.6 702.1,177.1 696.5,182.6" fill="#002fff" stroke="#505050" stroke-width="0.8"/><polygon points="703.2,177.6 708.6,179.5 707.9,173.5 702.1,177.1" fill="#0077ff" stroke="#505050" stroke-width="0.8"/><polygon points="708.6,179.5 714.0,178.7 712.7,181.5 707.9,173.5" fill="#0050ff" stroke="#505050" stroke-width="0.8"/><polygon points="714.0,178.7 719.5,174.0 718.2,180.7 712.7,181.5" fill="#0044ff" stroke="#505050" stroke-width="0.8"/><polygon points="719.5,174.0 727.1,160.9 724.5,172.4 718.2,180.7" fill="#00ff3b" stroke="#00ff3b" stroke-width="0.3"/><polygon points="596.4,168.2 603.0,172.6 603.2,182.4 593.1,163.8" fill="#00ff08" stroke="#00ff08" stroke-width="0.3"/><polygon points="603.0,172.6 609.9,181.2 608.6,183.5 603.2,182.4" fill="#0087ff" stroke="#505050" stroke-width="0.8"/><polygon points="609.9,181.2 615.3,182.3 614.1,183.3 608.6,183.5" fill="#003dff" stroke="#505050" stroke-width="0.8"/><polygon points="615.3,182.3 620.7,182.7 618.8,179.0 614.1,183.3" fill="#0053ff" stroke="#505050" stroke-width="0.8"/><polygon points="620.7,182.7 626.2,182.7 624.9,186.3 618.8,179.0" fill="#003bff" stroke="#505050" stroke-width="0.8"/><polygon points="626.2,182.7 631.6,180.2 630.3,186.3 624.9,186.3" fill="#0019ff" stroke="#505050" stroke-width="0.8"/><polygon points="631.6,180.2 637.0,179.2 635.7,186.3 630.3,186.3" fill="#0031ff" stroke="#505050" stroke-width="0.8"/><polygon points="637.0,179.2 642.4,178.7 641.1,187.7 635.7,186.3" fill="#0031ff" stroke="#505050" stroke-width="0.8"/><polygon points="642.4,178.7 647.8,179.0 646.5,184.8 641.1,187.7" fill="#003eff" stroke="#505050" stroke-width="0.8"/><polygon points="647.8,179.0 653.2,179.3 651.9,184.7 646.5,184.8" fill="#004fff" stroke="#505050" stroke-width="0.8"/><polygon points="653.2,179.3 658.6,179.6 657.4,184.9 651.9,184.7" fill="#004aff" stroke="#505050" stroke-width="0.8"/><polygon points="658.6,179.6 664.0,179.9 662.8,185.2 657.4,184.9" fill="#0043ff" stroke="#505050" stroke-width="0.8"/><polygon points="664.0,179.9 669.4,180.2 668.2,185.7 662.8,185.2" fill="#0038ff" stroke="#505050" stroke-width="0.8"/><polygon points="669.4,180.2 674.9,180.6 673.6,187.2 668.2,185.7" fill="#0026ff" stroke="#505050" stroke-width="0.8"/><polygon points="674.9,180.6 680.3,181.4 679.0,187.5 673.6,187.2" fill="#0010ff" stroke="#505050" stroke-width="0.8"/><polygon points="680.3,181.4 685.7,182.3 684.4,186.4 679.0,187.5" fill="#0009ff" stroke="#505050" stroke-width="0.8"/><polygon points="685.7,182.3 691.1,183.9 689.8,183.3 684.4,186.4" fill="#0015ff" stroke="#505050" stroke-width="0.8"/><polygon points="691.1,183.9 696.5,182.6 695.2,185.8 689.8,183.3" fill="#0018ff" stroke="#505050" stroke-width="0.8"/><polygon points="696.5,182.6 702.1,177.1 700.6,183.0 695.2,185.8" fill="#004aff" stroke="#505050" stroke-width="0.8"/><polygon points="702.1,177.1 707.9,173.5 707.2,172.4 700.6,183.0" fill="#00ff99" stroke="#00ff99" stroke-width="0.3"/><polygon points="707.9,173.5 712.7,181.5 713.2,168.2 707.2,172.4" fill="#00ff33" stroke="#00ff33" stroke-width="0.3"/><polygon points="712.7,181.5 718.2,180.7 716.9,182.9 713.2,168.2" fill="#00ff52" stroke="#00ff52" stroke-width="0.3"/><polygon points="603.2,182.4 608.6,183.5 606.9,183.5 595.5,158.6" fill="#ff8000" stroke="#ff8000" stroke-width="0.3"/><polygon points="608.6,183.5 614.1,183.3 612.6,184.9 606.9,183.5" fill="#0080ff" stroke="#505050" stroke-width="0.8"/><polygon points="614.1,183.3 618.8,179.0 616.5,177.1 612.6,184.9" fill="#00ffc0" stroke="#00ffc0" stroke-width="0.3"/><polygon points="618.8,179.0 624.9,186.3 623.6,188.6 616.5,177.1" fill="#00ffcc" stroke="#00ffcc" stroke-width="0.3"/><polygon points="624.9,186.3 630.3,186.3 629.0,187.7 623.6,188.6" fill="#0020ff" stroke="#505050" stroke-width="0.8"/><polygon points="630.3,186.3 635.7,186.3 634.4,186.2 629.0,187.7" fill="#0031ff" stroke="#505050" stroke-width="0.8"/><polygon points="635.7,186.3 641.1,187.7 639.8,190.1 634.4,186.2" fill="#0015ff" stroke="#505050" stroke-width="0.8"/><polygon points="641.1,187.7 646.5,184.8 645.3,187.8 639.8,190.1" fill="#0015ff" stroke="#505050" stroke-width="0.8"/><polygon points="646.5,184.8 651.9,184.7 650.7,190.7 645.3,187.8" fill="#0026ff" stroke="#505050" stroke-width="0.8"/><polygon points="651.9,184.7 657.4,184.9 656.1,189.9 650.7,190.7" fill="#0016ff" stroke="#505050" stroke-width="0.8"/><polygon points="657.4,184.9 662.8,185.2 661.5,187.7 656.1,189.9" fill="#0028ff" stroke="#505050" stroke-width="0.8"/><polygon points="662.8,185.2 668.2,185.7 666.9,190.4 661.5,187.7" fill="#001fff" stroke="#505050" stroke-width="0.8"/><polygon points="668.2,185.7 673.6,187.2 672.3,185.9 666.9,190.4" fill="#001dff" stroke="#505050" stroke-width="0.8"/><polygon points="673.6,187.2 679.0,187.5 677.7,190.1 672.3,185.9" fill="#0012ff" stroke="#505050" stroke-width="0.8"/><polygon points="679.0,187.5 684.4,186.4 683.1,188.1 677.7,190.1" fill="#0008ff" stroke="#505050" stroke-width="0.8"/><polygon points="684.4,186.4 689.8,183.3 688.7,183.2 683.1,188.1" fill="#0057ff" stroke="#505050" stroke-width="0.8"/><polygon points="689.8,183.3 695.2,185.8 694.0,188.1 688.7,183.2" fill="#005bff" stroke="#505050" stroke-width="0.8"/><polygon points="695.2,185.8 700.6,183.0 699.5,184.5 694.0,188.1" fill="#0054ff" stroke="#505050" stroke-width="0.8"/><polygon points="700.6,183.0 707.2,172.4 705.1,183.1 699.5,184.5" fill="#00ff9e" stroke="#00ff9e" stroke-width="0.3"/><polygon points="707.2,172.4 713.2,168.2 712.8,164.3 705.1,183.1" fill="#8dff00" stroke="#8dff00" stroke-width="0.3"/><polygon points="606.9,183.5 612.6,184.9 606.2,163.5 605.1,184.7" fill="#7aff00" stroke="#7aff00" stroke-width="0.3"/><polygon points="612.6,184.9 616.5,177.1 616.9,190.0 606.2,163.5" fill="#7cff00" stroke="#7cff00" stroke-width="0.3"/><polygon points="616.5,177.1 623.6,188.6 622.1,187.9 616.9,190.0" fill="#00ffc9" stroke="#00ffc9" stroke-width="0.3"/><polygon points="623.6,188.6 629.0,187.7 626.9,184.0 622.1,187.9" fill="#008aff" stroke="#505050" stroke-width="0.8"/><polygon points="629.0,187.7 634.4,186.2 632.6,185.5 626.9,184.0" fill="#00acff" stroke="#505050" stroke-width="0.8"/><polygon points="634.4,186.2 639.8,190.1 638.6,190.6 632.6,185.5" fill="#006dff" stroke="#505050" stroke-width="0.8"/><polygon points="639.8,190.1 645.3,187.8 643.7,186.8 638.6,190.6" fill="#0058ff" stroke="#505050" stroke-width="0.8"/><polygon points="645.3,187.8 650.7,190.7 649.4,193.1 643.7,186.8" fill="#0042ff" stroke="#505050" stroke-width="0.8"/><polygon points="650.7,190.7 656.1,189.9 654.8,191.2 649.4,193.1" fill="#0014ff" stroke="#505050" stroke-width="0.8"/><polygon points="656.1,189.9 661.5,187.7 660.1,185.8 654.8,191.2" fill="#005dff" stroke="#505050" stroke-width="0.8"/><polygon points="661.5,187.7 666.9,190.4 665.6,192.6 660.1,185.8" fill="#0050ff" stroke="#505050" stroke-width="0.8"/><polygon points="666.9,190.4 672.3,185.9 671.0,190.8 665.6,192.6" fill="#0038ff" stroke="#505050" stroke-width="0.8"/><polygon points="672.3,185.9 677.7,190.1 676.5,192.6 671.0,190.8" fill="#003aff" stroke="#505050" stroke-width="0.8"/><polygon points="677.7,190.1 683.1,188.1 681.9,192.2 676.5,192.6" fill="#0021ff" stroke="#505050" stroke-width="0.8"/><polygon points="683.1,188.1 688.7,183.2 687.3,188.7 681.9,192.2" fill="#006eff" stroke="#505050" stroke-width="0.8"/><polygon points="688.7,183.2 694.0,188.1 693.3,180.5 687.3,188.7" fill="#00ffb7" stroke="#00ffb7" stroke-width="0.3"/><polygon points="694.0,188.1 699.5,184.5 698.2,188.6 693.3,180.5" fill="#00ffb9" stroke="#00ffb9" stroke-width="0.3"/><polygon points="699.5,184.5 705.1,183.1 704.0,184.1 698.2,188.6" fill="#00c3ff" stroke="#505050" stroke-width="0.8"/><polygon points="616.9,190.0 622.1,187.9 620.1,187.0 610.6,165.8" fill="#ff9900" stroke="#ff9900" stroke-width="0.3"/><polygon points="622.1,187.9 626.9,184.0 624.9,182.4 620.1,187.0" fill="#00ff89" stroke="#00ff89" stroke-width="0.3"/><polygon points="626.9,184.0 632.6,185.5 631.9,194.0 624.9,182.4" fill="#00ff92" stroke="#00ff92" stroke-width="0.3"/><polygon points="632.6,185.5 638.6,190.6 637.2,191.8 631.9,194.0" fill="#008fff" stroke="#505050" stroke-width="0.8"/><polygon points="638.6,190.6 643.7,186.8 642.0,185.4 637.2,191.8" fill="#00ffd2" stroke="#00ffd2" stroke-width="0.3"/><polygon points="643.7,186.8 649.4,193.1 648.1,195.4 642.0,185.4" fill="#00ffdd" stroke="#00ffdd" stroke-width="0.3"/><polygon points="649.4,193.1 654.8,191.2 653.5,192.2 648.1,195.4" fill="#0048ff" stroke="#505050" stroke-width="0.8"/><polygon points="654.8,191.2 660.1,185.8 658.6,183.1 653.5,192.2" fill="#00ffa4" stroke="#00ffa4" stroke-width="0.3"/><polygon points="660.1,185.8 665.6,192.6 664.4,194.7 658.6,183.1" fill="#00ffab" stroke="#00ffab" stroke-width="0.3"/><polygon points="665.6,192.6 671.0,190.8 669.8,192.1 664.4,194.7" fill="#0054ff" stroke="#505050" stroke-width="0.8"/><polygon points="671.0,190.8 676.5,192.6 675.4,179.5 669.8,192.1" fill="#00ff60" stroke="#00ff60" stroke-width="0.3"/><polygon points="676.5,192.6 681.9,192.2 680.6,194.7 675.4,179.5" fill="#00ff67" stroke="#00ff67" stroke-width="0.3"/><polygon points="681.9,192.2 687.3,188.7 686.2,188.2 680.6,194.7" fill="#0081ff" stroke="#505050" stroke-width="0.8"/><polygon points="687.3,188.7 693.3,180.5 692.4,177.9 686.2,188.2" fill="#00ff19" stroke="#00ff19" stroke-width="0.3"/><polygon points="624.9,182.4 631.9,194.0 630.5,195.2 622.6,179.2" fill="#00ff0e" stroke="#00ff0e" stroke-width="0.3"/><polygon points="631.9,194.0 637.2,191.8 635.4,191.0 630.5,195.2" fill="#00aeff" stroke="#505050" stroke-width="0.8"/><polygon points="637.2,191.8 642.0,185.4 639.6,177.3 635.4,191.0" fill="#28ff00" stroke="#28ff00" stroke-width="0.3"/><polygon points="642.0,185.4 648.1,195.4 644.7,169.4 639.6,177.3" fill="#ff0000" stroke="#ff0000" stroke-width="0.3"/><polygon points="648.1,195.4 653.5,192.2 652.1,193.0 644.7,169.4" fill="#ff0000" stroke="#ff0000" stroke-width="0.3"/><polygon points="653.5,192.2 658.6,183.1 656.7,172.5 652.1,193.0" fill="#92ff00" stroke="#92ff00" stroke-width="0.3"/><polygon points="658.6,183.1 664.4,194.7 663.1,195.3 656.7,172.5" fill="#8aff00" stroke="#8aff00" stroke-width="0.3"/><polygon points="664.4,194.7 669.8,192.1 668.5,191.6 663.1,195.3" fill="#00a2ff" stroke="#505050" stroke-width="0.8"/><polygon points="669.8,192.1 675.4,179.5 674.2,172.9 668.5,191.6" fill="#a0ff00" stroke="#a0ff00" stroke-width="0.3"/><polygon points="675.4,179.5 680.6,194.7 679.3,196.8 674.2,172.9" fill="#92ff00" stroke="#92ff00" stroke-width="0.3"/></svg>
<svg width="800" height="518" style="position:absolute;left:0;top:0">
<polyline points="332.00,345.80 334.46,347.58 336.92,349.36 339.38,351.15 341.84,352.93 344.30,354.71 346.76,356.49 349.22,358.27 351.68,360.05 354.14,361.82 356.60,363.60 359.06,365.37 361.52,367.14 363.98,368.91 366.44,370.67 368.90,372.44 371.36,374.20 373.82,375.96 376.28,377.71 378.74,379.46 381.20,381.21 383.66,382.96 386.12,384.70 388.58,386.43 391.04,388.17 393.50,389.89 395.96,391.62 398.42,393.34 400.88,395.05 403.34,396.76 405.80,398.46 408.26,400.16 410.72,401.85 413.18,403.54 415.64,405.22 418.10,406.89 420.56,408.56 423.02,410.22 425.48,411.87 427.94,413.51 430.40,415.15 432.86,416.78 435.32,418.40 437.78,420.02 440.24,421.62 442.70,423.22 445.16,424.81 447.62,426.38 450.08,427.95 452.54,429.51 455.00,431.06 457.46,432.60 459.92,434.13 462.38,435.64 464.84,437.15 467.30,438.64 469.76,440.13 472.22,441.60 474.68,443.06 477.14,444.50 479.60,445.93 482.06,447.35 484.52,448.76 486.98,450.15 489.44,451.53 491.90,452.89 494.36,454.24 496.82,455.57 499.28,456.88 501.74,458.18 504.20,459.46 506.66,460.73 509.12,461.97 511.58,463.20 514.04,464.41 516.50,465.60 518.96,466.77 521.42,467.92 523.88,469.04 526.34,470.15 528.80,471.23 531.26,472.29 533.72,473.32 536.18,474.33 538.64,475.31 541.10,476.26 543.56,477.18 546.02,478.08 548.48,478.94 550.94,479.77 553.40,480.57 555.86,481.32 558.32,482.04 560.78,482.72 563.24,483.35 565.70,483.94 568.16,484.46 570.62,484.93 573.08,485.33 575.54,485.63 578.00,485.80" fill="none" stroke="#ff0000" stroke-width="0.8"/>
<polyline points="332.00,346.30 334.46,348.08 336.92,349.86 339.38,351.65 341.84,353.43 344.30,355.21 346.76,356.99 349.22,358.77 351.68,360.55 354.14,362.32 356.60,364.10 359.06,365.87 361.52,367.64 363.98,369.41 366.44,371.17 368.90,372.94 371.36,374.70 373.82,376.46 376.28,378.21 378.74,379.96 381.20,381.71 383.66,383.46 386.12,385.20 388.58,386.93 391.04,388.67 393.50,390.39 395.96,392.12 398.42,393.84 400.88,395.55 403.34,397.26 405.80,398.96 408.26,400.66 410.72,402.35 413.18,404.04 415.64,405.72 418.10,407.39 420.56,409.06 423.02,410.72 425.48,412.37 427.94,414.01 430.40,415.65 432.86,417.28 435.32,418.90 437.78,420.52 440.24,422.12 442.70,423.72 445.16,425.31 447.62,426.88 450.08,428.45 452.54,430.01 455.00,431.56 457.46,433.10 459.92,434.63 462.38,436.14 464.84,437.65 467.30,439.14 469.76,440.63 472.22,442.10 474.68,443.56 477.14,445.00 479.60,446.43 482.06,447.85 484.52,449.26 486.98,450.65 489.44,452.03 491.90,453.39 494.36,454.74 496.82,456.07 499.28,457.38 501.74,458.68 504.20,459.96 506.66,461.23 509.12,462.47 511.58,463.70 514.04,464.91 516.50,466.10 518.96,467.27 521.42,468.42 523.88,469.54 526.34,470.65 528.80,471.73 531.26,472.79 533.72,473.82 536.18,474.83 538.64,475.81 541.10,476.76 543.56,477.68 546.02,478.58 548.48,479.44 550.94,480.27 553.40,481.07 555.86,481.82 558.32,482.54 560.78,483.22 563.24,483.85 565.70,484.44 568.16,484.96 570.62,485.43 573.08,485.83 575.54,486.13 578.00,486.30" fill="none" stroke="#0000ff" stroke-width="1"/>
<polyline points="332.00,346.00 334.46,347.78 336.92,349.56 339.38,351.35 341.84,353.13 344.30,354.91 346.76,356.69 349.22,358.47 351.68,360.25 354.14,362.02 356.60,363.80 359.06,365.57 361.52,367.34 363.98,369.11 366.44,370.87 368.90,372.64 371.36,374.40 373.82,376.16 376.28,377.91 378.74,379.66 381.20,381.41 383.66,383.16 386.12,384.90 388.58,386.63 391.04,388.37 393.50,390.09 395.96,391.82 398.42,393.54 400.88,395.25 403.34,396.96 405.80,398.66 408.26,400.36 410.72,402.05 413.18,403.74 415.64,405.42 418.10,407.09 420.56,408.76 423.02,410.42 425.48,412.07 427.94,413.71 430.40,415.35 432.86,416.98 435.32,418.60 437.78,420.22 440.24,421.82 442.70,423.42 445.16,425.01 447.62,426.58 450.08,428.15 452.54,429.71 455.00,431.26 457.46,432.80 459.92,434.33 462.38,435.84 464.84,437.35 467.30,438.84 469.76,440.33 472.22,441.80 474.68,443.26 477.14,444.70 479.60,446.13 482.06,447.55 484.52,448.96 486.98,450.35 489.44,451.73 491.90,453.09 494.36,454.44 496.82,455.77 499.28,457.08 501.74,458.38 504.20,459.66 506.66,460.93 509.12,462.17 511.58,463.40 514.04,464.61 516.50,465.80 518.96,466.97 521.42,468.12 523.88,469.24 526.34,470.35 528.80,471.43 531.26,472.49 533.72,473.52 536.18,474.53 538.64,475.51 541.10,476.46 543.56,477.38 546.02,478.28 548.48,479.14 550.94,479.97 553.40,480.77 555.86,481.52 558.32,482.24 560.78,482.92 563.24,483.55 565.70,484.14 568.16,484.66 570.62,485.13 573.08,485.53 575.54,485.83 578.00,486.00" fill="none" stroke="#000" stroke-width="1.1"/>
<path d="M332.5 346.5 H578.5 V485.5 H332.5 Z" fill="none" stroke="#000" stroke-width="1"/>
<path d="M328 374.5 H332" stroke="#000" stroke-width="1"/><path d="M328 402.5 H332" stroke="#000" stroke-width="1"/><path d="M328 430.5 H332" stroke="#000" stroke-width="1"/><path d="M328 458.5 H332" stroke="#000" stroke-width="1"/><path d="M381.5 486 V488" stroke="#222" stroke-width="1"/><path d="M430.5 486 V488" stroke="#222" stroke-width="1"/><path d="M480.5 486 V488" stroke="#222" stroke-width="1"/><path d="M529.5 486 V488" stroke="#222" stroke-width="1"/></svg>
<svg width="800" height="518" style="position:absolute;left:0;top:0"><defs><radialGradient id="psg" gradientUnits="userSpaceOnUse" cx="676" cy="458" r="85" gradientTransform="translate(676 458) scale(1 0.42) translate(-676 -458)"><stop offset="0.000" stop-color="#000082"/><stop offset="0.017" stop-color="#0000bd"/><stop offset="0.033" stop-color="#0000af"/><stop offset="0.050" stop-color="#000073"/><stop offset="0.067" stop-color="#00006f"/><stop offset="0.083" stop-color="#00009d"/><stop offset="0.100" stop-color="#0000a2"/><stop offset="0.117" stop-color="#000076"/><stop offset="0.133" stop-color="#000065"/><stop offset="0.150" stop-color="#000084"/><stop offset="0.167" stop-color="#000093"/><stop offset="0.183" stop-color="#000077"/><stop offset="0.200" stop-color="#000061"/><stop offset="0.217" stop-color="#000073"/><stop offset="0.233" stop-color="#000085"/><stop offset="0.250" stop-color="#000075"/><stop offset="0.267" stop-color="#000060"/><stop offset="0.283" stop-color="#000067"/><stop offset="0.300" stop-color="#000078"/><stop offset="0.317" stop-color="#000072"/><stop offset="0.333" stop-color="#000060"/><stop offset="0.350" stop-color="#00005f"/><stop offset="0.367" stop-color="#00006d"/><stop offset="0.383" stop-color="#00006d"/><stop offset="0.400" stop-color="#00005f"/><stop offset="0.417" stop-color="#00005b"/><stop offset="0.433" stop-color="#000064"/><stop offset="0.450" stop-color="#000067"/><stop offset="0.467" stop-color="#00005e"/><stop offset="0.483" stop-color="#000057"/><stop offset="0.500" stop-color="#00005d"/><stop offset="0.517" stop-color="#000061"/><stop offset="0.533" stop-color="#00005c"/><stop offset="0.550" stop-color="#000055"/><stop offset="0.567" stop-color="#000057"/><stop offset="0.583" stop-color="#00005c"/><stop offset="0.600" stop-color="#000059"/><stop offset="0.617" stop-color="#000053"/><stop offset="0.633" stop-color="#000053"/><stop offset="0.650" stop-color="#000057"/><stop offset="0.667" stop-color="#000056"/><stop offset="0.683" stop-color="#000051"/><stop offset="0.700" stop-color="#000050"/><stop offset="0.717" stop-color="#000053"/><stop offset="0.733" stop-color="#000054"/><stop offset="0.750" stop-color="#000051"/><stop offset="0.767" stop-color="#000050"/><stop offset="0.783" stop-color="#000051"/><stop offset="0.800" stop-color="#000053"/><stop offset="0.817" stop-color="#000051"/><stop offset="0.833" stop-color="#000050"/><stop offset="0.850" stop-color="#000051"/><stop offset="0.867" stop-color="#000052"/><stop offset="0.883" stop-color="#000051"/><stop offset="0.900" stop-color="#000050"/><stop offset="0.917" stop-color="#000050"/><stop offset="0.933" stop-color="#000051"/><stop offset="0.950" stop-color="#000051"/><stop offset="0.967" stop-color="#000050"/><stop offset="0.983" stop-color="#000050"/><stop offset="1.000" stop-color="#000051"/></radialGradient><pattern id="dots" width="3" height="3" patternUnits="userSpaceOnUse"><rect x="1" y="1" width="1.2" height="1.2" fill="#000" opacity="0.55"/></pattern><linearGradient id="pk" x1="0" y1="1" x2="0" y2="0"><stop offset="0" stop-color="#0020e0"/><stop offset="0.15" stop-color="#0080ff"/><stop offset="0.3" stop-color="#00e0f0"/><stop offset="0.45" stop-color="#40ff40"/><stop offset="0.62" stop-color="#c0f000"/><stop offset="0.8" stop-color="#ffa000"/><stop offset="1" stop-color="#ff6000"/></linearGradient></defs><polygon points="606,479 641.5,428.8 746.5,441.5 713.5,494.4" fill="url(#psg)"/><polygon points="606,479 641.5,428.8 746.5,441.5 713.5,494.4" fill="url(#dots)"/><path d="M668 456 C668.5 426 671 402 674.5 389.5 C678.5 402 682.5 426 684 456 C680 459 672 459 668 456 Z" fill="url(#pk)"/><path d="M671 456 L673.5 396 M674.5 457 L675 394 M678 457 L676.5 400 M681 455 L678 412" stroke="#000" stroke-width="0.8" opacity="0.7"/></svg>
<div class="t" style="left:10px;top:47.23px;font-size:10px;line-height:10px;letter-spacing:-0.55px">File Name</div>
<div class="t" style="left:88px;top:47.23px;font-size:10px;line-height:10px;letter-spacing:-0.35px">IMG_1783.JPG</div>
<div class="t" style="left:10px;top:67.94px;font-size:10px;line-height:10px;letter-spacing:-0.2px">Input&nbsp; WL [nm]</div>
<div class="t" style="left:117px;top:67.94px;font-size:10px;line-height:10px;">635</div>
<div class="t" style="left:10px;top:81.94px;font-size:10px;line-height:10px;letter-spacing:-0.2px">Output WL [nm]</div>
<div class="t" style="left:117px;top:81.94px;font-size:10px;line-height:10px;">550</div>
<div class="t" style="left:10px;top:95.94px;font-size:10px;line-height:10px;letter-spacing:-0.2px">Waves per Fringe</div>
<div class="t" style="left:117px;top:95.94px;font-size:10px;line-height:10px;">0.5</div>
<div class="t" style="left:10px;top:112.07px;font-size:9.6px;line-height:9.6px;font-weight:bold;letter-spacing:-0.1px"><u style="text-decoration-color:#444;text-underline-offset:1px">ABERRATIONS magnitude&nbsp;</u></div>
<div class="t" style="left:10px;top:128.53px;font-size:10px;line-height:10px;letter-spacing:-0.05px">Peak to Valley</div>
<div class="t" style="left:117px;top:128.53px;font-size:10px;line-height:10px;letter-spacing:-0.1px">0,129</div>
<div class="t" style="left:153px;top:128.53px;font-size:10px;line-height:10px;letter-spacing:-0.1px">(1/7,8 waves)</div>
<div class="t" style="left:10px;top:142.73px;font-size:10px;line-height:10px;letter-spacing:-0.05px">RMS</div>
<div class="t" style="left:117px;top:142.73px;font-size:10px;line-height:10px;letter-spacing:-0.1px">0,016</div>
<div class="t" style="left:153px;top:142.73px;font-size:10px;line-height:10px;letter-spacing:-0.1px">(1/63,8 waves)</div>
<div class="t" style="left:10px;top:156.94px;font-size:10px;line-height:10px;letter-spacing:-0.05px">STREHL ratio</div>
<div class="t" style="left:117px;top:156.94px;font-size:10px;line-height:10px;letter-spacing:-0.1px">0,990</div>
<div class="t" style="left:10px;top:171.13px;font-size:10px;line-height:10px;letter-spacing:-0.05px">Tilt</div>
<div class="t" style="left:119px;top:171.13px;font-size:10px;line-height:10px;letter-spacing:-0.1px">Removed</div>
<div class="t" style="left:10px;top:185.34px;font-size:10px;line-height:10px;letter-spacing:-0.05px">Defocus</div>
<div class="t" style="left:126px;top:185.34px;font-size:10px;line-height:10px;letter-spacing:-0.1px">Removed</div>
<div class="t" style="left:10px;top:199.53px;font-size:10px;line-height:10px;letter-spacing:-0.05px">Astigmatism</div>
<div class="t" style="left:66.5px;top:199.53px;font-size:10px;line-height:10px;letter-spacing:-0.1px">(low-order)</div>
<div class="t" style="left:126px;top:199.53px;font-size:10px;line-height:10px;letter-spacing:-0.1px">Removed</div>
<div class="t" style="left:10px;top:213.63px;font-size:10px;line-height:10px;letter-spacing:-0.05px">Coma</div>
<div class="t" style="left:65.4px;top:213.63px;font-size:10px;line-height:10px;letter-spacing:-0.1px">(low-order)</div>
<div class="t" style="left:126px;top:213.63px;font-size:10px;line-height:10px;letter-spacing:-0.1px">Removed</div>
<div class="t" style="left:10px;top:227.73px;font-size:10px;line-height:10px;letter-spacing:-0.05px">Spherical Ab.(low-order)</div>
<div class="t" style="left:123.6px;top:227.73px;font-size:10px;line-height:10px;letter-spacing:-0.1px">0,113</div>
<div class="t" style="left:10.5px;top:244.69px;font-size:11px;line-height:11px;color:#8a8a8a;font-style:italic;letter-spacing:0px">Surface Diam</div>
<div class="t" style="left:151.5px;top:244.69px;font-size:11px;line-height:11px;color:#8a8a8a;font-style:italic;letter-spacing:0.2px">Curv.Radius</div>
<div class="t" style="left:10.5px;top:259.69px;font-size:11px;line-height:11px;color:#8a8a8a;font-style:italic;letter-spacing:0.15px">Target Conic Constant [K]</div>
<div class="t" style="left:10.5px;top:277.09px;font-size:11px;line-height:11px;color:#8a8a8a;font-style:italic;letter-spacing:0.15px">Best Conic Constant Fit</div>
<div class="t" style="left:10px;top:298.94px;font-size:10px;line-height:10px;font-weight:bold;letter-spacing:0.6px;-webkit-text-stroke:0.25px #000"><u style="text-decoration-color:#333">DATE</u></div>
<div class="t" style="left:10px;top:334.64px;font-size:10px;line-height:10px;font-weight:bold;letter-spacing:0.6px;-webkit-text-stroke:0.25px #000"><u style="text-decoration-color:#333">OPERATOR</u></div>
<div class="t" style="left:10px;top:370.04px;font-size:10px;line-height:10px;font-weight:bold;letter-spacing:0.6px;-webkit-text-stroke:0.25px #000"><u style="text-decoration-color:#333">INSTRUMENT</u></div>
<div class="t" style="left:10px;top:405.54px;font-size:10px;line-height:10px;font-weight:bold;letter-spacing:0.6px;-webkit-text-stroke:0.25px #000"><u style="text-decoration-color:#333">OPTIC DESCRIPTION</u></div>
<div class="t" style="left:10px;top:454.94px;font-size:10px;line-height:10px;font-weight:bold;letter-spacing:0.6px;-webkit-text-stroke:0.25px #000"><u style="text-decoration-color:#333">NOTES</u></div>
<div class="t" style="left:163px;top:29.42px;font-size:12.5px;line-height:12.5px;transform:scaleX(0.92);transform-origin:0 0;font-weight:bold"><u>ANALYSIS&nbsp; REPORT</u></div>
<div class="t" style="left:362.6px;top:50.01px;font-size:10.5px;line-height:10.5px;font-weight:bold">Synthetic Interferogram</div>
<div class="t" style="left:499.1px;top:319.51px;font-size:10.5px;line-height:10.5px;font-weight:bold">M.T.F.</div>
<div class="t" style="left:317.7px;top:333.14px;font-size:10px;line-height:10px;transform:scaleX(0.94);transform-origin:0 0;">MODULATION</div>
<div class="t" style="left:318px;top:345.34px;font-size:10px;line-height:10px;transform:scaleX(0.9);transform-origin:0 0;">1</div>
<div class="t" style="left:318px;top:370.04px;font-size:10px;line-height:10px;transform:scaleX(0.9);transform-origin:0 0;">0.8</div>
<div class="t" style="left:318px;top:398.44px;font-size:10px;line-height:10px;transform:scaleX(0.9);transform-origin:0 0;">0.6</div>
<div class="t" style="left:318px;top:426.14px;font-size:10px;line-height:10px;transform:scaleX(0.9);transform-origin:0 0;">0.4</div>
<div class="t" style="left:318px;top:454.54px;font-size:10px;line-height:10px;transform:scaleX(0.9);transform-origin:0 0;">0.2</div>
<div class="t" style="left:318px;top:482.74px;font-size:10px;line-height:10px;transform:scaleX(0.9);transform-origin:0 0;">0</div>
<div class="t" style="left:376.8px;top:490.04px;font-size:10px;line-height:10px;transform:scaleX(0.9);transform-origin:0 0;">0,2</div>
<div class="t" style="left:425.8px;top:490.04px;font-size:10px;line-height:10px;transform:scaleX(0.9);transform-origin:0 0;">0,4</div>
<div class="t" style="left:475.7px;top:490.04px;font-size:10px;line-height:10px;transform:scaleX(0.9);transform-origin:0 0;">0,6</div>
<div class="t" style="left:523.6px;top:490.04px;font-size:10px;line-height:10px;transform:scaleX(0.9);transform-origin:0 0;">0,8</div>
<div class="t" style="left:568.3px;top:490.04px;font-size:10px;line-height:10px;transform:scaleX(0.9);transform-origin:0 0;">1,0</div>
<div class="t" style="left:492px;top:499.94px;font-size:10px;line-height:10px;transform:scaleX(0.95);transform-origin:0 0;">SPATIAL FREQUENCY</div>
<div class="t" style="left:513.5px;top:348.34px;font-size:10px;line-height:10px;transform:scaleX(0.92);transform-origin:0 0;">BLACK=IDEAL</div>
<div class="t" style="left:513.5px;top:358.44px;font-size:10px;line-height:10px;color:#0000ff;transform:scaleX(0.92);transform-origin:0 0;">BLUE&nbsp; =SAG.</div>
<div class="t" style="left:513.5px;top:367.74px;font-size:10px;line-height:10px;color:#ff0000;transform:scaleX(0.92);transform-origin:0 0;">RED&nbsp;&nbsp;&nbsp; =TANG</div>
<div class="t" style="left:655px;top:21.71px;font-size:10.5px;line-height:10.5px;font-weight:bold">Wave Front</div>
<div class="t" style="left:544.6px;top:51.33px;font-size:10px;line-height:10px;font-weight:bold">P</div>
<div class="t" style="left:544.6px;top:214.53px;font-size:10px;line-height:10px;font-weight:bold">V</div>
<div class="t" style="left:777px;top:136.34px;font-size:10px;line-height:10px;">Y</div>
<div class="t" style="left:646.6px;top:213.03px;font-size:10px;line-height:10px;">X</div>
<div class="t" style="left:755px;top:306.04px;font-size:10px;line-height:10px;font-weight:bold">PSF</div>
<div class="t" style="left:755px;top:319.14px;font-size:10px;line-height:10px;font-weight:bold">Map</div>
<div class="t" style="left:757.8px;top:440.14px;font-size:10px;line-height:10px;font-weight:bold">PSF</div>
<div class="t" style="left:750px;top:452.51px;font-size:10.5px;line-height:10.5px;font-weight:bold">Surface</div>
</body></html>
